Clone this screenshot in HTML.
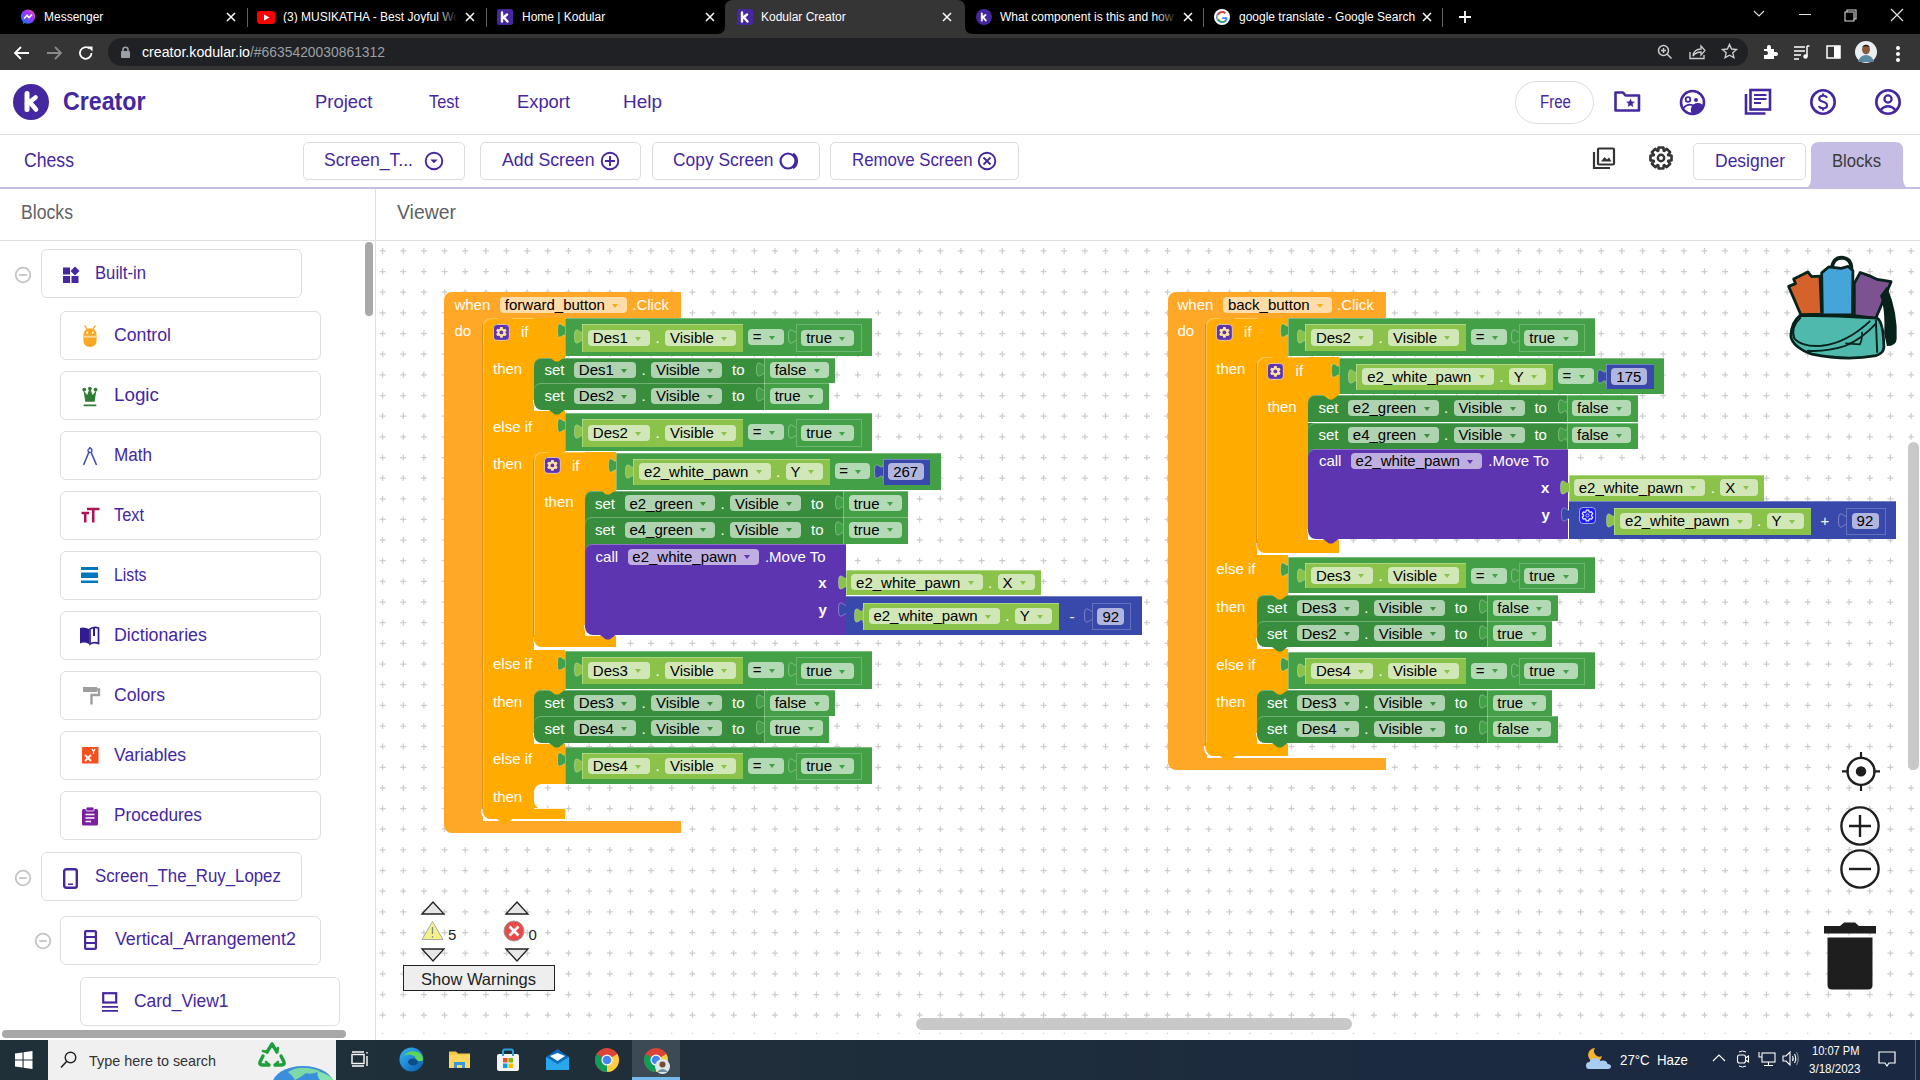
<!DOCTYPE html><html><head><meta charset="utf-8"><style>html,body{margin:0;padding:0;width:1920px;height:1080px;overflow:hidden;background:#fff;font-family:"Liberation Sans",sans-serif}body>div,body>svg{position:absolute}svg{overflow:visible}</style></head><body>
<div style="left:0px;top:0px;width:1920px;height:34px;background:#000;"></div>
<div style="left:0px;top:34px;width:1920px;height:36px;background:#353535;"></div>
<svg style="left:717px;top:0px" width="256" height="34" viewBox="0 0 256 34"><path d="M0 34 Q8 34 8 26 V8 Q8 0 16 0 H240 Q248 0 248 8 V26 Q248 34 256 34 Z" fill="#353535"/></svg>
<svg style="left:20px;top:9px;" width="16" height="16" viewBox="0 0 16 16"><defs><linearGradient id="mg" x1="0" y1="1" x2="1" y2="0"><stop offset="0" stop-color="#0a7cff"/><stop offset=".6" stop-color="#a033ff"/><stop offset="1" stop-color="#ff5c87"/></linearGradient></defs><circle cx="8" cy="7.6" r="7.2" fill="url(#mg)"/><path d="M2.5 15.5 L4 11 L6 13 Z" fill="#0a7cff"/><path d="M4 9.5 L7 6.5 L9 8.5 L12 5.5" stroke="#fff" stroke-width="1.6" fill="none"/></svg>
<div style="left:44px;top:10.84px;font-size:12px;color:#fff;line-height:1;white-space:pre;">Messenger</div>
<svg style="left:226px;top:12px;" width="10" height="10" viewBox="0 0 10 10"><path d="M1 1 L9 9 M9 1 L1 9" stroke="#fff" stroke-width="1.5"/></svg>
<svg style="left:257px;top:11px;" width="18" height="13" viewBox="0 0 18 13"><rect x="0" y="0" width="18" height="13" rx="3" fill="#f00"/><path d="M7 3.5 L12.5 6.5 L7 9.5Z" fill="#fff"/></svg>
<div style="left:283px;top:10.84px;font-size:12px;color:#fff;line-height:1;white-space:pre;width:174px;overflow:hidden">(3) MUSIKATHA - Best Joyful Wor</div>
<svg style="left:465px;top:12px;" width="10" height="10" viewBox="0 0 10 10"><path d="M1 1 L9 9 M9 1 L1 9" stroke="#fff" stroke-width="1.5"/></svg>
<svg style="left:497px;top:9px;" width="16" height="16" viewBox="0 0 16 16"><rect width="16" height="16" rx="2.5" fill="#4527a0"/><path d="M5 3.5 v9 M5 9.5 L10 5.5 M6.8 8.2 L10.5 12.5" stroke="#fff" stroke-width="2.4" stroke-linecap="round" fill="none"/></svg>
<div style="left:522px;top:10.84px;font-size:12px;color:#fff;line-height:1;white-space:pre;">Home | Kodular</div>
<svg style="left:705px;top:12px;" width="10" height="10" viewBox="0 0 10 10"><path d="M1 1 L9 9 M9 1 L1 9" stroke="#fff" stroke-width="1.5"/></svg>
<svg style="left:737px;top:9px;" width="16" height="16" viewBox="0 0 16 16"><rect width="16" height="16" rx="2.5" fill="#4527a0"/><path d="M5 3.5 v9 M5 9.5 L10 5.5 M6.8 8.2 L10.5 12.5" stroke="#fff" stroke-width="2.4" stroke-linecap="round" fill="none"/></svg>
<div style="left:761px;top:10.84px;font-size:12px;color:#fff;line-height:1;white-space:pre;">Kodular Creator</div>
<svg style="left:942px;top:12px;" width="10" height="10" viewBox="0 0 10 10"><path d="M1 1 L9 9 M9 1 L1 9" stroke="#fff" stroke-width="1.5"/></svg>
<svg style="left:976px;top:9px;" width="16" height="16" viewBox="0 0 16 16"><circle cx="8" cy="8" r="8" fill="#4527a0"/><path d="M5.8 4.5 v7 M5.8 9 L9.5 6 M7 8 L9.8 11.5" stroke="#fff" stroke-width="1.9" stroke-linecap="round" fill="none"/></svg>
<div style="left:1000px;top:10.84px;font-size:12px;color:#fff;line-height:1;white-space:pre;width:176px;overflow:hidden">What component is this and how</div>
<svg style="left:1183px;top:12px;" width="10" height="10" viewBox="0 0 10 10"><path d="M1 1 L9 9 M9 1 L1 9" stroke="#fff" stroke-width="1.5"/></svg>
<svg style="left:1214px;top:9px;" width="16" height="16" viewBox="0 0 16 16"><circle cx="8" cy="8" r="8" fill="#fff"/><path d="M13.5 8.2 H8.2 V9.9 H11.6 Q11 12.3 8 12.3 A4.3 4.3 0 1 1 10.9 4.8 L12.1 3.6 A6 6 0 1 0 8 14 Q13.6 14 13.5 8.2Z" fill="#4285f4"/><path d="M3.2 5.4 A5.6 5.6 0 0 1 12.1 3.6 L10.9 4.8 A4.3 4.3 0 0 0 4.5 6.3Z" fill="#ea4335"/><path d="M3.2 5.4 L4.5 6.3 A4.3 4.3 0 0 0 4.5 9.7 L3.2 10.7 A6 6 0 0 1 3.2 5.4Z" fill="#fbbc05"/><path d="M3.2 10.7 L4.5 9.7 A4.3 4.3 0 0 0 10.4 11.6 L11.6 12.6 A6 6 0 0 1 3.2 10.7Z" fill="#34a853"/></svg>
<div style="left:1239px;top:10.84px;font-size:12px;color:#fff;line-height:1;white-space:pre;">google translate - Google Search</div>
<svg style="left:1422px;top:12px;" width="10" height="10" viewBox="0 0 10 10"><path d="M1 1 L9 9 M9 1 L1 9" stroke="#fff" stroke-width="1.5"/></svg>
<div style="left:437px;top:4px;width:21px;height:26px;background:linear-gradient(90deg,rgba(0,0,0,0),#000);"></div>
<div style="left:1156px;top:4px;width:21px;height:26px;background:linear-gradient(90deg,rgba(0,0,0,0),#000);"></div>
<div style="left:247px;top:8px;width:1px;height:19px;background:#5f5f5f;"></div>
<div style="left:486px;top:8px;width:1px;height:19px;background:#5f5f5f;"></div>
<div style="left:1203px;top:8px;width:1px;height:19px;background:#5f5f5f;"></div>
<div style="left:1442px;top:8px;width:1px;height:19px;background:#5f5f5f;"></div>
<svg style="left:1458px;top:10px;" width="14" height="14" viewBox="0 0 14 14"><path d="M7 1 V13 M1 7 H13" stroke="#fff" stroke-width="1.8"/></svg>
<svg style="left:1753px;top:10px;" width="12" height="8" viewBox="0 0 12 8"><path d="M1 1 L6 6 L11 1" stroke="#ddd" stroke-width="1.2" fill="none"/></svg>
<div style="left:1799px;top:14px;width:12px;height:1px;background:#ddd;"></div>
<svg style="left:1844px;top:9px;" width="13" height="13" viewBox="0 0 13 13"><path d="M3 3 V1 H12 V10 H10 M1 3 H10 V12 H1 Z" stroke="#ddd" stroke-width="1.1" fill="none"/></svg>
<svg style="left:1890px;top:8px;" width="14" height="14" viewBox="0 0 14 14"><path d="M1 1 L13 13 M13 1 L1 13" stroke="#ddd" stroke-width="1.3"/></svg>
<svg style="left:13px;top:45px;" width="18" height="16" viewBox="0 0 18 16"><path d="M16 8 H2 M8 2 L2 8 L8 14" stroke="#fff" stroke-width="1.8" fill="none"/></svg>
<svg style="left:45px;top:45px;" width="18" height="16" viewBox="0 0 18 16"><path d="M2 8 H16 M10 2 L16 8 L10 14" stroke="#8a8a8a" stroke-width="1.8" fill="none"/></svg>
<svg style="left:77px;top:44px;" width="18" height="18" viewBox="0 0 18 18"><path d="M14.5 9 A5.8 5.8 0 1 1 12.5 4.6" stroke="#fff" stroke-width="1.8" fill="none"/><path d="M10.5 2.5 H15.5 V7.5 Z" fill="#fff"/></svg>
<div style="left:108px;top:38px;width:1640px;height:28px;background:#202124;border-radius:14px;"></div>
<svg style="left:120px;top:46px;" width="12" height="12" viewBox="0 0 12 12"><rect x="1" y="5" width="9" height="7" rx="1" fill="#9aa0a6"/><path d="M3 5.5 V3.8 A2.5 2.5 0 0 1 8 3.8 V5.5" stroke="#9aa0a6" stroke-width="1.6" fill="none"/></svg>
<div style="left:142px;top:45.15px;font-size:14px;color:#fff;line-height:1;white-space:pre;transform:scaleX(1.0129);transform-origin:0 0;">creator.kodular.io</div>
<div style="left:250px;top:45.15px;font-size:14px;color:#9aa0a6;line-height:1;white-space:pre;transform:scaleX(0.9908);transform-origin:0 0;">/#6635420030861312</div>
<svg style="left:1657px;top:44px;" width="16" height="16" viewBox="0 0 16 16"><circle cx="6.5" cy="6.5" r="5" stroke="#ccc" stroke-width="1.5" fill="none"/><path d="M10 10 L14.5 14.5 M4 6.5 H9 M6.5 4 V9" stroke="#ccc" stroke-width="1.5"/></svg>
<svg style="left:1689px;top:44px;" width="17" height="16" viewBox="0 0 17 16"><path d="M1 8 V14.5 H15 V11" stroke="#ccc" stroke-width="1.4" fill="none"/><path d="M4 12 Q5 5 12 5 V2 L16 6.5 L12 11 V8 Q7 8 4 12Z" stroke="#ccc" stroke-width="1.3" fill="none"/></svg>
<svg style="left:1721px;top:43px;" width="17" height="17" viewBox="0 0 17 17"><path d="M8.5 1.5 L10.6 6 L15.5 6.5 L11.8 9.8 L12.9 14.7 L8.5 12.2 L4.1 14.7 L5.2 9.8 L1.5 6.5 L6.4 6 Z" stroke="#ccc" stroke-width="1.4" fill="none"/></svg>
<svg style="left:1761px;top:43px;" width="18" height="18" viewBox="0 0 18 18"><path d="M3 6 H6 V4 A2 2 0 0 1 10 4 V6 H13 V9 H15 A2 2 0 0 1 15 13 H13 V16 H3 V12 H5 A2 2 0 0 0 5 8 H3 Z" fill="#fff"/></svg>
<svg style="left:1793px;top:44px;" width="17" height="16" viewBox="0 0 17 16"><path d="M1 3 H12 M1 7 H12 M1 11 H8 M1 15 H6" stroke="#fff" stroke-width="1.5"/><path d="M14 2 V12" stroke="#fff" stroke-width="1.5"/><circle cx="12.5" cy="12.5" r="2.2" fill="#fff"/><path d="M14 2 H16.5" stroke="#fff" stroke-width="1.5"/></svg>
<svg style="left:1826px;top:45px;" width="15" height="14" viewBox="0 0 15 14"><rect x="1" y="1" width="13" height="12" stroke="#fff" stroke-width="1.5" fill="none"/><rect x="8" y="1" width="6" height="12" fill="#fff"/></svg>
<svg style="left:1854px;top:40px;" width="24" height="24" viewBox="0 0 24 24"><circle cx="12" cy="12" r="11" fill="#e8eef2"/><path d="M4 22 Q6 15 12 15 Q18 15 20 22Z" fill="#5a8aa0"/><ellipse cx="12" cy="9.5" rx="4" ry="4.8" fill="#8a5a3c"/><path d="M8 7 Q12 2.5 16 7 Q12 5.5 8 7Z" fill="#1a1a1a"/></svg>
<div style="left:1896px;top:46px;width:3.5px;height:3.5px;background:#fff;border-radius:2px;"></div>
<div style="left:1896px;top:52px;width:3.5px;height:3.5px;background:#fff;border-radius:2px;"></div>
<div style="left:1896px;top:58px;width:3.5px;height:3.5px;background:#fff;border-radius:2px;"></div>
<div style="left:0px;top:70px;width:1920px;height:64px;background:#fff;"></div>
<div style="left:0px;top:134px;width:1920px;height:1px;background:#e0e0e0;"></div>
<svg style="left:13px;top:84px;" width="36" height="36" viewBox="0 0 36 36"><circle cx="18" cy="18" r="18" fill="#4527a0"/><path d="M14 9.5 V25.5" stroke="#fff" stroke-width="5" stroke-linecap="round"/><path d="M14 20 L22.5 13.5 M17 18.5 L23 25.5" stroke="#fff" stroke-width="4.6" stroke-linecap="round"/></svg>
<div style="left:63px;top:88.84px;font-size:25px;color:#4527a0;line-height:1;white-space:pre;font-weight:bold;transform:scaleX(0.9280);transform-origin:0 0;">Creator</div>
<div style="left:314.6px;top:91.92px;font-size:19px;color:#4527a0;line-height:1;white-space:pre;transform:scaleX(0.9707);transform-origin:0 0;">Project</div>
<div style="left:429px;top:91.92px;font-size:19px;color:#4527a0;line-height:1;white-space:pre;transform:scaleX(0.8609);transform-origin:0 0;">Test</div>
<div style="left:517px;top:91.92px;font-size:19px;color:#4527a0;line-height:1;white-space:pre;transform:scaleX(0.9652);transform-origin:0 0;">Export</div>
<div style="left:623px;top:91.92px;font-size:19px;color:#4527a0;line-height:1;white-space:pre;transform:scaleX(0.9980);transform-origin:0 0;">Help</div>
<div style="left:1515px;top:80.5px;width:79px;height:43.5px;border:1px solid #dcdcdc;border-radius:22px;box-sizing:border-box"></div>
<div style="left:1540px;top:93.69px;font-size:17.5px;color:#4527a0;line-height:1;white-space:pre;transform:scaleX(0.8615);transform-origin:0 0;">Free</div>
<svg style="left:1613px;top:90px;" width="29" height="24" viewBox="0 0 29 24"><path d="M2.5 2.5 H10 L12.5 5.5 H26 V20.5 H2.5 Z" stroke="#4527a0" stroke-width="2.6" fill="none" stroke-linejoin="round"/><path d="M17.5 8.5 L18.8 11.6 L22 11.8 L19.5 13.8 L20.3 17 L17.5 15.2 L14.7 17 L15.5 13.8 L13 11.8 L16.2 11.6Z" fill="#4527a0"/></svg>
<svg style="left:1679px;top:89px;" width="27" height="27" viewBox="0 0 27 27"><circle cx="13.5" cy="13.5" r="11.5" stroke="#4527a0" stroke-width="2.6" fill="none"/><circle cx="9" cy="10.5" r="2.3" stroke="#4527a0" stroke-width="1.8" fill="none"/><circle cx="17" cy="11" r="2" fill="#4527a0"/><path d="M4.5 19 Q9 14 14 16.5" stroke="#4527a0" stroke-width="1.8" fill="none"/><path d="M13 25 A5.5 5.5 0 0 1 24.5 17 A11.5 11.5 0 0 1 13 25Z" fill="#4527a0"/></svg>
<svg style="left:1743px;top:88px;" width="30" height="28" viewBox="0 0 30 28"><path d="M3 6 V25.5 H22.5" stroke="#4527a0" stroke-width="2.6" fill="none"/><rect x="7.5" y="2" width="19.5" height="19.5" stroke="#4527a0" stroke-width="2.6" fill="none"/><path d="M11 7 H23.5 M11 11 H23.5 M11 15 H18" stroke="#4527a0" stroke-width="2.2"/></svg>
<svg style="left:1809px;top:88px;" width="28" height="28" viewBox="0 0 28 28"><circle cx="14" cy="14" r="11.7" stroke="#4527a0" stroke-width="2.6" fill="none"/><path d="M17.8 9.8 Q17.5 7.8 14 7.8 Q10.2 7.8 10.2 10.6 Q10.2 13 14 13.8 Q18 14.6 18 17.4 Q18 20.2 14 20.2 Q10.4 20.2 10 18" stroke="#4527a0" stroke-width="2.1" fill="none"/><path d="M14 5.5 V8 M14 20 V22.5" stroke="#4527a0" stroke-width="2.1"/></svg>
<svg style="left:1874px;top:88px;" width="28" height="28" viewBox="0 0 28 28"><circle cx="14" cy="14" r="11.7" stroke="#4527a0" stroke-width="2.6" fill="none"/><circle cx="14" cy="11" r="3.6" stroke="#4527a0" stroke-width="2.3" fill="none"/><path d="M6.5 22 Q14 14.5 21.5 22" stroke="#4527a0" stroke-width="2.4" fill="none"/></svg>
<div style="left:0px;top:135px;width:1920px;height:53px;background:#fff;"></div>
<div style="left:0px;top:187px;width:1920px;height:2px;background:#c5bde3;"></div>
<div style="left:24px;top:150.66px;font-size:19.3px;color:#4527a0;line-height:1;white-space:pre;transform:scaleX(0.9140);transform-origin:0 0;">Chess</div>
<div style="left:303px;top:142px;width:162px;height:38px;border:1px solid #dcdcdc;border-radius:5px;box-sizing:border-box"></div>
<div style="left:324px;top:150.42px;font-size:19px;color:#4527a0;line-height:1;white-space:pre;transform:scaleX(0.9261);transform-origin:0 0;">Screen_T...</div>
<svg style="left:423.5px;top:151px;" width="20" height="20" viewBox="0 0 20 20"><circle cx="10" cy="10" r="8.3" stroke="#4527a0" stroke-width="1.9" fill="none"/><path d="M6.3 8.6 L10 12.3 L13.7 8.6Z" fill="#4527a0"/></svg>
<div style="left:480px;top:142px;width:161px;height:38px;border:1px solid #dcdcdc;border-radius:5px;box-sizing:border-box"></div>
<div style="left:501.5px;top:150.42px;font-size:19px;color:#4527a0;line-height:1;white-space:pre;transform:scaleX(0.9316);transform-origin:0 0;">Add Screen</div>
<svg style="left:599.5px;top:151px;" width="20" height="20" viewBox="0 0 20 20"><circle cx="10" cy="10" r="8.3" stroke="#4527a0" stroke-width="1.9" fill="none"/><path d="M10 5 V15 M5 10 H15" stroke="#4527a0" stroke-width="1.9"/></svg>
<div style="left:651.5px;top:142px;width:168px;height:38px;border:1px solid #dcdcdc;border-radius:5px;box-sizing:border-box"></div>
<div style="left:672.5px;top:150.42px;font-size:19px;color:#4527a0;line-height:1;white-space:pre;transform:scaleX(0.9150);transform-origin:0 0;">Copy Screen</div>
<svg style="left:778.5px;top:151px;" width="22" height="20" viewBox="0 0 22 20"><circle cx="9" cy="10" r="7.5" stroke="#4527a0" stroke-width="2.2" fill="none"/><path d="M14 2.8 A8.5 8.5 0 0 1 14 17.2" stroke="#4527a0" stroke-width="2.2" fill="none"/></svg>
<div style="left:830px;top:142px;width:188.5px;height:38px;border:1px solid #dcdcdc;border-radius:5px;box-sizing:border-box"></div>
<div style="left:852px;top:150.42px;font-size:19px;color:#4527a0;line-height:1;white-space:pre;transform:scaleX(0.8845);transform-origin:0 0;">Remove Screen</div>
<svg style="left:977px;top:151px;" width="20" height="20" viewBox="0 0 20 20"><circle cx="10" cy="10" r="8.3" stroke="#4527a0" stroke-width="1.9" fill="none"/><path d="M6.5 6.5 L13.5 13.5 M13.5 6.5 L6.5 13.5" stroke="#4527a0" stroke-width="1.9"/></svg>
<svg style="left:1592px;top:147px;" width="24" height="24" viewBox="0 0 24 24"><path d="M2 5 V21 H18" stroke="#333" stroke-width="2.2" fill="none"/><rect x="6" y="1.5" width="16" height="16" rx="1" stroke="#333" stroke-width="2.2" fill="none"/><path d="M9 14.5 L12.5 10 L15 12.5 L17 10.5 L19.5 14.5Z" fill="#333"/></svg>
<svg style="left:1650px;top:147px;" width="22" height="22" viewBox="0 0 22 22"><path d="M21.54 8.64 L21.54 13.36 L18.30 13.75 L18.10 14.22 L20.12 16.79 L16.79 20.12 L14.22 18.10 L13.75 18.30 L13.36 21.54 L8.64 21.54 L8.25 18.30 L7.78 18.10 L5.21 20.12 L1.88 16.79 L3.90 14.22 L3.70 13.75 L0.46 13.36 L0.46 8.64 L3.70 8.25 L3.90 7.78 L1.88 5.21 L5.21 1.88 L7.78 3.90 L8.25 3.70 L8.64 0.46 L13.36 0.46 L13.75 3.70 L14.22 3.90 L16.79 1.88 L20.12 5.21 L18.10 7.78 L18.30 8.25Z" stroke="#333" stroke-width="2.6" fill="none" stroke-linejoin="round"/><circle cx="11" cy="11" r="3.2" stroke="#333" stroke-width="2.4" fill="none"/></svg>
<div style="left:1692.5px;top:142.5px;width:113px;height:37px;border:1px solid #dcdcdc;border-radius:5px;box-sizing:border-box"></div>
<div style="left:1714.5px;top:151.32px;font-size:19px;color:#4527a0;line-height:1;white-space:pre;transform:scaleX(0.9206);transform-origin:0 0;">Designer</div>
<svg style="left:1801px;top:142px" width="112" height="47" viewBox="0 0 112 47"><path d="M0 47 Q10 47 10 37 V8 Q10 0 18 0 H94 Q102 0 102 8 V37 Q102 47 112 47Z" fill="#c5bde3"/></svg>
<div style="left:1832.3px;top:151.32px;font-size:19px;color:#3b3b3b;line-height:1;white-space:pre;transform:scaleX(0.8756);transform-origin:0 0;">Blocks</div>
<div style="left:0px;top:189px;width:1920px;height:51px;background:#fff;"></div>
<div style="left:0px;top:240px;width:1920px;height:1px;background:#e0e0e0;"></div>
<div style="left:21px;top:202.86px;font-size:19.3px;color:#616161;line-height:1;white-space:pre;transform:scaleX(0.9148);transform-origin:0 0;">Blocks</div>
<div style="left:397px;top:202.86px;font-size:19.3px;color:#616161;line-height:1;white-space:pre;transform:scaleX(1.0060);transform-origin:0 0;">Viewer</div>
<div style="left:0px;top:241px;width:375px;height:799px;background:#fff;"></div>
<div style="left:375px;top:189px;width:1px;height:851px;background:#e0e0e0;"></div>
<div style="left:365px;top:242px;width:8px;height:74px;background:#a8a8a8;border-radius:4px;"></div>
<div style="left:2px;top:1030px;width:344px;height:8px;background:#a8a8a8;border-radius:4px;"></div>
<svg style="left:13.8px;top:266px;" width="18" height="18" viewBox="0 0 18 18"><circle cx="9" cy="9" r="7.3" stroke="#c4c4c4" stroke-width="1.8" fill="none"/><path d="M5.2 9 H12.8" stroke="#c4c4c4" stroke-width="1.8"/></svg>
<div style="left:40.6px;top:249.3px;width:261.2px;height:49px;border:1px solid #dedede;border-radius:6px;box-sizing:border-box;background:#fff"></div>
<div style="left:95.4px;top:263.69px;font-size:18.8px;color:#4527a0;line-height:1;white-space:pre;transform:scaleX(0.8875);transform-origin:0 0;">Built-in</div>
<svg style="left:62px;top:266px;" width="19" height="18" viewBox="0 0 19 18"><rect x="1" y="1.5" width="7" height="7" fill="#4527a0"/><rect x="1" y="10" width="7" height="7" fill="#4527a0"/><rect x="9.5" y="10" width="7" height="7" fill="#4527a0"/><path d="M13 0.5 L17.5 5 L13 9.5 L8.5 5Z" fill="#4527a0"/></svg>
<div style="left:59.5px;top:311.2px;width:261px;height:49px;border:1px solid #dedede;border-radius:6px;box-sizing:border-box;background:#fff"></div>
<div style="left:114.4px;top:325.59px;font-size:18.8px;color:#4527a0;line-height:1;white-space:pre;transform:scaleX(0.9405);transform-origin:0 0;">Control</div>
<svg style="left:82px;top:325px;" width="16" height="23" viewBox="0 0 16 23"><path d="M1.4 11 Q1.4 3.2 8 3.2 Q14.6 3.2 14.6 11 V15.5 Q14.6 22 8 22 Q1.4 22 1.4 15.5 Z" fill="#f9a825"/><path d="M3 0.8 L5.2 4.5 M13 0.8 L10.8 4.5" stroke="#f9a825" stroke-width="1.3" stroke-linecap="round"/><rect x="1.4" y="10.7" width="13.2" height="2" fill="#fbd591"/><circle cx="5.2" cy="7.8" r="1" fill="#fff"/><circle cx="10.8" cy="7.8" r="1" fill="#fff"/></svg>
<div style="left:59.5px;top:371.2px;width:261px;height:49px;border:1px solid #dedede;border-radius:6px;box-sizing:border-box;background:#fff"></div>
<div style="left:114.4px;top:385.59px;font-size:18.8px;color:#4527a0;line-height:1;white-space:pre;transform:scaleX(1.0012);transform-origin:0 0;">Logic</div>
<svg style="left:82px;top:386px;" width="16" height="21" viewBox="0 0 16 21"><circle cx="2.3" cy="3.6" r="1.9" fill="#2e7d32"/><circle cx="7.9" cy="2.6" r="1.9" fill="#2e7d32"/><circle cx="13.5" cy="3.6" r="1.9" fill="#2e7d32"/><path d="M1.5 4.5 L5.2 9 L7 4 H8.8 L10.6 9 L14.3 4.5 L12.6 15.8 H3.3 Z" fill="#2e7d32"/><rect x="1.5" y="18.4" width="13" height="1.8" rx="0.9" fill="#2e7d32"/></svg>
<div style="left:59.5px;top:431.2px;width:261px;height:49px;border:1px solid #dedede;border-radius:6px;box-sizing:border-box;background:#fff"></div>
<div style="left:114.4px;top:445.59px;font-size:18.8px;color:#4527a0;line-height:1;white-space:pre;transform:scaleX(0.9092);transform-origin:0 0;">Math</div>
<svg style="left:82px;top:446px;" width="16" height="20" viewBox="0 0 16 20"><circle cx="8" cy="4.5" r="2" stroke="#3f51b5" stroke-width="1.3" fill="none"/><path d="M8 1 V3 M7 6 L1.5 19 M9 6 L14.5 19" stroke="#3f51b5" stroke-width="1.6" fill="none"/></svg>
<div style="left:59.5px;top:491.2px;width:261px;height:49px;border:1px solid #dedede;border-radius:6px;box-sizing:border-box;background:#fff"></div>
<div style="left:114.4px;top:505.59px;font-size:18.8px;color:#4527a0;line-height:1;white-space:pre;transform:scaleX(0.8701);transform-origin:0 0;">Text</div>
<svg style="left:81px;top:506px;" width="19" height="17" viewBox="0 0 19 17"><path d="M0.5 7 H8 M4.2 7 V16.5 M6 3 H18.5 M12.2 3 V16.5" stroke="#ad1457" stroke-width="2.6" fill="none"/></svg>
<div style="left:59.5px;top:551.2px;width:261px;height:49px;border:1px solid #dedede;border-radius:6px;box-sizing:border-box;background:#fff"></div>
<div style="left:114.4px;top:565.59px;font-size:18.8px;color:#4527a0;line-height:1;white-space:pre;transform:scaleX(0.8407);transform-origin:0 0;">Lists</div>
<svg style="left:80px;top:566px;" width="19" height="18" viewBox="0 0 19 18"><rect x="1" y="1" width="17" height="3" fill="#0277bd"/><rect x="1" y="6.5" width="17" height="5.5" fill="#0277bd"/><rect x="1" y="14.5" width="17" height="2.5" fill="#0277bd"/></svg>
<div style="left:59.5px;top:611.2px;width:261px;height:49px;border:1px solid #dedede;border-radius:6px;box-sizing:border-box;background:#fff"></div>
<div style="left:114.4px;top:625.59px;font-size:18.8px;color:#4527a0;line-height:1;white-space:pre;transform:scaleX(0.9469);transform-origin:0 0;">Dictionaries</div>
<svg style="left:79px;top:626px;" width="21" height="19" viewBox="0 0 21 19"><path d="M1 2 Q5 0.5 10 3 V18 Q5 15.5 1 17.5Z" fill="#311b92"/><path d="M11 3 Q15 0.5 19.5 2 V17.5 Q15 15.5 11 18Z" stroke="#311b92" stroke-width="1.7" fill="none"/><path d="M15 2 V10" stroke="#311b92" stroke-width="2"/></svg>
<div style="left:59.5px;top:671.2px;width:261px;height:49px;border:1px solid #dedede;border-radius:6px;box-sizing:border-box;background:#fff"></div>
<div style="left:114.4px;top:685.59px;font-size:18.8px;color:#4527a0;line-height:1;white-space:pre;transform:scaleX(0.9388);transform-origin:0 0;">Colors</div>
<svg style="left:82px;top:686px;" width="18" height="19" viewBox="0 0 18 19"><rect x="1" y="1" width="14" height="5" fill="#9e9e9e"/><path d="M15 3.5 H17 V9 H9.5 V18.5" stroke="#9e9e9e" stroke-width="2.4" fill="none"/></svg>
<div style="left:59.5px;top:731.2px;width:261px;height:49px;border:1px solid #dedede;border-radius:6px;box-sizing:border-box;background:#fff"></div>
<div style="left:114.4px;top:745.59px;font-size:18.8px;color:#4527a0;line-height:1;white-space:pre;transform:scaleX(0.9353);transform-origin:0 0;">Variables</div>
<svg style="left:81px;top:746px;" width="18" height="18" viewBox="0 0 18 18"><rect x="1" y="1" width="16.5" height="16.5" fill="#f4511e"/><path d="M4 9 L10 15 M10 9 L4 15" stroke="#fff" stroke-width="1.8"/><path d="M11 3 L12.5 5.5 L14 3 M12.5 5.5 V8" stroke="#fff" stroke-width="1.2" fill="none"/></svg>
<div style="left:59.5px;top:791.2px;width:261px;height:49px;border:1px solid #dedede;border-radius:6px;box-sizing:border-box;background:#fff"></div>
<div style="left:114.4px;top:805.59px;font-size:18.8px;color:#4527a0;line-height:1;white-space:pre;transform:scaleX(0.9153);transform-origin:0 0;">Procedures</div>
<svg style="left:81px;top:806px;" width="18" height="20" viewBox="0 0 18 20"><rect x="1" y="3" width="16" height="16.5" rx="1.5" fill="#7b1fa2"/><rect x="5" y="1" width="8" height="4" rx="1" fill="#7b1fa2" stroke="#fff" stroke-width="0.8"/><path d="M4.5 8.5 H13.5 M4.5 12 H13.5 M4.5 15.5 H10" stroke="#fff" stroke-width="1.5"/></svg>
<svg style="left:13.9px;top:868.5px;" width="18" height="18" viewBox="0 0 18 18"><circle cx="9" cy="9" r="7.3" stroke="#c4c4c4" stroke-width="1.8" fill="none"/><path d="M5.2 9 H12.8" stroke="#c4c4c4" stroke-width="1.8"/></svg>
<div style="left:40.5px;top:852.2px;width:261px;height:49px;border:1px solid #dedede;border-radius:6px;box-sizing:border-box;background:#fff"></div>
<div style="left:95.1px;top:866.59px;font-size:18.8px;color:#4527a0;line-height:1;white-space:pre;transform:scaleX(0.8943);transform-origin:0 0;">Screen_The_Ruy_Lopez</div>
<svg style="left:63px;top:868px;" width="15" height="21" viewBox="0 0 15 21"><rect x="1.2" y="1.2" width="12.6" height="18.6" rx="2" stroke="#4527a0" stroke-width="2.4" fill="none"/><rect x="5" y="15.5" width="5" height="1.5" fill="#4527a0"/></svg>
<svg style="left:33.9px;top:931.8px;" width="18" height="18" viewBox="0 0 18 18"><circle cx="9" cy="9" r="7.3" stroke="#c4c4c4" stroke-width="1.8" fill="none"/><path d="M5.2 9 H12.8" stroke="#c4c4c4" stroke-width="1.8"/></svg>
<div style="left:60.2px;top:915.6px;width:261.3px;height:49px;border:1px solid #dedede;border-radius:6px;box-sizing:border-box;background:#fff"></div>
<div style="left:115.1px;top:929.99px;font-size:18.8px;color:#4527a0;line-height:1;white-space:pre;transform:scaleX(0.9464);transform-origin:0 0;">Vertical_Arrangement2</div>
<svg style="left:84px;top:930px;" width="13" height="20" viewBox="0 0 13 20"><rect x="1.1" y="1.1" width="10.8" height="17.8" rx="1" stroke="#4527a0" stroke-width="2.2" fill="none"/><path d="M1 7 H12 M1 13 H12" stroke="#4527a0" stroke-width="2"/></svg>
<div style="left:79.5px;top:977.4px;width:260.7px;height:49px;border:1px solid #dedede;border-radius:6px;box-sizing:border-box;background:#fff"></div>
<div style="left:134.1px;top:991.79px;font-size:18.8px;color:#4527a0;line-height:1;white-space:pre;transform:scaleX(0.9268);transform-origin:0 0;">Card_View1</div>
<svg style="left:102px;top:992px;" width="16" height="20" viewBox="0 0 16 20"><rect x="1.2" y="1.2" width="13" height="9.3" stroke="#4527a0" stroke-width="2.2" fill="none"/><path d="M0 14.8 H16 M0 18.8 H16" stroke="#4527a0" stroke-width="1.8"/></svg>
<div style="left:376px;top:241px;width:1544px;height:799px;background:#fff;"></div>
<svg style="left:376px;top:241px;overflow:hidden" width="1544" height="793" viewBox="376 241 1544 793"><path d="M379.6 250.9h6M382.6 247.9v6M400.3 250.9h6M403.3 247.9v6M420.9 250.9h6M423.9 247.9v6M441.6 250.9h6M444.6 247.9v6M462.2 250.9h6M465.2 247.9v6M482.9 250.9h6M485.9 247.9v6M503.5 250.9h6M506.5 247.9v6M524.2 250.9h6M527.2 247.9v6M544.8 250.9h6M547.8 247.9v6M565.5 250.9h6M568.5 247.9v6M586.2 250.9h6M589.2 247.9v6M606.8 250.9h6M609.8 247.9v6M627.5 250.9h6M630.5 247.9v6M648.1 250.9h6M651.1 247.9v6M668.8 250.9h6M671.8 247.9v6M689.4 250.9h6M692.4 247.9v6M710.1 250.9h6M713.1 247.9v6M730.7 250.9h6M733.7 247.9v6M751.4 250.9h6M754.4 247.9v6M772.0 250.9h6M775.0 247.9v6M792.7 250.9h6M795.7 247.9v6M813.4 250.9h6M816.4 247.9v6M834.0 250.9h6M837.0 247.9v6M854.7 250.9h6M857.7 247.9v6M875.3 250.9h6M878.3 247.9v6M896.0 250.9h6M899.0 247.9v6M916.6 250.9h6M919.6 247.9v6M937.3 250.9h6M940.3 247.9v6M957.9 250.9h6M960.9 247.9v6M978.6 250.9h6M981.6 247.9v6M999.3 250.9h6M1002.3 247.9v6M1019.9 250.9h6M1022.9 247.9v6M1040.6 250.9h6M1043.6 247.9v6M1061.2 250.9h6M1064.2 247.9v6M1081.9 250.9h6M1084.9 247.9v6M1102.5 250.9h6M1105.5 247.9v6M1123.2 250.9h6M1126.2 247.9v6M1143.8 250.9h6M1146.8 247.9v6M1164.5 250.9h6M1167.5 247.9v6M1185.1 250.9h6M1188.1 247.9v6M1205.8 250.9h6M1208.8 247.9v6M1226.5 250.9h6M1229.5 247.9v6M1247.1 250.9h6M1250.1 247.9v6M1267.8 250.9h6M1270.8 247.9v6M1288.4 250.9h6M1291.4 247.9v6M1309.1 250.9h6M1312.1 247.9v6M1329.7 250.9h6M1332.7 247.9v6M1350.4 250.9h6M1353.4 247.9v6M1371.0 250.9h6M1374.0 247.9v6M1391.7 250.9h6M1394.7 247.9v6M1412.3 250.9h6M1415.3 247.9v6M1433.0 250.9h6M1436.0 247.9v6M1453.7 250.9h6M1456.7 247.9v6M1474.3 250.9h6M1477.3 247.9v6M1495.0 250.9h6M1498.0 247.9v6M1515.6 250.9h6M1518.6 247.9v6M1536.3 250.9h6M1539.3 247.9v6M1556.9 250.9h6M1559.9 247.9v6M1577.6 250.9h6M1580.6 247.9v6M1598.2 250.9h6M1601.2 247.9v6M1618.9 250.9h6M1621.9 247.9v6M1639.6 250.9h6M1642.6 247.9v6M1660.2 250.9h6M1663.2 247.9v6M1680.9 250.9h6M1683.9 247.9v6M1701.5 250.9h6M1704.5 247.9v6M1722.2 250.9h6M1725.2 247.9v6M1742.8 250.9h6M1745.8 247.9v6M1763.5 250.9h6M1766.5 247.9v6M1784.1 250.9h6M1787.1 247.9v6M1804.8 250.9h6M1807.8 247.9v6M1825.5 250.9h6M1828.5 247.9v6M1846.1 250.9h6M1849.1 247.9v6M1866.8 250.9h6M1869.8 247.9v6M1887.4 250.9h6M1890.4 247.9v6M1908.1 250.9h6M1911.1 247.9v6M379.6 271.6h6M382.6 268.6v6M400.3 271.6h6M403.3 268.6v6M420.9 271.6h6M423.9 268.6v6M441.6 271.6h6M444.6 268.6v6M462.2 271.6h6M465.2 268.6v6M482.9 271.6h6M485.9 268.6v6M503.5 271.6h6M506.5 268.6v6M524.2 271.6h6M527.2 268.6v6M544.8 271.6h6M547.8 268.6v6M565.5 271.6h6M568.5 268.6v6M586.2 271.6h6M589.2 268.6v6M606.8 271.6h6M609.8 268.6v6M627.5 271.6h6M630.5 268.6v6M648.1 271.6h6M651.1 268.6v6M668.8 271.6h6M671.8 268.6v6M689.4 271.6h6M692.4 268.6v6M710.1 271.6h6M713.1 268.6v6M730.7 271.6h6M733.7 268.6v6M751.4 271.6h6M754.4 268.6v6M772.0 271.6h6M775.0 268.6v6M792.7 271.6h6M795.7 268.6v6M813.4 271.6h6M816.4 268.6v6M834.0 271.6h6M837.0 268.6v6M854.7 271.6h6M857.7 268.6v6M875.3 271.6h6M878.3 268.6v6M896.0 271.6h6M899.0 268.6v6M916.6 271.6h6M919.6 268.6v6M937.3 271.6h6M940.3 268.6v6M957.9 271.6h6M960.9 268.6v6M978.6 271.6h6M981.6 268.6v6M999.3 271.6h6M1002.3 268.6v6M1019.9 271.6h6M1022.9 268.6v6M1040.6 271.6h6M1043.6 268.6v6M1061.2 271.6h6M1064.2 268.6v6M1081.9 271.6h6M1084.9 268.6v6M1102.5 271.6h6M1105.5 268.6v6M1123.2 271.6h6M1126.2 268.6v6M1143.8 271.6h6M1146.8 268.6v6M1164.5 271.6h6M1167.5 268.6v6M1185.1 271.6h6M1188.1 268.6v6M1205.8 271.6h6M1208.8 268.6v6M1226.5 271.6h6M1229.5 268.6v6M1247.1 271.6h6M1250.1 268.6v6M1267.8 271.6h6M1270.8 268.6v6M1288.4 271.6h6M1291.4 268.6v6M1309.1 271.6h6M1312.1 268.6v6M1329.7 271.6h6M1332.7 268.6v6M1350.4 271.6h6M1353.4 268.6v6M1371.0 271.6h6M1374.0 268.6v6M1391.7 271.6h6M1394.7 268.6v6M1412.3 271.6h6M1415.3 268.6v6M1433.0 271.6h6M1436.0 268.6v6M1453.7 271.6h6M1456.7 268.6v6M1474.3 271.6h6M1477.3 268.6v6M1495.0 271.6h6M1498.0 268.6v6M1515.6 271.6h6M1518.6 268.6v6M1536.3 271.6h6M1539.3 268.6v6M1556.9 271.6h6M1559.9 268.6v6M1577.6 271.6h6M1580.6 268.6v6M1598.2 271.6h6M1601.2 268.6v6M1618.9 271.6h6M1621.9 268.6v6M1639.6 271.6h6M1642.6 268.6v6M1660.2 271.6h6M1663.2 268.6v6M1680.9 271.6h6M1683.9 268.6v6M1701.5 271.6h6M1704.5 268.6v6M1722.2 271.6h6M1725.2 268.6v6M1742.8 271.6h6M1745.8 268.6v6M1763.5 271.6h6M1766.5 268.6v6M1784.1 271.6h6M1787.1 268.6v6M1804.8 271.6h6M1807.8 268.6v6M1825.5 271.6h6M1828.5 268.6v6M1846.1 271.6h6M1849.1 268.6v6M1866.8 271.6h6M1869.8 268.6v6M1887.4 271.6h6M1890.4 268.6v6M1908.1 271.6h6M1911.1 268.6v6M379.6 292.2h6M382.6 289.2v6M400.3 292.2h6M403.3 289.2v6M420.9 292.2h6M423.9 289.2v6M441.6 292.2h6M444.6 289.2v6M462.2 292.2h6M465.2 289.2v6M482.9 292.2h6M485.9 289.2v6M503.5 292.2h6M506.5 289.2v6M524.2 292.2h6M527.2 289.2v6M544.8 292.2h6M547.8 289.2v6M565.5 292.2h6M568.5 289.2v6M586.2 292.2h6M589.2 289.2v6M606.8 292.2h6M609.8 289.2v6M627.5 292.2h6M630.5 289.2v6M648.1 292.2h6M651.1 289.2v6M668.8 292.2h6M671.8 289.2v6M689.4 292.2h6M692.4 289.2v6M710.1 292.2h6M713.1 289.2v6M730.7 292.2h6M733.7 289.2v6M751.4 292.2h6M754.4 289.2v6M772.0 292.2h6M775.0 289.2v6M792.7 292.2h6M795.7 289.2v6M813.4 292.2h6M816.4 289.2v6M834.0 292.2h6M837.0 289.2v6M854.7 292.2h6M857.7 289.2v6M875.3 292.2h6M878.3 289.2v6M896.0 292.2h6M899.0 289.2v6M916.6 292.2h6M919.6 289.2v6M937.3 292.2h6M940.3 289.2v6M957.9 292.2h6M960.9 289.2v6M978.6 292.2h6M981.6 289.2v6M999.3 292.2h6M1002.3 289.2v6M1019.9 292.2h6M1022.9 289.2v6M1040.6 292.2h6M1043.6 289.2v6M1061.2 292.2h6M1064.2 289.2v6M1081.9 292.2h6M1084.9 289.2v6M1102.5 292.2h6M1105.5 289.2v6M1123.2 292.2h6M1126.2 289.2v6M1143.8 292.2h6M1146.8 289.2v6M1164.5 292.2h6M1167.5 289.2v6M1185.1 292.2h6M1188.1 289.2v6M1205.8 292.2h6M1208.8 289.2v6M1226.5 292.2h6M1229.5 289.2v6M1247.1 292.2h6M1250.1 289.2v6M1267.8 292.2h6M1270.8 289.2v6M1288.4 292.2h6M1291.4 289.2v6M1309.1 292.2h6M1312.1 289.2v6M1329.7 292.2h6M1332.7 289.2v6M1350.4 292.2h6M1353.4 289.2v6M1371.0 292.2h6M1374.0 289.2v6M1391.7 292.2h6M1394.7 289.2v6M1412.3 292.2h6M1415.3 289.2v6M1433.0 292.2h6M1436.0 289.2v6M1453.7 292.2h6M1456.7 289.2v6M1474.3 292.2h6M1477.3 289.2v6M1495.0 292.2h6M1498.0 289.2v6M1515.6 292.2h6M1518.6 289.2v6M1536.3 292.2h6M1539.3 289.2v6M1556.9 292.2h6M1559.9 289.2v6M1577.6 292.2h6M1580.6 289.2v6M1598.2 292.2h6M1601.2 289.2v6M1618.9 292.2h6M1621.9 289.2v6M1639.6 292.2h6M1642.6 289.2v6M1660.2 292.2h6M1663.2 289.2v6M1680.9 292.2h6M1683.9 289.2v6M1701.5 292.2h6M1704.5 289.2v6M1722.2 292.2h6M1725.2 289.2v6M1742.8 292.2h6M1745.8 289.2v6M1763.5 292.2h6M1766.5 289.2v6M1784.1 292.2h6M1787.1 289.2v6M1804.8 292.2h6M1807.8 289.2v6M1825.5 292.2h6M1828.5 289.2v6M1846.1 292.2h6M1849.1 289.2v6M1866.8 292.2h6M1869.8 289.2v6M1887.4 292.2h6M1890.4 289.2v6M1908.1 292.2h6M1911.1 289.2v6M379.6 312.9h6M382.6 309.9v6M400.3 312.9h6M403.3 309.9v6M420.9 312.9h6M423.9 309.9v6M441.6 312.9h6M444.6 309.9v6M462.2 312.9h6M465.2 309.9v6M482.9 312.9h6M485.9 309.9v6M503.5 312.9h6M506.5 309.9v6M524.2 312.9h6M527.2 309.9v6M544.8 312.9h6M547.8 309.9v6M565.5 312.9h6M568.5 309.9v6M586.2 312.9h6M589.2 309.9v6M606.8 312.9h6M609.8 309.9v6M627.5 312.9h6M630.5 309.9v6M648.1 312.9h6M651.1 309.9v6M668.8 312.9h6M671.8 309.9v6M689.4 312.9h6M692.4 309.9v6M710.1 312.9h6M713.1 309.9v6M730.7 312.9h6M733.7 309.9v6M751.4 312.9h6M754.4 309.9v6M772.0 312.9h6M775.0 309.9v6M792.7 312.9h6M795.7 309.9v6M813.4 312.9h6M816.4 309.9v6M834.0 312.9h6M837.0 309.9v6M854.7 312.9h6M857.7 309.9v6M875.3 312.9h6M878.3 309.9v6M896.0 312.9h6M899.0 309.9v6M916.6 312.9h6M919.6 309.9v6M937.3 312.9h6M940.3 309.9v6M957.9 312.9h6M960.9 309.9v6M978.6 312.9h6M981.6 309.9v6M999.3 312.9h6M1002.3 309.9v6M1019.9 312.9h6M1022.9 309.9v6M1040.6 312.9h6M1043.6 309.9v6M1061.2 312.9h6M1064.2 309.9v6M1081.9 312.9h6M1084.9 309.9v6M1102.5 312.9h6M1105.5 309.9v6M1123.2 312.9h6M1126.2 309.9v6M1143.8 312.9h6M1146.8 309.9v6M1164.5 312.9h6M1167.5 309.9v6M1185.1 312.9h6M1188.1 309.9v6M1205.8 312.9h6M1208.8 309.9v6M1226.5 312.9h6M1229.5 309.9v6M1247.1 312.9h6M1250.1 309.9v6M1267.8 312.9h6M1270.8 309.9v6M1288.4 312.9h6M1291.4 309.9v6M1309.1 312.9h6M1312.1 309.9v6M1329.7 312.9h6M1332.7 309.9v6M1350.4 312.9h6M1353.4 309.9v6M1371.0 312.9h6M1374.0 309.9v6M1391.7 312.9h6M1394.7 309.9v6M1412.3 312.9h6M1415.3 309.9v6M1433.0 312.9h6M1436.0 309.9v6M1453.7 312.9h6M1456.7 309.9v6M1474.3 312.9h6M1477.3 309.9v6M1495.0 312.9h6M1498.0 309.9v6M1515.6 312.9h6M1518.6 309.9v6M1536.3 312.9h6M1539.3 309.9v6M1556.9 312.9h6M1559.9 309.9v6M1577.6 312.9h6M1580.6 309.9v6M1598.2 312.9h6M1601.2 309.9v6M1618.9 312.9h6M1621.9 309.9v6M1639.6 312.9h6M1642.6 309.9v6M1660.2 312.9h6M1663.2 309.9v6M1680.9 312.9h6M1683.9 309.9v6M1701.5 312.9h6M1704.5 309.9v6M1722.2 312.9h6M1725.2 309.9v6M1742.8 312.9h6M1745.8 309.9v6M1763.5 312.9h6M1766.5 309.9v6M1784.1 312.9h6M1787.1 309.9v6M1804.8 312.9h6M1807.8 309.9v6M1825.5 312.9h6M1828.5 309.9v6M1846.1 312.9h6M1849.1 309.9v6M1866.8 312.9h6M1869.8 309.9v6M1887.4 312.9h6M1890.4 309.9v6M1908.1 312.9h6M1911.1 309.9v6M379.6 333.5h6M382.6 330.5v6M400.3 333.5h6M403.3 330.5v6M420.9 333.5h6M423.9 330.5v6M441.6 333.5h6M444.6 330.5v6M462.2 333.5h6M465.2 330.5v6M482.9 333.5h6M485.9 330.5v6M503.5 333.5h6M506.5 330.5v6M524.2 333.5h6M527.2 330.5v6M544.8 333.5h6M547.8 330.5v6M565.5 333.5h6M568.5 330.5v6M586.2 333.5h6M589.2 330.5v6M606.8 333.5h6M609.8 330.5v6M627.5 333.5h6M630.5 330.5v6M648.1 333.5h6M651.1 330.5v6M668.8 333.5h6M671.8 330.5v6M689.4 333.5h6M692.4 330.5v6M710.1 333.5h6M713.1 330.5v6M730.7 333.5h6M733.7 330.5v6M751.4 333.5h6M754.4 330.5v6M772.0 333.5h6M775.0 330.5v6M792.7 333.5h6M795.7 330.5v6M813.4 333.5h6M816.4 330.5v6M834.0 333.5h6M837.0 330.5v6M854.7 333.5h6M857.7 330.5v6M875.3 333.5h6M878.3 330.5v6M896.0 333.5h6M899.0 330.5v6M916.6 333.5h6M919.6 330.5v6M937.3 333.5h6M940.3 330.5v6M957.9 333.5h6M960.9 330.5v6M978.6 333.5h6M981.6 330.5v6M999.3 333.5h6M1002.3 330.5v6M1019.9 333.5h6M1022.9 330.5v6M1040.6 333.5h6M1043.6 330.5v6M1061.2 333.5h6M1064.2 330.5v6M1081.9 333.5h6M1084.9 330.5v6M1102.5 333.5h6M1105.5 330.5v6M1123.2 333.5h6M1126.2 330.5v6M1143.8 333.5h6M1146.8 330.5v6M1164.5 333.5h6M1167.5 330.5v6M1185.1 333.5h6M1188.1 330.5v6M1205.8 333.5h6M1208.8 330.5v6M1226.5 333.5h6M1229.5 330.5v6M1247.1 333.5h6M1250.1 330.5v6M1267.8 333.5h6M1270.8 330.5v6M1288.4 333.5h6M1291.4 330.5v6M1309.1 333.5h6M1312.1 330.5v6M1329.7 333.5h6M1332.7 330.5v6M1350.4 333.5h6M1353.4 330.5v6M1371.0 333.5h6M1374.0 330.5v6M1391.7 333.5h6M1394.7 330.5v6M1412.3 333.5h6M1415.3 330.5v6M1433.0 333.5h6M1436.0 330.5v6M1453.7 333.5h6M1456.7 330.5v6M1474.3 333.5h6M1477.3 330.5v6M1495.0 333.5h6M1498.0 330.5v6M1515.6 333.5h6M1518.6 330.5v6M1536.3 333.5h6M1539.3 330.5v6M1556.9 333.5h6M1559.9 330.5v6M1577.6 333.5h6M1580.6 330.5v6M1598.2 333.5h6M1601.2 330.5v6M1618.9 333.5h6M1621.9 330.5v6M1639.6 333.5h6M1642.6 330.5v6M1660.2 333.5h6M1663.2 330.5v6M1680.9 333.5h6M1683.9 330.5v6M1701.5 333.5h6M1704.5 330.5v6M1722.2 333.5h6M1725.2 330.5v6M1742.8 333.5h6M1745.8 330.5v6M1763.5 333.5h6M1766.5 330.5v6M1784.1 333.5h6M1787.1 330.5v6M1804.8 333.5h6M1807.8 330.5v6M1825.5 333.5h6M1828.5 330.5v6M1846.1 333.5h6M1849.1 330.5v6M1866.8 333.5h6M1869.8 330.5v6M1887.4 333.5h6M1890.4 330.5v6M1908.1 333.5h6M1911.1 330.5v6M379.6 354.2h6M382.6 351.2v6M400.3 354.2h6M403.3 351.2v6M420.9 354.2h6M423.9 351.2v6M441.6 354.2h6M444.6 351.2v6M462.2 354.2h6M465.2 351.2v6M482.9 354.2h6M485.9 351.2v6M503.5 354.2h6M506.5 351.2v6M524.2 354.2h6M527.2 351.2v6M544.8 354.2h6M547.8 351.2v6M565.5 354.2h6M568.5 351.2v6M586.2 354.2h6M589.2 351.2v6M606.8 354.2h6M609.8 351.2v6M627.5 354.2h6M630.5 351.2v6M648.1 354.2h6M651.1 351.2v6M668.8 354.2h6M671.8 351.2v6M689.4 354.2h6M692.4 351.2v6M710.1 354.2h6M713.1 351.2v6M730.7 354.2h6M733.7 351.2v6M751.4 354.2h6M754.4 351.2v6M772.0 354.2h6M775.0 351.2v6M792.7 354.2h6M795.7 351.2v6M813.4 354.2h6M816.4 351.2v6M834.0 354.2h6M837.0 351.2v6M854.7 354.2h6M857.7 351.2v6M875.3 354.2h6M878.3 351.2v6M896.0 354.2h6M899.0 351.2v6M916.6 354.2h6M919.6 351.2v6M937.3 354.2h6M940.3 351.2v6M957.9 354.2h6M960.9 351.2v6M978.6 354.2h6M981.6 351.2v6M999.3 354.2h6M1002.3 351.2v6M1019.9 354.2h6M1022.9 351.2v6M1040.6 354.2h6M1043.6 351.2v6M1061.2 354.2h6M1064.2 351.2v6M1081.9 354.2h6M1084.9 351.2v6M1102.5 354.2h6M1105.5 351.2v6M1123.2 354.2h6M1126.2 351.2v6M1143.8 354.2h6M1146.8 351.2v6M1164.5 354.2h6M1167.5 351.2v6M1185.1 354.2h6M1188.1 351.2v6M1205.8 354.2h6M1208.8 351.2v6M1226.5 354.2h6M1229.5 351.2v6M1247.1 354.2h6M1250.1 351.2v6M1267.8 354.2h6M1270.8 351.2v6M1288.4 354.2h6M1291.4 351.2v6M1309.1 354.2h6M1312.1 351.2v6M1329.7 354.2h6M1332.7 351.2v6M1350.4 354.2h6M1353.4 351.2v6M1371.0 354.2h6M1374.0 351.2v6M1391.7 354.2h6M1394.7 351.2v6M1412.3 354.2h6M1415.3 351.2v6M1433.0 354.2h6M1436.0 351.2v6M1453.7 354.2h6M1456.7 351.2v6M1474.3 354.2h6M1477.3 351.2v6M1495.0 354.2h6M1498.0 351.2v6M1515.6 354.2h6M1518.6 351.2v6M1536.3 354.2h6M1539.3 351.2v6M1556.9 354.2h6M1559.9 351.2v6M1577.6 354.2h6M1580.6 351.2v6M1598.2 354.2h6M1601.2 351.2v6M1618.9 354.2h6M1621.9 351.2v6M1639.6 354.2h6M1642.6 351.2v6M1660.2 354.2h6M1663.2 351.2v6M1680.9 354.2h6M1683.9 351.2v6M1701.5 354.2h6M1704.5 351.2v6M1722.2 354.2h6M1725.2 351.2v6M1742.8 354.2h6M1745.8 351.2v6M1763.5 354.2h6M1766.5 351.2v6M1784.1 354.2h6M1787.1 351.2v6M1804.8 354.2h6M1807.8 351.2v6M1825.5 354.2h6M1828.5 351.2v6M1846.1 354.2h6M1849.1 351.2v6M1866.8 354.2h6M1869.8 351.2v6M1887.4 354.2h6M1890.4 351.2v6M1908.1 354.2h6M1911.1 351.2v6M379.6 374.8h6M382.6 371.8v6M400.3 374.8h6M403.3 371.8v6M420.9 374.8h6M423.9 371.8v6M441.6 374.8h6M444.6 371.8v6M462.2 374.8h6M465.2 371.8v6M482.9 374.8h6M485.9 371.8v6M503.5 374.8h6M506.5 371.8v6M524.2 374.8h6M527.2 371.8v6M544.8 374.8h6M547.8 371.8v6M565.5 374.8h6M568.5 371.8v6M586.2 374.8h6M589.2 371.8v6M606.8 374.8h6M609.8 371.8v6M627.5 374.8h6M630.5 371.8v6M648.1 374.8h6M651.1 371.8v6M668.8 374.8h6M671.8 371.8v6M689.4 374.8h6M692.4 371.8v6M710.1 374.8h6M713.1 371.8v6M730.7 374.8h6M733.7 371.8v6M751.4 374.8h6M754.4 371.8v6M772.0 374.8h6M775.0 371.8v6M792.7 374.8h6M795.7 371.8v6M813.4 374.8h6M816.4 371.8v6M834.0 374.8h6M837.0 371.8v6M854.7 374.8h6M857.7 371.8v6M875.3 374.8h6M878.3 371.8v6M896.0 374.8h6M899.0 371.8v6M916.6 374.8h6M919.6 371.8v6M937.3 374.8h6M940.3 371.8v6M957.9 374.8h6M960.9 371.8v6M978.6 374.8h6M981.6 371.8v6M999.3 374.8h6M1002.3 371.8v6M1019.9 374.8h6M1022.9 371.8v6M1040.6 374.8h6M1043.6 371.8v6M1061.2 374.8h6M1064.2 371.8v6M1081.9 374.8h6M1084.9 371.8v6M1102.5 374.8h6M1105.5 371.8v6M1123.2 374.8h6M1126.2 371.8v6M1143.8 374.8h6M1146.8 371.8v6M1164.5 374.8h6M1167.5 371.8v6M1185.1 374.8h6M1188.1 371.8v6M1205.8 374.8h6M1208.8 371.8v6M1226.5 374.8h6M1229.5 371.8v6M1247.1 374.8h6M1250.1 371.8v6M1267.8 374.8h6M1270.8 371.8v6M1288.4 374.8h6M1291.4 371.8v6M1309.1 374.8h6M1312.1 371.8v6M1329.7 374.8h6M1332.7 371.8v6M1350.4 374.8h6M1353.4 371.8v6M1371.0 374.8h6M1374.0 371.8v6M1391.7 374.8h6M1394.7 371.8v6M1412.3 374.8h6M1415.3 371.8v6M1433.0 374.8h6M1436.0 371.8v6M1453.7 374.8h6M1456.7 371.8v6M1474.3 374.8h6M1477.3 371.8v6M1495.0 374.8h6M1498.0 371.8v6M1515.6 374.8h6M1518.6 371.8v6M1536.3 374.8h6M1539.3 371.8v6M1556.9 374.8h6M1559.9 371.8v6M1577.6 374.8h6M1580.6 371.8v6M1598.2 374.8h6M1601.2 371.8v6M1618.9 374.8h6M1621.9 371.8v6M1639.6 374.8h6M1642.6 371.8v6M1660.2 374.8h6M1663.2 371.8v6M1680.9 374.8h6M1683.9 371.8v6M1701.5 374.8h6M1704.5 371.8v6M1722.2 374.8h6M1725.2 371.8v6M1742.8 374.8h6M1745.8 371.8v6M1763.5 374.8h6M1766.5 371.8v6M1784.1 374.8h6M1787.1 371.8v6M1804.8 374.8h6M1807.8 371.8v6M1825.5 374.8h6M1828.5 371.8v6M1846.1 374.8h6M1849.1 371.8v6M1866.8 374.8h6M1869.8 371.8v6M1887.4 374.8h6M1890.4 371.8v6M1908.1 374.8h6M1911.1 371.8v6M379.6 395.5h6M382.6 392.5v6M400.3 395.5h6M403.3 392.5v6M420.9 395.5h6M423.9 392.5v6M441.6 395.5h6M444.6 392.5v6M462.2 395.5h6M465.2 392.5v6M482.9 395.5h6M485.9 392.5v6M503.5 395.5h6M506.5 392.5v6M524.2 395.5h6M527.2 392.5v6M544.8 395.5h6M547.8 392.5v6M565.5 395.5h6M568.5 392.5v6M586.2 395.5h6M589.2 392.5v6M606.8 395.5h6M609.8 392.5v6M627.5 395.5h6M630.5 392.5v6M648.1 395.5h6M651.1 392.5v6M668.8 395.5h6M671.8 392.5v6M689.4 395.5h6M692.4 392.5v6M710.1 395.5h6M713.1 392.5v6M730.7 395.5h6M733.7 392.5v6M751.4 395.5h6M754.4 392.5v6M772.0 395.5h6M775.0 392.5v6M792.7 395.5h6M795.7 392.5v6M813.4 395.5h6M816.4 392.5v6M834.0 395.5h6M837.0 392.5v6M854.7 395.5h6M857.7 392.5v6M875.3 395.5h6M878.3 392.5v6M896.0 395.5h6M899.0 392.5v6M916.6 395.5h6M919.6 392.5v6M937.3 395.5h6M940.3 392.5v6M957.9 395.5h6M960.9 392.5v6M978.6 395.5h6M981.6 392.5v6M999.3 395.5h6M1002.3 392.5v6M1019.9 395.5h6M1022.9 392.5v6M1040.6 395.5h6M1043.6 392.5v6M1061.2 395.5h6M1064.2 392.5v6M1081.9 395.5h6M1084.9 392.5v6M1102.5 395.5h6M1105.5 392.5v6M1123.2 395.5h6M1126.2 392.5v6M1143.8 395.5h6M1146.8 392.5v6M1164.5 395.5h6M1167.5 392.5v6M1185.1 395.5h6M1188.1 392.5v6M1205.8 395.5h6M1208.8 392.5v6M1226.5 395.5h6M1229.5 392.5v6M1247.1 395.5h6M1250.1 392.5v6M1267.8 395.5h6M1270.8 392.5v6M1288.4 395.5h6M1291.4 392.5v6M1309.1 395.5h6M1312.1 392.5v6M1329.7 395.5h6M1332.7 392.5v6M1350.4 395.5h6M1353.4 392.5v6M1371.0 395.5h6M1374.0 392.5v6M1391.7 395.5h6M1394.7 392.5v6M1412.3 395.5h6M1415.3 392.5v6M1433.0 395.5h6M1436.0 392.5v6M1453.7 395.5h6M1456.7 392.5v6M1474.3 395.5h6M1477.3 392.5v6M1495.0 395.5h6M1498.0 392.5v6M1515.6 395.5h6M1518.6 392.5v6M1536.3 395.5h6M1539.3 392.5v6M1556.9 395.5h6M1559.9 392.5v6M1577.6 395.5h6M1580.6 392.5v6M1598.2 395.5h6M1601.2 392.5v6M1618.9 395.5h6M1621.9 392.5v6M1639.6 395.5h6M1642.6 392.5v6M1660.2 395.5h6M1663.2 392.5v6M1680.9 395.5h6M1683.9 392.5v6M1701.5 395.5h6M1704.5 392.5v6M1722.2 395.5h6M1725.2 392.5v6M1742.8 395.5h6M1745.8 392.5v6M1763.5 395.5h6M1766.5 392.5v6M1784.1 395.5h6M1787.1 392.5v6M1804.8 395.5h6M1807.8 392.5v6M1825.5 395.5h6M1828.5 392.5v6M1846.1 395.5h6M1849.1 392.5v6M1866.8 395.5h6M1869.8 392.5v6M1887.4 395.5h6M1890.4 392.5v6M1908.1 395.5h6M1911.1 392.5v6M379.6 416.1h6M382.6 413.1v6M400.3 416.1h6M403.3 413.1v6M420.9 416.1h6M423.9 413.1v6M441.6 416.1h6M444.6 413.1v6M462.2 416.1h6M465.2 413.1v6M482.9 416.1h6M485.9 413.1v6M503.5 416.1h6M506.5 413.1v6M524.2 416.1h6M527.2 413.1v6M544.8 416.1h6M547.8 413.1v6M565.5 416.1h6M568.5 413.1v6M586.2 416.1h6M589.2 413.1v6M606.8 416.1h6M609.8 413.1v6M627.5 416.1h6M630.5 413.1v6M648.1 416.1h6M651.1 413.1v6M668.8 416.1h6M671.8 413.1v6M689.4 416.1h6M692.4 413.1v6M710.1 416.1h6M713.1 413.1v6M730.7 416.1h6M733.7 413.1v6M751.4 416.1h6M754.4 413.1v6M772.0 416.1h6M775.0 413.1v6M792.7 416.1h6M795.7 413.1v6M813.4 416.1h6M816.4 413.1v6M834.0 416.1h6M837.0 413.1v6M854.7 416.1h6M857.7 413.1v6M875.3 416.1h6M878.3 413.1v6M896.0 416.1h6M899.0 413.1v6M916.6 416.1h6M919.6 413.1v6M937.3 416.1h6M940.3 413.1v6M957.9 416.1h6M960.9 413.1v6M978.6 416.1h6M981.6 413.1v6M999.3 416.1h6M1002.3 413.1v6M1019.9 416.1h6M1022.9 413.1v6M1040.6 416.1h6M1043.6 413.1v6M1061.2 416.1h6M1064.2 413.1v6M1081.9 416.1h6M1084.9 413.1v6M1102.5 416.1h6M1105.5 413.1v6M1123.2 416.1h6M1126.2 413.1v6M1143.8 416.1h6M1146.8 413.1v6M1164.5 416.1h6M1167.5 413.1v6M1185.1 416.1h6M1188.1 413.1v6M1205.8 416.1h6M1208.8 413.1v6M1226.5 416.1h6M1229.5 413.1v6M1247.1 416.1h6M1250.1 413.1v6M1267.8 416.1h6M1270.8 413.1v6M1288.4 416.1h6M1291.4 413.1v6M1309.1 416.1h6M1312.1 413.1v6M1329.7 416.1h6M1332.7 413.1v6M1350.4 416.1h6M1353.4 413.1v6M1371.0 416.1h6M1374.0 413.1v6M1391.7 416.1h6M1394.7 413.1v6M1412.3 416.1h6M1415.3 413.1v6M1433.0 416.1h6M1436.0 413.1v6M1453.7 416.1h6M1456.7 413.1v6M1474.3 416.1h6M1477.3 413.1v6M1495.0 416.1h6M1498.0 413.1v6M1515.6 416.1h6M1518.6 413.1v6M1536.3 416.1h6M1539.3 413.1v6M1556.9 416.1h6M1559.9 413.1v6M1577.6 416.1h6M1580.6 413.1v6M1598.2 416.1h6M1601.2 413.1v6M1618.9 416.1h6M1621.9 413.1v6M1639.6 416.1h6M1642.6 413.1v6M1660.2 416.1h6M1663.2 413.1v6M1680.9 416.1h6M1683.9 413.1v6M1701.5 416.1h6M1704.5 413.1v6M1722.2 416.1h6M1725.2 413.1v6M1742.8 416.1h6M1745.8 413.1v6M1763.5 416.1h6M1766.5 413.1v6M1784.1 416.1h6M1787.1 413.1v6M1804.8 416.1h6M1807.8 413.1v6M1825.5 416.1h6M1828.5 413.1v6M1846.1 416.1h6M1849.1 413.1v6M1866.8 416.1h6M1869.8 413.1v6M1887.4 416.1h6M1890.4 413.1v6M1908.1 416.1h6M1911.1 413.1v6M379.6 436.8h6M382.6 433.8v6M400.3 436.8h6M403.3 433.8v6M420.9 436.8h6M423.9 433.8v6M441.6 436.8h6M444.6 433.8v6M462.2 436.8h6M465.2 433.8v6M482.9 436.8h6M485.9 433.8v6M503.5 436.8h6M506.5 433.8v6M524.2 436.8h6M527.2 433.8v6M544.8 436.8h6M547.8 433.8v6M565.5 436.8h6M568.5 433.8v6M586.2 436.8h6M589.2 433.8v6M606.8 436.8h6M609.8 433.8v6M627.5 436.8h6M630.5 433.8v6M648.1 436.8h6M651.1 433.8v6M668.8 436.8h6M671.8 433.8v6M689.4 436.8h6M692.4 433.8v6M710.1 436.8h6M713.1 433.8v6M730.7 436.8h6M733.7 433.8v6M751.4 436.8h6M754.4 433.8v6M772.0 436.8h6M775.0 433.8v6M792.7 436.8h6M795.7 433.8v6M813.4 436.8h6M816.4 433.8v6M834.0 436.8h6M837.0 433.8v6M854.7 436.8h6M857.7 433.8v6M875.3 436.8h6M878.3 433.8v6M896.0 436.8h6M899.0 433.8v6M916.6 436.8h6M919.6 433.8v6M937.3 436.8h6M940.3 433.8v6M957.9 436.8h6M960.9 433.8v6M978.6 436.8h6M981.6 433.8v6M999.3 436.8h6M1002.3 433.8v6M1019.9 436.8h6M1022.9 433.8v6M1040.6 436.8h6M1043.6 433.8v6M1061.2 436.8h6M1064.2 433.8v6M1081.9 436.8h6M1084.9 433.8v6M1102.5 436.8h6M1105.5 433.8v6M1123.2 436.8h6M1126.2 433.8v6M1143.8 436.8h6M1146.8 433.8v6M1164.5 436.8h6M1167.5 433.8v6M1185.1 436.8h6M1188.1 433.8v6M1205.8 436.8h6M1208.8 433.8v6M1226.5 436.8h6M1229.5 433.8v6M1247.1 436.8h6M1250.1 433.8v6M1267.8 436.8h6M1270.8 433.8v6M1288.4 436.8h6M1291.4 433.8v6M1309.1 436.8h6M1312.1 433.8v6M1329.7 436.8h6M1332.7 433.8v6M1350.4 436.8h6M1353.4 433.8v6M1371.0 436.8h6M1374.0 433.8v6M1391.7 436.8h6M1394.7 433.8v6M1412.3 436.8h6M1415.3 433.8v6M1433.0 436.8h6M1436.0 433.8v6M1453.7 436.8h6M1456.7 433.8v6M1474.3 436.8h6M1477.3 433.8v6M1495.0 436.8h6M1498.0 433.8v6M1515.6 436.8h6M1518.6 433.8v6M1536.3 436.8h6M1539.3 433.8v6M1556.9 436.8h6M1559.9 433.8v6M1577.6 436.8h6M1580.6 433.8v6M1598.2 436.8h6M1601.2 433.8v6M1618.9 436.8h6M1621.9 433.8v6M1639.6 436.8h6M1642.6 433.8v6M1660.2 436.8h6M1663.2 433.8v6M1680.9 436.8h6M1683.9 433.8v6M1701.5 436.8h6M1704.5 433.8v6M1722.2 436.8h6M1725.2 433.8v6M1742.8 436.8h6M1745.8 433.8v6M1763.5 436.8h6M1766.5 433.8v6M1784.1 436.8h6M1787.1 433.8v6M1804.8 436.8h6M1807.8 433.8v6M1825.5 436.8h6M1828.5 433.8v6M1846.1 436.8h6M1849.1 433.8v6M1866.8 436.8h6M1869.8 433.8v6M1887.4 436.8h6M1890.4 433.8v6M1908.1 436.8h6M1911.1 433.8v6M379.6 457.5h6M382.6 454.5v6M400.3 457.5h6M403.3 454.5v6M420.9 457.5h6M423.9 454.5v6M441.6 457.5h6M444.6 454.5v6M462.2 457.5h6M465.2 454.5v6M482.9 457.5h6M485.9 454.5v6M503.5 457.5h6M506.5 454.5v6M524.2 457.5h6M527.2 454.5v6M544.8 457.5h6M547.8 454.5v6M565.5 457.5h6M568.5 454.5v6M586.2 457.5h6M589.2 454.5v6M606.8 457.5h6M609.8 454.5v6M627.5 457.5h6M630.5 454.5v6M648.1 457.5h6M651.1 454.5v6M668.8 457.5h6M671.8 454.5v6M689.4 457.5h6M692.4 454.5v6M710.1 457.5h6M713.1 454.5v6M730.7 457.5h6M733.7 454.5v6M751.4 457.5h6M754.4 454.5v6M772.0 457.5h6M775.0 454.5v6M792.7 457.5h6M795.7 454.5v6M813.4 457.5h6M816.4 454.5v6M834.0 457.5h6M837.0 454.5v6M854.7 457.5h6M857.7 454.5v6M875.3 457.5h6M878.3 454.5v6M896.0 457.5h6M899.0 454.5v6M916.6 457.5h6M919.6 454.5v6M937.3 457.5h6M940.3 454.5v6M957.9 457.5h6M960.9 454.5v6M978.6 457.5h6M981.6 454.5v6M999.3 457.5h6M1002.3 454.5v6M1019.9 457.5h6M1022.9 454.5v6M1040.6 457.5h6M1043.6 454.5v6M1061.2 457.5h6M1064.2 454.5v6M1081.9 457.5h6M1084.9 454.5v6M1102.5 457.5h6M1105.5 454.5v6M1123.2 457.5h6M1126.2 454.5v6M1143.8 457.5h6M1146.8 454.5v6M1164.5 457.5h6M1167.5 454.5v6M1185.1 457.5h6M1188.1 454.5v6M1205.8 457.5h6M1208.8 454.5v6M1226.5 457.5h6M1229.5 454.5v6M1247.1 457.5h6M1250.1 454.5v6M1267.8 457.5h6M1270.8 454.5v6M1288.4 457.5h6M1291.4 454.5v6M1309.1 457.5h6M1312.1 454.5v6M1329.7 457.5h6M1332.7 454.5v6M1350.4 457.5h6M1353.4 454.5v6M1371.0 457.5h6M1374.0 454.5v6M1391.7 457.5h6M1394.7 454.5v6M1412.3 457.5h6M1415.3 454.5v6M1433.0 457.5h6M1436.0 454.5v6M1453.7 457.5h6M1456.7 454.5v6M1474.3 457.5h6M1477.3 454.5v6M1495.0 457.5h6M1498.0 454.5v6M1515.6 457.5h6M1518.6 454.5v6M1536.3 457.5h6M1539.3 454.5v6M1556.9 457.5h6M1559.9 454.5v6M1577.6 457.5h6M1580.6 454.5v6M1598.2 457.5h6M1601.2 454.5v6M1618.9 457.5h6M1621.9 454.5v6M1639.6 457.5h6M1642.6 454.5v6M1660.2 457.5h6M1663.2 454.5v6M1680.9 457.5h6M1683.9 454.5v6M1701.5 457.5h6M1704.5 454.5v6M1722.2 457.5h6M1725.2 454.5v6M1742.8 457.5h6M1745.8 454.5v6M1763.5 457.5h6M1766.5 454.5v6M1784.1 457.5h6M1787.1 454.5v6M1804.8 457.5h6M1807.8 454.5v6M1825.5 457.5h6M1828.5 454.5v6M1846.1 457.5h6M1849.1 454.5v6M1866.8 457.5h6M1869.8 454.5v6M1887.4 457.5h6M1890.4 454.5v6M1908.1 457.5h6M1911.1 454.5v6M379.6 478.1h6M382.6 475.1v6M400.3 478.1h6M403.3 475.1v6M420.9 478.1h6M423.9 475.1v6M441.6 478.1h6M444.6 475.1v6M462.2 478.1h6M465.2 475.1v6M482.9 478.1h6M485.9 475.1v6M503.5 478.1h6M506.5 475.1v6M524.2 478.1h6M527.2 475.1v6M544.8 478.1h6M547.8 475.1v6M565.5 478.1h6M568.5 475.1v6M586.2 478.1h6M589.2 475.1v6M606.8 478.1h6M609.8 475.1v6M627.5 478.1h6M630.5 475.1v6M648.1 478.1h6M651.1 475.1v6M668.8 478.1h6M671.8 475.1v6M689.4 478.1h6M692.4 475.1v6M710.1 478.1h6M713.1 475.1v6M730.7 478.1h6M733.7 475.1v6M751.4 478.1h6M754.4 475.1v6M772.0 478.1h6M775.0 475.1v6M792.7 478.1h6M795.7 475.1v6M813.4 478.1h6M816.4 475.1v6M834.0 478.1h6M837.0 475.1v6M854.7 478.1h6M857.7 475.1v6M875.3 478.1h6M878.3 475.1v6M896.0 478.1h6M899.0 475.1v6M916.6 478.1h6M919.6 475.1v6M937.3 478.1h6M940.3 475.1v6M957.9 478.1h6M960.9 475.1v6M978.6 478.1h6M981.6 475.1v6M999.3 478.1h6M1002.3 475.1v6M1019.9 478.1h6M1022.9 475.1v6M1040.6 478.1h6M1043.6 475.1v6M1061.2 478.1h6M1064.2 475.1v6M1081.9 478.1h6M1084.9 475.1v6M1102.5 478.1h6M1105.5 475.1v6M1123.2 478.1h6M1126.2 475.1v6M1143.8 478.1h6M1146.8 475.1v6M1164.5 478.1h6M1167.5 475.1v6M1185.1 478.1h6M1188.1 475.1v6M1205.8 478.1h6M1208.8 475.1v6M1226.5 478.1h6M1229.5 475.1v6M1247.1 478.1h6M1250.1 475.1v6M1267.8 478.1h6M1270.8 475.1v6M1288.4 478.1h6M1291.4 475.1v6M1309.1 478.1h6M1312.1 475.1v6M1329.7 478.1h6M1332.7 475.1v6M1350.4 478.1h6M1353.4 475.1v6M1371.0 478.1h6M1374.0 475.1v6M1391.7 478.1h6M1394.7 475.1v6M1412.3 478.1h6M1415.3 475.1v6M1433.0 478.1h6M1436.0 475.1v6M1453.7 478.1h6M1456.7 475.1v6M1474.3 478.1h6M1477.3 475.1v6M1495.0 478.1h6M1498.0 475.1v6M1515.6 478.1h6M1518.6 475.1v6M1536.3 478.1h6M1539.3 475.1v6M1556.9 478.1h6M1559.9 475.1v6M1577.6 478.1h6M1580.6 475.1v6M1598.2 478.1h6M1601.2 475.1v6M1618.9 478.1h6M1621.9 475.1v6M1639.6 478.1h6M1642.6 475.1v6M1660.2 478.1h6M1663.2 475.1v6M1680.9 478.1h6M1683.9 475.1v6M1701.5 478.1h6M1704.5 475.1v6M1722.2 478.1h6M1725.2 475.1v6M1742.8 478.1h6M1745.8 475.1v6M1763.5 478.1h6M1766.5 475.1v6M1784.1 478.1h6M1787.1 475.1v6M1804.8 478.1h6M1807.8 475.1v6M1825.5 478.1h6M1828.5 475.1v6M1846.1 478.1h6M1849.1 475.1v6M1866.8 478.1h6M1869.8 475.1v6M1887.4 478.1h6M1890.4 475.1v6M1908.1 478.1h6M1911.1 475.1v6M379.6 498.8h6M382.6 495.8v6M400.3 498.8h6M403.3 495.8v6M420.9 498.8h6M423.9 495.8v6M441.6 498.8h6M444.6 495.8v6M462.2 498.8h6M465.2 495.8v6M482.9 498.8h6M485.9 495.8v6M503.5 498.8h6M506.5 495.8v6M524.2 498.8h6M527.2 495.8v6M544.8 498.8h6M547.8 495.8v6M565.5 498.8h6M568.5 495.8v6M586.2 498.8h6M589.2 495.8v6M606.8 498.8h6M609.8 495.8v6M627.5 498.8h6M630.5 495.8v6M648.1 498.8h6M651.1 495.8v6M668.8 498.8h6M671.8 495.8v6M689.4 498.8h6M692.4 495.8v6M710.1 498.8h6M713.1 495.8v6M730.7 498.8h6M733.7 495.8v6M751.4 498.8h6M754.4 495.8v6M772.0 498.8h6M775.0 495.8v6M792.7 498.8h6M795.7 495.8v6M813.4 498.8h6M816.4 495.8v6M834.0 498.8h6M837.0 495.8v6M854.7 498.8h6M857.7 495.8v6M875.3 498.8h6M878.3 495.8v6M896.0 498.8h6M899.0 495.8v6M916.6 498.8h6M919.6 495.8v6M937.3 498.8h6M940.3 495.8v6M957.9 498.8h6M960.9 495.8v6M978.6 498.8h6M981.6 495.8v6M999.3 498.8h6M1002.3 495.8v6M1019.9 498.8h6M1022.9 495.8v6M1040.6 498.8h6M1043.6 495.8v6M1061.2 498.8h6M1064.2 495.8v6M1081.9 498.8h6M1084.9 495.8v6M1102.5 498.8h6M1105.5 495.8v6M1123.2 498.8h6M1126.2 495.8v6M1143.8 498.8h6M1146.8 495.8v6M1164.5 498.8h6M1167.5 495.8v6M1185.1 498.8h6M1188.1 495.8v6M1205.8 498.8h6M1208.8 495.8v6M1226.5 498.8h6M1229.5 495.8v6M1247.1 498.8h6M1250.1 495.8v6M1267.8 498.8h6M1270.8 495.8v6M1288.4 498.8h6M1291.4 495.8v6M1309.1 498.8h6M1312.1 495.8v6M1329.7 498.8h6M1332.7 495.8v6M1350.4 498.8h6M1353.4 495.8v6M1371.0 498.8h6M1374.0 495.8v6M1391.7 498.8h6M1394.7 495.8v6M1412.3 498.8h6M1415.3 495.8v6M1433.0 498.8h6M1436.0 495.8v6M1453.7 498.8h6M1456.7 495.8v6M1474.3 498.8h6M1477.3 495.8v6M1495.0 498.8h6M1498.0 495.8v6M1515.6 498.8h6M1518.6 495.8v6M1536.3 498.8h6M1539.3 495.8v6M1556.9 498.8h6M1559.9 495.8v6M1577.6 498.8h6M1580.6 495.8v6M1598.2 498.8h6M1601.2 495.8v6M1618.9 498.8h6M1621.9 495.8v6M1639.6 498.8h6M1642.6 495.8v6M1660.2 498.8h6M1663.2 495.8v6M1680.9 498.8h6M1683.9 495.8v6M1701.5 498.8h6M1704.5 495.8v6M1722.2 498.8h6M1725.2 495.8v6M1742.8 498.8h6M1745.8 495.8v6M1763.5 498.8h6M1766.5 495.8v6M1784.1 498.8h6M1787.1 495.8v6M1804.8 498.8h6M1807.8 495.8v6M1825.5 498.8h6M1828.5 495.8v6M1846.1 498.8h6M1849.1 495.8v6M1866.8 498.8h6M1869.8 495.8v6M1887.4 498.8h6M1890.4 495.8v6M1908.1 498.8h6M1911.1 495.8v6M379.6 519.4h6M382.6 516.4v6M400.3 519.4h6M403.3 516.4v6M420.9 519.4h6M423.9 516.4v6M441.6 519.4h6M444.6 516.4v6M462.2 519.4h6M465.2 516.4v6M482.9 519.4h6M485.9 516.4v6M503.5 519.4h6M506.5 516.4v6M524.2 519.4h6M527.2 516.4v6M544.8 519.4h6M547.8 516.4v6M565.5 519.4h6M568.5 516.4v6M586.2 519.4h6M589.2 516.4v6M606.8 519.4h6M609.8 516.4v6M627.5 519.4h6M630.5 516.4v6M648.1 519.4h6M651.1 516.4v6M668.8 519.4h6M671.8 516.4v6M689.4 519.4h6M692.4 516.4v6M710.1 519.4h6M713.1 516.4v6M730.7 519.4h6M733.7 516.4v6M751.4 519.4h6M754.4 516.4v6M772.0 519.4h6M775.0 516.4v6M792.7 519.4h6M795.7 516.4v6M813.4 519.4h6M816.4 516.4v6M834.0 519.4h6M837.0 516.4v6M854.7 519.4h6M857.7 516.4v6M875.3 519.4h6M878.3 516.4v6M896.0 519.4h6M899.0 516.4v6M916.6 519.4h6M919.6 516.4v6M937.3 519.4h6M940.3 516.4v6M957.9 519.4h6M960.9 516.4v6M978.6 519.4h6M981.6 516.4v6M999.3 519.4h6M1002.3 516.4v6M1019.9 519.4h6M1022.9 516.4v6M1040.6 519.4h6M1043.6 516.4v6M1061.2 519.4h6M1064.2 516.4v6M1081.9 519.4h6M1084.9 516.4v6M1102.5 519.4h6M1105.5 516.4v6M1123.2 519.4h6M1126.2 516.4v6M1143.8 519.4h6M1146.8 516.4v6M1164.5 519.4h6M1167.5 516.4v6M1185.1 519.4h6M1188.1 516.4v6M1205.8 519.4h6M1208.8 516.4v6M1226.5 519.4h6M1229.5 516.4v6M1247.1 519.4h6M1250.1 516.4v6M1267.8 519.4h6M1270.8 516.4v6M1288.4 519.4h6M1291.4 516.4v6M1309.1 519.4h6M1312.1 516.4v6M1329.7 519.4h6M1332.7 516.4v6M1350.4 519.4h6M1353.4 516.4v6M1371.0 519.4h6M1374.0 516.4v6M1391.7 519.4h6M1394.7 516.4v6M1412.3 519.4h6M1415.3 516.4v6M1433.0 519.4h6M1436.0 516.4v6M1453.7 519.4h6M1456.7 516.4v6M1474.3 519.4h6M1477.3 516.4v6M1495.0 519.4h6M1498.0 516.4v6M1515.6 519.4h6M1518.6 516.4v6M1536.3 519.4h6M1539.3 516.4v6M1556.9 519.4h6M1559.9 516.4v6M1577.6 519.4h6M1580.6 516.4v6M1598.2 519.4h6M1601.2 516.4v6M1618.9 519.4h6M1621.9 516.4v6M1639.6 519.4h6M1642.6 516.4v6M1660.2 519.4h6M1663.2 516.4v6M1680.9 519.4h6M1683.9 516.4v6M1701.5 519.4h6M1704.5 516.4v6M1722.2 519.4h6M1725.2 516.4v6M1742.8 519.4h6M1745.8 516.4v6M1763.5 519.4h6M1766.5 516.4v6M1784.1 519.4h6M1787.1 516.4v6M1804.8 519.4h6M1807.8 516.4v6M1825.5 519.4h6M1828.5 516.4v6M1846.1 519.4h6M1849.1 516.4v6M1866.8 519.4h6M1869.8 516.4v6M1887.4 519.4h6M1890.4 516.4v6M1908.1 519.4h6M1911.1 516.4v6M379.6 540.1h6M382.6 537.1v6M400.3 540.1h6M403.3 537.1v6M420.9 540.1h6M423.9 537.1v6M441.6 540.1h6M444.6 537.1v6M462.2 540.1h6M465.2 537.1v6M482.9 540.1h6M485.9 537.1v6M503.5 540.1h6M506.5 537.1v6M524.2 540.1h6M527.2 537.1v6M544.8 540.1h6M547.8 537.1v6M565.5 540.1h6M568.5 537.1v6M586.2 540.1h6M589.2 537.1v6M606.8 540.1h6M609.8 537.1v6M627.5 540.1h6M630.5 537.1v6M648.1 540.1h6M651.1 537.1v6M668.8 540.1h6M671.8 537.1v6M689.4 540.1h6M692.4 537.1v6M710.1 540.1h6M713.1 537.1v6M730.7 540.1h6M733.7 537.1v6M751.4 540.1h6M754.4 537.1v6M772.0 540.1h6M775.0 537.1v6M792.7 540.1h6M795.7 537.1v6M813.4 540.1h6M816.4 537.1v6M834.0 540.1h6M837.0 537.1v6M854.7 540.1h6M857.7 537.1v6M875.3 540.1h6M878.3 537.1v6M896.0 540.1h6M899.0 537.1v6M916.6 540.1h6M919.6 537.1v6M937.3 540.1h6M940.3 537.1v6M957.9 540.1h6M960.9 537.1v6M978.6 540.1h6M981.6 537.1v6M999.3 540.1h6M1002.3 537.1v6M1019.9 540.1h6M1022.9 537.1v6M1040.6 540.1h6M1043.6 537.1v6M1061.2 540.1h6M1064.2 537.1v6M1081.9 540.1h6M1084.9 537.1v6M1102.5 540.1h6M1105.5 537.1v6M1123.2 540.1h6M1126.2 537.1v6M1143.8 540.1h6M1146.8 537.1v6M1164.5 540.1h6M1167.5 537.1v6M1185.1 540.1h6M1188.1 537.1v6M1205.8 540.1h6M1208.8 537.1v6M1226.5 540.1h6M1229.5 537.1v6M1247.1 540.1h6M1250.1 537.1v6M1267.8 540.1h6M1270.8 537.1v6M1288.4 540.1h6M1291.4 537.1v6M1309.1 540.1h6M1312.1 537.1v6M1329.7 540.1h6M1332.7 537.1v6M1350.4 540.1h6M1353.4 537.1v6M1371.0 540.1h6M1374.0 537.1v6M1391.7 540.1h6M1394.7 537.1v6M1412.3 540.1h6M1415.3 537.1v6M1433.0 540.1h6M1436.0 537.1v6M1453.7 540.1h6M1456.7 537.1v6M1474.3 540.1h6M1477.3 537.1v6M1495.0 540.1h6M1498.0 537.1v6M1515.6 540.1h6M1518.6 537.1v6M1536.3 540.1h6M1539.3 537.1v6M1556.9 540.1h6M1559.9 537.1v6M1577.6 540.1h6M1580.6 537.1v6M1598.2 540.1h6M1601.2 537.1v6M1618.9 540.1h6M1621.9 537.1v6M1639.6 540.1h6M1642.6 537.1v6M1660.2 540.1h6M1663.2 537.1v6M1680.9 540.1h6M1683.9 537.1v6M1701.5 540.1h6M1704.5 537.1v6M1722.2 540.1h6M1725.2 537.1v6M1742.8 540.1h6M1745.8 537.1v6M1763.5 540.1h6M1766.5 537.1v6M1784.1 540.1h6M1787.1 537.1v6M1804.8 540.1h6M1807.8 537.1v6M1825.5 540.1h6M1828.5 537.1v6M1846.1 540.1h6M1849.1 537.1v6M1866.8 540.1h6M1869.8 537.1v6M1887.4 540.1h6M1890.4 537.1v6M1908.1 540.1h6M1911.1 537.1v6M379.6 560.7h6M382.6 557.7v6M400.3 560.7h6M403.3 557.7v6M420.9 560.7h6M423.9 557.7v6M441.6 560.7h6M444.6 557.7v6M462.2 560.7h6M465.2 557.7v6M482.9 560.7h6M485.9 557.7v6M503.5 560.7h6M506.5 557.7v6M524.2 560.7h6M527.2 557.7v6M544.8 560.7h6M547.8 557.7v6M565.5 560.7h6M568.5 557.7v6M586.2 560.7h6M589.2 557.7v6M606.8 560.7h6M609.8 557.7v6M627.5 560.7h6M630.5 557.7v6M648.1 560.7h6M651.1 557.7v6M668.8 560.7h6M671.8 557.7v6M689.4 560.7h6M692.4 557.7v6M710.1 560.7h6M713.1 557.7v6M730.7 560.7h6M733.7 557.7v6M751.4 560.7h6M754.4 557.7v6M772.0 560.7h6M775.0 557.7v6M792.7 560.7h6M795.7 557.7v6M813.4 560.7h6M816.4 557.7v6M834.0 560.7h6M837.0 557.7v6M854.7 560.7h6M857.7 557.7v6M875.3 560.7h6M878.3 557.7v6M896.0 560.7h6M899.0 557.7v6M916.6 560.7h6M919.6 557.7v6M937.3 560.7h6M940.3 557.7v6M957.9 560.7h6M960.9 557.7v6M978.6 560.7h6M981.6 557.7v6M999.3 560.7h6M1002.3 557.7v6M1019.9 560.7h6M1022.9 557.7v6M1040.6 560.7h6M1043.6 557.7v6M1061.2 560.7h6M1064.2 557.7v6M1081.9 560.7h6M1084.9 557.7v6M1102.5 560.7h6M1105.5 557.7v6M1123.2 560.7h6M1126.2 557.7v6M1143.8 560.7h6M1146.8 557.7v6M1164.5 560.7h6M1167.5 557.7v6M1185.1 560.7h6M1188.1 557.7v6M1205.8 560.7h6M1208.8 557.7v6M1226.5 560.7h6M1229.5 557.7v6M1247.1 560.7h6M1250.1 557.7v6M1267.8 560.7h6M1270.8 557.7v6M1288.4 560.7h6M1291.4 557.7v6M1309.1 560.7h6M1312.1 557.7v6M1329.7 560.7h6M1332.7 557.7v6M1350.4 560.7h6M1353.4 557.7v6M1371.0 560.7h6M1374.0 557.7v6M1391.7 560.7h6M1394.7 557.7v6M1412.3 560.7h6M1415.3 557.7v6M1433.0 560.7h6M1436.0 557.7v6M1453.7 560.7h6M1456.7 557.7v6M1474.3 560.7h6M1477.3 557.7v6M1495.0 560.7h6M1498.0 557.7v6M1515.6 560.7h6M1518.6 557.7v6M1536.3 560.7h6M1539.3 557.7v6M1556.9 560.7h6M1559.9 557.7v6M1577.6 560.7h6M1580.6 557.7v6M1598.2 560.7h6M1601.2 557.7v6M1618.9 560.7h6M1621.9 557.7v6M1639.6 560.7h6M1642.6 557.7v6M1660.2 560.7h6M1663.2 557.7v6M1680.9 560.7h6M1683.9 557.7v6M1701.5 560.7h6M1704.5 557.7v6M1722.2 560.7h6M1725.2 557.7v6M1742.8 560.7h6M1745.8 557.7v6M1763.5 560.7h6M1766.5 557.7v6M1784.1 560.7h6M1787.1 557.7v6M1804.8 560.7h6M1807.8 557.7v6M1825.5 560.7h6M1828.5 557.7v6M1846.1 560.7h6M1849.1 557.7v6M1866.8 560.7h6M1869.8 557.7v6M1887.4 560.7h6M1890.4 557.7v6M1908.1 560.7h6M1911.1 557.7v6M379.6 581.4h6M382.6 578.4v6M400.3 581.4h6M403.3 578.4v6M420.9 581.4h6M423.9 578.4v6M441.6 581.4h6M444.6 578.4v6M462.2 581.4h6M465.2 578.4v6M482.9 581.4h6M485.9 578.4v6M503.5 581.4h6M506.5 578.4v6M524.2 581.4h6M527.2 578.4v6M544.8 581.4h6M547.8 578.4v6M565.5 581.4h6M568.5 578.4v6M586.2 581.4h6M589.2 578.4v6M606.8 581.4h6M609.8 578.4v6M627.5 581.4h6M630.5 578.4v6M648.1 581.4h6M651.1 578.4v6M668.8 581.4h6M671.8 578.4v6M689.4 581.4h6M692.4 578.4v6M710.1 581.4h6M713.1 578.4v6M730.7 581.4h6M733.7 578.4v6M751.4 581.4h6M754.4 578.4v6M772.0 581.4h6M775.0 578.4v6M792.7 581.4h6M795.7 578.4v6M813.4 581.4h6M816.4 578.4v6M834.0 581.4h6M837.0 578.4v6M854.7 581.4h6M857.7 578.4v6M875.3 581.4h6M878.3 578.4v6M896.0 581.4h6M899.0 578.4v6M916.6 581.4h6M919.6 578.4v6M937.3 581.4h6M940.3 578.4v6M957.9 581.4h6M960.9 578.4v6M978.6 581.4h6M981.6 578.4v6M999.3 581.4h6M1002.3 578.4v6M1019.9 581.4h6M1022.9 578.4v6M1040.6 581.4h6M1043.6 578.4v6M1061.2 581.4h6M1064.2 578.4v6M1081.9 581.4h6M1084.9 578.4v6M1102.5 581.4h6M1105.5 578.4v6M1123.2 581.4h6M1126.2 578.4v6M1143.8 581.4h6M1146.8 578.4v6M1164.5 581.4h6M1167.5 578.4v6M1185.1 581.4h6M1188.1 578.4v6M1205.8 581.4h6M1208.8 578.4v6M1226.5 581.4h6M1229.5 578.4v6M1247.1 581.4h6M1250.1 578.4v6M1267.8 581.4h6M1270.8 578.4v6M1288.4 581.4h6M1291.4 578.4v6M1309.1 581.4h6M1312.1 578.4v6M1329.7 581.4h6M1332.7 578.4v6M1350.4 581.4h6M1353.4 578.4v6M1371.0 581.4h6M1374.0 578.4v6M1391.7 581.4h6M1394.7 578.4v6M1412.3 581.4h6M1415.3 578.4v6M1433.0 581.4h6M1436.0 578.4v6M1453.7 581.4h6M1456.7 578.4v6M1474.3 581.4h6M1477.3 578.4v6M1495.0 581.4h6M1498.0 578.4v6M1515.6 581.4h6M1518.6 578.4v6M1536.3 581.4h6M1539.3 578.4v6M1556.9 581.4h6M1559.9 578.4v6M1577.6 581.4h6M1580.6 578.4v6M1598.2 581.4h6M1601.2 578.4v6M1618.9 581.4h6M1621.9 578.4v6M1639.6 581.4h6M1642.6 578.4v6M1660.2 581.4h6M1663.2 578.4v6M1680.9 581.4h6M1683.9 578.4v6M1701.5 581.4h6M1704.5 578.4v6M1722.2 581.4h6M1725.2 578.4v6M1742.8 581.4h6M1745.8 578.4v6M1763.5 581.4h6M1766.5 578.4v6M1784.1 581.4h6M1787.1 578.4v6M1804.8 581.4h6M1807.8 578.4v6M1825.5 581.4h6M1828.5 578.4v6M1846.1 581.4h6M1849.1 578.4v6M1866.8 581.4h6M1869.8 578.4v6M1887.4 581.4h6M1890.4 578.4v6M1908.1 581.4h6M1911.1 578.4v6M379.6 602.0h6M382.6 599.0v6M400.3 602.0h6M403.3 599.0v6M420.9 602.0h6M423.9 599.0v6M441.6 602.0h6M444.6 599.0v6M462.2 602.0h6M465.2 599.0v6M482.9 602.0h6M485.9 599.0v6M503.5 602.0h6M506.5 599.0v6M524.2 602.0h6M527.2 599.0v6M544.8 602.0h6M547.8 599.0v6M565.5 602.0h6M568.5 599.0v6M586.2 602.0h6M589.2 599.0v6M606.8 602.0h6M609.8 599.0v6M627.5 602.0h6M630.5 599.0v6M648.1 602.0h6M651.1 599.0v6M668.8 602.0h6M671.8 599.0v6M689.4 602.0h6M692.4 599.0v6M710.1 602.0h6M713.1 599.0v6M730.7 602.0h6M733.7 599.0v6M751.4 602.0h6M754.4 599.0v6M772.0 602.0h6M775.0 599.0v6M792.7 602.0h6M795.7 599.0v6M813.4 602.0h6M816.4 599.0v6M834.0 602.0h6M837.0 599.0v6M854.7 602.0h6M857.7 599.0v6M875.3 602.0h6M878.3 599.0v6M896.0 602.0h6M899.0 599.0v6M916.6 602.0h6M919.6 599.0v6M937.3 602.0h6M940.3 599.0v6M957.9 602.0h6M960.9 599.0v6M978.6 602.0h6M981.6 599.0v6M999.3 602.0h6M1002.3 599.0v6M1019.9 602.0h6M1022.9 599.0v6M1040.6 602.0h6M1043.6 599.0v6M1061.2 602.0h6M1064.2 599.0v6M1081.9 602.0h6M1084.9 599.0v6M1102.5 602.0h6M1105.5 599.0v6M1123.2 602.0h6M1126.2 599.0v6M1143.8 602.0h6M1146.8 599.0v6M1164.5 602.0h6M1167.5 599.0v6M1185.1 602.0h6M1188.1 599.0v6M1205.8 602.0h6M1208.8 599.0v6M1226.5 602.0h6M1229.5 599.0v6M1247.1 602.0h6M1250.1 599.0v6M1267.8 602.0h6M1270.8 599.0v6M1288.4 602.0h6M1291.4 599.0v6M1309.1 602.0h6M1312.1 599.0v6M1329.7 602.0h6M1332.7 599.0v6M1350.4 602.0h6M1353.4 599.0v6M1371.0 602.0h6M1374.0 599.0v6M1391.7 602.0h6M1394.7 599.0v6M1412.3 602.0h6M1415.3 599.0v6M1433.0 602.0h6M1436.0 599.0v6M1453.7 602.0h6M1456.7 599.0v6M1474.3 602.0h6M1477.3 599.0v6M1495.0 602.0h6M1498.0 599.0v6M1515.6 602.0h6M1518.6 599.0v6M1536.3 602.0h6M1539.3 599.0v6M1556.9 602.0h6M1559.9 599.0v6M1577.6 602.0h6M1580.6 599.0v6M1598.2 602.0h6M1601.2 599.0v6M1618.9 602.0h6M1621.9 599.0v6M1639.6 602.0h6M1642.6 599.0v6M1660.2 602.0h6M1663.2 599.0v6M1680.9 602.0h6M1683.9 599.0v6M1701.5 602.0h6M1704.5 599.0v6M1722.2 602.0h6M1725.2 599.0v6M1742.8 602.0h6M1745.8 599.0v6M1763.5 602.0h6M1766.5 599.0v6M1784.1 602.0h6M1787.1 599.0v6M1804.8 602.0h6M1807.8 599.0v6M1825.5 602.0h6M1828.5 599.0v6M1846.1 602.0h6M1849.1 599.0v6M1866.8 602.0h6M1869.8 599.0v6M1887.4 602.0h6M1890.4 599.0v6M1908.1 602.0h6M1911.1 599.0v6M379.6 622.7h6M382.6 619.7v6M400.3 622.7h6M403.3 619.7v6M420.9 622.7h6M423.9 619.7v6M441.6 622.7h6M444.6 619.7v6M462.2 622.7h6M465.2 619.7v6M482.9 622.7h6M485.9 619.7v6M503.5 622.7h6M506.5 619.7v6M524.2 622.7h6M527.2 619.7v6M544.8 622.7h6M547.8 619.7v6M565.5 622.7h6M568.5 619.7v6M586.2 622.7h6M589.2 619.7v6M606.8 622.7h6M609.8 619.7v6M627.5 622.7h6M630.5 619.7v6M648.1 622.7h6M651.1 619.7v6M668.8 622.7h6M671.8 619.7v6M689.4 622.7h6M692.4 619.7v6M710.1 622.7h6M713.1 619.7v6M730.7 622.7h6M733.7 619.7v6M751.4 622.7h6M754.4 619.7v6M772.0 622.7h6M775.0 619.7v6M792.7 622.7h6M795.7 619.7v6M813.4 622.7h6M816.4 619.7v6M834.0 622.7h6M837.0 619.7v6M854.7 622.7h6M857.7 619.7v6M875.3 622.7h6M878.3 619.7v6M896.0 622.7h6M899.0 619.7v6M916.6 622.7h6M919.6 619.7v6M937.3 622.7h6M940.3 619.7v6M957.9 622.7h6M960.9 619.7v6M978.6 622.7h6M981.6 619.7v6M999.3 622.7h6M1002.3 619.7v6M1019.9 622.7h6M1022.9 619.7v6M1040.6 622.7h6M1043.6 619.7v6M1061.2 622.7h6M1064.2 619.7v6M1081.9 622.7h6M1084.9 619.7v6M1102.5 622.7h6M1105.5 619.7v6M1123.2 622.7h6M1126.2 619.7v6M1143.8 622.7h6M1146.8 619.7v6M1164.5 622.7h6M1167.5 619.7v6M1185.1 622.7h6M1188.1 619.7v6M1205.8 622.7h6M1208.8 619.7v6M1226.5 622.7h6M1229.5 619.7v6M1247.1 622.7h6M1250.1 619.7v6M1267.8 622.7h6M1270.8 619.7v6M1288.4 622.7h6M1291.4 619.7v6M1309.1 622.7h6M1312.1 619.7v6M1329.7 622.7h6M1332.7 619.7v6M1350.4 622.7h6M1353.4 619.7v6M1371.0 622.7h6M1374.0 619.7v6M1391.7 622.7h6M1394.7 619.7v6M1412.3 622.7h6M1415.3 619.7v6M1433.0 622.7h6M1436.0 619.7v6M1453.7 622.7h6M1456.7 619.7v6M1474.3 622.7h6M1477.3 619.7v6M1495.0 622.7h6M1498.0 619.7v6M1515.6 622.7h6M1518.6 619.7v6M1536.3 622.7h6M1539.3 619.7v6M1556.9 622.7h6M1559.9 619.7v6M1577.6 622.7h6M1580.6 619.7v6M1598.2 622.7h6M1601.2 619.7v6M1618.9 622.7h6M1621.9 619.7v6M1639.6 622.7h6M1642.6 619.7v6M1660.2 622.7h6M1663.2 619.7v6M1680.9 622.7h6M1683.9 619.7v6M1701.5 622.7h6M1704.5 619.7v6M1722.2 622.7h6M1725.2 619.7v6M1742.8 622.7h6M1745.8 619.7v6M1763.5 622.7h6M1766.5 619.7v6M1784.1 622.7h6M1787.1 619.7v6M1804.8 622.7h6M1807.8 619.7v6M1825.5 622.7h6M1828.5 619.7v6M1846.1 622.7h6M1849.1 619.7v6M1866.8 622.7h6M1869.8 619.7v6M1887.4 622.7h6M1890.4 619.7v6M1908.1 622.7h6M1911.1 619.7v6M379.6 643.3h6M382.6 640.3v6M400.3 643.3h6M403.3 640.3v6M420.9 643.3h6M423.9 640.3v6M441.6 643.3h6M444.6 640.3v6M462.2 643.3h6M465.2 640.3v6M482.9 643.3h6M485.9 640.3v6M503.5 643.3h6M506.5 640.3v6M524.2 643.3h6M527.2 640.3v6M544.8 643.3h6M547.8 640.3v6M565.5 643.3h6M568.5 640.3v6M586.2 643.3h6M589.2 640.3v6M606.8 643.3h6M609.8 640.3v6M627.5 643.3h6M630.5 640.3v6M648.1 643.3h6M651.1 640.3v6M668.8 643.3h6M671.8 640.3v6M689.4 643.3h6M692.4 640.3v6M710.1 643.3h6M713.1 640.3v6M730.7 643.3h6M733.7 640.3v6M751.4 643.3h6M754.4 640.3v6M772.0 643.3h6M775.0 640.3v6M792.7 643.3h6M795.7 640.3v6M813.4 643.3h6M816.4 640.3v6M834.0 643.3h6M837.0 640.3v6M854.7 643.3h6M857.7 640.3v6M875.3 643.3h6M878.3 640.3v6M896.0 643.3h6M899.0 640.3v6M916.6 643.3h6M919.6 640.3v6M937.3 643.3h6M940.3 640.3v6M957.9 643.3h6M960.9 640.3v6M978.6 643.3h6M981.6 640.3v6M999.3 643.3h6M1002.3 640.3v6M1019.9 643.3h6M1022.9 640.3v6M1040.6 643.3h6M1043.6 640.3v6M1061.2 643.3h6M1064.2 640.3v6M1081.9 643.3h6M1084.9 640.3v6M1102.5 643.3h6M1105.5 640.3v6M1123.2 643.3h6M1126.2 640.3v6M1143.8 643.3h6M1146.8 640.3v6M1164.5 643.3h6M1167.5 640.3v6M1185.1 643.3h6M1188.1 640.3v6M1205.8 643.3h6M1208.8 640.3v6M1226.5 643.3h6M1229.5 640.3v6M1247.1 643.3h6M1250.1 640.3v6M1267.8 643.3h6M1270.8 640.3v6M1288.4 643.3h6M1291.4 640.3v6M1309.1 643.3h6M1312.1 640.3v6M1329.7 643.3h6M1332.7 640.3v6M1350.4 643.3h6M1353.4 640.3v6M1371.0 643.3h6M1374.0 640.3v6M1391.7 643.3h6M1394.7 640.3v6M1412.3 643.3h6M1415.3 640.3v6M1433.0 643.3h6M1436.0 640.3v6M1453.7 643.3h6M1456.7 640.3v6M1474.3 643.3h6M1477.3 640.3v6M1495.0 643.3h6M1498.0 640.3v6M1515.6 643.3h6M1518.6 640.3v6M1536.3 643.3h6M1539.3 640.3v6M1556.9 643.3h6M1559.9 640.3v6M1577.6 643.3h6M1580.6 640.3v6M1598.2 643.3h6M1601.2 640.3v6M1618.9 643.3h6M1621.9 640.3v6M1639.6 643.3h6M1642.6 640.3v6M1660.2 643.3h6M1663.2 640.3v6M1680.9 643.3h6M1683.9 640.3v6M1701.5 643.3h6M1704.5 640.3v6M1722.2 643.3h6M1725.2 640.3v6M1742.8 643.3h6M1745.8 640.3v6M1763.5 643.3h6M1766.5 640.3v6M1784.1 643.3h6M1787.1 640.3v6M1804.8 643.3h6M1807.8 640.3v6M1825.5 643.3h6M1828.5 640.3v6M1846.1 643.3h6M1849.1 640.3v6M1866.8 643.3h6M1869.8 640.3v6M1887.4 643.3h6M1890.4 640.3v6M1908.1 643.3h6M1911.1 640.3v6M379.6 664.0h6M382.6 661.0v6M400.3 664.0h6M403.3 661.0v6M420.9 664.0h6M423.9 661.0v6M441.6 664.0h6M444.6 661.0v6M462.2 664.0h6M465.2 661.0v6M482.9 664.0h6M485.9 661.0v6M503.5 664.0h6M506.5 661.0v6M524.2 664.0h6M527.2 661.0v6M544.8 664.0h6M547.8 661.0v6M565.5 664.0h6M568.5 661.0v6M586.2 664.0h6M589.2 661.0v6M606.8 664.0h6M609.8 661.0v6M627.5 664.0h6M630.5 661.0v6M648.1 664.0h6M651.1 661.0v6M668.8 664.0h6M671.8 661.0v6M689.4 664.0h6M692.4 661.0v6M710.1 664.0h6M713.1 661.0v6M730.7 664.0h6M733.7 661.0v6M751.4 664.0h6M754.4 661.0v6M772.0 664.0h6M775.0 661.0v6M792.7 664.0h6M795.7 661.0v6M813.4 664.0h6M816.4 661.0v6M834.0 664.0h6M837.0 661.0v6M854.7 664.0h6M857.7 661.0v6M875.3 664.0h6M878.3 661.0v6M896.0 664.0h6M899.0 661.0v6M916.6 664.0h6M919.6 661.0v6M937.3 664.0h6M940.3 661.0v6M957.9 664.0h6M960.9 661.0v6M978.6 664.0h6M981.6 661.0v6M999.3 664.0h6M1002.3 661.0v6M1019.9 664.0h6M1022.9 661.0v6M1040.6 664.0h6M1043.6 661.0v6M1061.2 664.0h6M1064.2 661.0v6M1081.9 664.0h6M1084.9 661.0v6M1102.5 664.0h6M1105.5 661.0v6M1123.2 664.0h6M1126.2 661.0v6M1143.8 664.0h6M1146.8 661.0v6M1164.5 664.0h6M1167.5 661.0v6M1185.1 664.0h6M1188.1 661.0v6M1205.8 664.0h6M1208.8 661.0v6M1226.5 664.0h6M1229.5 661.0v6M1247.1 664.0h6M1250.1 661.0v6M1267.8 664.0h6M1270.8 661.0v6M1288.4 664.0h6M1291.4 661.0v6M1309.1 664.0h6M1312.1 661.0v6M1329.7 664.0h6M1332.7 661.0v6M1350.4 664.0h6M1353.4 661.0v6M1371.0 664.0h6M1374.0 661.0v6M1391.7 664.0h6M1394.7 661.0v6M1412.3 664.0h6M1415.3 661.0v6M1433.0 664.0h6M1436.0 661.0v6M1453.7 664.0h6M1456.7 661.0v6M1474.3 664.0h6M1477.3 661.0v6M1495.0 664.0h6M1498.0 661.0v6M1515.6 664.0h6M1518.6 661.0v6M1536.3 664.0h6M1539.3 661.0v6M1556.9 664.0h6M1559.9 661.0v6M1577.6 664.0h6M1580.6 661.0v6M1598.2 664.0h6M1601.2 661.0v6M1618.9 664.0h6M1621.9 661.0v6M1639.6 664.0h6M1642.6 661.0v6M1660.2 664.0h6M1663.2 661.0v6M1680.9 664.0h6M1683.9 661.0v6M1701.5 664.0h6M1704.5 661.0v6M1722.2 664.0h6M1725.2 661.0v6M1742.8 664.0h6M1745.8 661.0v6M1763.5 664.0h6M1766.5 661.0v6M1784.1 664.0h6M1787.1 661.0v6M1804.8 664.0h6M1807.8 661.0v6M1825.5 664.0h6M1828.5 661.0v6M1846.1 664.0h6M1849.1 661.0v6M1866.8 664.0h6M1869.8 661.0v6M1887.4 664.0h6M1890.4 661.0v6M1908.1 664.0h6M1911.1 661.0v6M379.6 684.7h6M382.6 681.7v6M400.3 684.7h6M403.3 681.7v6M420.9 684.7h6M423.9 681.7v6M441.6 684.7h6M444.6 681.7v6M462.2 684.7h6M465.2 681.7v6M482.9 684.7h6M485.9 681.7v6M503.5 684.7h6M506.5 681.7v6M524.2 684.7h6M527.2 681.7v6M544.8 684.7h6M547.8 681.7v6M565.5 684.7h6M568.5 681.7v6M586.2 684.7h6M589.2 681.7v6M606.8 684.7h6M609.8 681.7v6M627.5 684.7h6M630.5 681.7v6M648.1 684.7h6M651.1 681.7v6M668.8 684.7h6M671.8 681.7v6M689.4 684.7h6M692.4 681.7v6M710.1 684.7h6M713.1 681.7v6M730.7 684.7h6M733.7 681.7v6M751.4 684.7h6M754.4 681.7v6M772.0 684.7h6M775.0 681.7v6M792.7 684.7h6M795.7 681.7v6M813.4 684.7h6M816.4 681.7v6M834.0 684.7h6M837.0 681.7v6M854.7 684.7h6M857.7 681.7v6M875.3 684.7h6M878.3 681.7v6M896.0 684.7h6M899.0 681.7v6M916.6 684.7h6M919.6 681.7v6M937.3 684.7h6M940.3 681.7v6M957.9 684.7h6M960.9 681.7v6M978.6 684.7h6M981.6 681.7v6M999.3 684.7h6M1002.3 681.7v6M1019.9 684.7h6M1022.9 681.7v6M1040.6 684.7h6M1043.6 681.7v6M1061.2 684.7h6M1064.2 681.7v6M1081.9 684.7h6M1084.9 681.7v6M1102.5 684.7h6M1105.5 681.7v6M1123.2 684.7h6M1126.2 681.7v6M1143.8 684.7h6M1146.8 681.7v6M1164.5 684.7h6M1167.5 681.7v6M1185.1 684.7h6M1188.1 681.7v6M1205.8 684.7h6M1208.8 681.7v6M1226.5 684.7h6M1229.5 681.7v6M1247.1 684.7h6M1250.1 681.7v6M1267.8 684.7h6M1270.8 681.7v6M1288.4 684.7h6M1291.4 681.7v6M1309.1 684.7h6M1312.1 681.7v6M1329.7 684.7h6M1332.7 681.7v6M1350.4 684.7h6M1353.4 681.7v6M1371.0 684.7h6M1374.0 681.7v6M1391.7 684.7h6M1394.7 681.7v6M1412.3 684.7h6M1415.3 681.7v6M1433.0 684.7h6M1436.0 681.7v6M1453.7 684.7h6M1456.7 681.7v6M1474.3 684.7h6M1477.3 681.7v6M1495.0 684.7h6M1498.0 681.7v6M1515.6 684.7h6M1518.6 681.7v6M1536.3 684.7h6M1539.3 681.7v6M1556.9 684.7h6M1559.9 681.7v6M1577.6 684.7h6M1580.6 681.7v6M1598.2 684.7h6M1601.2 681.7v6M1618.9 684.7h6M1621.9 681.7v6M1639.6 684.7h6M1642.6 681.7v6M1660.2 684.7h6M1663.2 681.7v6M1680.9 684.7h6M1683.9 681.7v6M1701.5 684.7h6M1704.5 681.7v6M1722.2 684.7h6M1725.2 681.7v6M1742.8 684.7h6M1745.8 681.7v6M1763.5 684.7h6M1766.5 681.7v6M1784.1 684.7h6M1787.1 681.7v6M1804.8 684.7h6M1807.8 681.7v6M1825.5 684.7h6M1828.5 681.7v6M1846.1 684.7h6M1849.1 681.7v6M1866.8 684.7h6M1869.8 681.7v6M1887.4 684.7h6M1890.4 681.7v6M1908.1 684.7h6M1911.1 681.7v6M379.6 705.3h6M382.6 702.3v6M400.3 705.3h6M403.3 702.3v6M420.9 705.3h6M423.9 702.3v6M441.6 705.3h6M444.6 702.3v6M462.2 705.3h6M465.2 702.3v6M482.9 705.3h6M485.9 702.3v6M503.5 705.3h6M506.5 702.3v6M524.2 705.3h6M527.2 702.3v6M544.8 705.3h6M547.8 702.3v6M565.5 705.3h6M568.5 702.3v6M586.2 705.3h6M589.2 702.3v6M606.8 705.3h6M609.8 702.3v6M627.5 705.3h6M630.5 702.3v6M648.1 705.3h6M651.1 702.3v6M668.8 705.3h6M671.8 702.3v6M689.4 705.3h6M692.4 702.3v6M710.1 705.3h6M713.1 702.3v6M730.7 705.3h6M733.7 702.3v6M751.4 705.3h6M754.4 702.3v6M772.0 705.3h6M775.0 702.3v6M792.7 705.3h6M795.7 702.3v6M813.4 705.3h6M816.4 702.3v6M834.0 705.3h6M837.0 702.3v6M854.7 705.3h6M857.7 702.3v6M875.3 705.3h6M878.3 702.3v6M896.0 705.3h6M899.0 702.3v6M916.6 705.3h6M919.6 702.3v6M937.3 705.3h6M940.3 702.3v6M957.9 705.3h6M960.9 702.3v6M978.6 705.3h6M981.6 702.3v6M999.3 705.3h6M1002.3 702.3v6M1019.9 705.3h6M1022.9 702.3v6M1040.6 705.3h6M1043.6 702.3v6M1061.2 705.3h6M1064.2 702.3v6M1081.9 705.3h6M1084.9 702.3v6M1102.5 705.3h6M1105.5 702.3v6M1123.2 705.3h6M1126.2 702.3v6M1143.8 705.3h6M1146.8 702.3v6M1164.5 705.3h6M1167.5 702.3v6M1185.1 705.3h6M1188.1 702.3v6M1205.8 705.3h6M1208.8 702.3v6M1226.5 705.3h6M1229.5 702.3v6M1247.1 705.3h6M1250.1 702.3v6M1267.8 705.3h6M1270.8 702.3v6M1288.4 705.3h6M1291.4 702.3v6M1309.1 705.3h6M1312.1 702.3v6M1329.7 705.3h6M1332.7 702.3v6M1350.4 705.3h6M1353.4 702.3v6M1371.0 705.3h6M1374.0 702.3v6M1391.7 705.3h6M1394.7 702.3v6M1412.3 705.3h6M1415.3 702.3v6M1433.0 705.3h6M1436.0 702.3v6M1453.7 705.3h6M1456.7 702.3v6M1474.3 705.3h6M1477.3 702.3v6M1495.0 705.3h6M1498.0 702.3v6M1515.6 705.3h6M1518.6 702.3v6M1536.3 705.3h6M1539.3 702.3v6M1556.9 705.3h6M1559.9 702.3v6M1577.6 705.3h6M1580.6 702.3v6M1598.2 705.3h6M1601.2 702.3v6M1618.9 705.3h6M1621.9 702.3v6M1639.6 705.3h6M1642.6 702.3v6M1660.2 705.3h6M1663.2 702.3v6M1680.9 705.3h6M1683.9 702.3v6M1701.5 705.3h6M1704.5 702.3v6M1722.2 705.3h6M1725.2 702.3v6M1742.8 705.3h6M1745.8 702.3v6M1763.5 705.3h6M1766.5 702.3v6M1784.1 705.3h6M1787.1 702.3v6M1804.8 705.3h6M1807.8 702.3v6M1825.5 705.3h6M1828.5 702.3v6M1846.1 705.3h6M1849.1 702.3v6M1866.8 705.3h6M1869.8 702.3v6M1887.4 705.3h6M1890.4 702.3v6M1908.1 705.3h6M1911.1 702.3v6M379.6 726.0h6M382.6 723.0v6M400.3 726.0h6M403.3 723.0v6M420.9 726.0h6M423.9 723.0v6M441.6 726.0h6M444.6 723.0v6M462.2 726.0h6M465.2 723.0v6M482.9 726.0h6M485.9 723.0v6M503.5 726.0h6M506.5 723.0v6M524.2 726.0h6M527.2 723.0v6M544.8 726.0h6M547.8 723.0v6M565.5 726.0h6M568.5 723.0v6M586.2 726.0h6M589.2 723.0v6M606.8 726.0h6M609.8 723.0v6M627.5 726.0h6M630.5 723.0v6M648.1 726.0h6M651.1 723.0v6M668.8 726.0h6M671.8 723.0v6M689.4 726.0h6M692.4 723.0v6M710.1 726.0h6M713.1 723.0v6M730.7 726.0h6M733.7 723.0v6M751.4 726.0h6M754.4 723.0v6M772.0 726.0h6M775.0 723.0v6M792.7 726.0h6M795.7 723.0v6M813.4 726.0h6M816.4 723.0v6M834.0 726.0h6M837.0 723.0v6M854.7 726.0h6M857.7 723.0v6M875.3 726.0h6M878.3 723.0v6M896.0 726.0h6M899.0 723.0v6M916.6 726.0h6M919.6 723.0v6M937.3 726.0h6M940.3 723.0v6M957.9 726.0h6M960.9 723.0v6M978.6 726.0h6M981.6 723.0v6M999.3 726.0h6M1002.3 723.0v6M1019.9 726.0h6M1022.9 723.0v6M1040.6 726.0h6M1043.6 723.0v6M1061.2 726.0h6M1064.2 723.0v6M1081.9 726.0h6M1084.9 723.0v6M1102.5 726.0h6M1105.5 723.0v6M1123.2 726.0h6M1126.2 723.0v6M1143.8 726.0h6M1146.8 723.0v6M1164.5 726.0h6M1167.5 723.0v6M1185.1 726.0h6M1188.1 723.0v6M1205.8 726.0h6M1208.8 723.0v6M1226.5 726.0h6M1229.5 723.0v6M1247.1 726.0h6M1250.1 723.0v6M1267.8 726.0h6M1270.8 723.0v6M1288.4 726.0h6M1291.4 723.0v6M1309.1 726.0h6M1312.1 723.0v6M1329.7 726.0h6M1332.7 723.0v6M1350.4 726.0h6M1353.4 723.0v6M1371.0 726.0h6M1374.0 723.0v6M1391.7 726.0h6M1394.7 723.0v6M1412.3 726.0h6M1415.3 723.0v6M1433.0 726.0h6M1436.0 723.0v6M1453.7 726.0h6M1456.7 723.0v6M1474.3 726.0h6M1477.3 723.0v6M1495.0 726.0h6M1498.0 723.0v6M1515.6 726.0h6M1518.6 723.0v6M1536.3 726.0h6M1539.3 723.0v6M1556.9 726.0h6M1559.9 723.0v6M1577.6 726.0h6M1580.6 723.0v6M1598.2 726.0h6M1601.2 723.0v6M1618.9 726.0h6M1621.9 723.0v6M1639.6 726.0h6M1642.6 723.0v6M1660.2 726.0h6M1663.2 723.0v6M1680.9 726.0h6M1683.9 723.0v6M1701.5 726.0h6M1704.5 723.0v6M1722.2 726.0h6M1725.2 723.0v6M1742.8 726.0h6M1745.8 723.0v6M1763.5 726.0h6M1766.5 723.0v6M1784.1 726.0h6M1787.1 723.0v6M1804.8 726.0h6M1807.8 723.0v6M1825.5 726.0h6M1828.5 723.0v6M1846.1 726.0h6M1849.1 723.0v6M1866.8 726.0h6M1869.8 723.0v6M1887.4 726.0h6M1890.4 723.0v6M1908.1 726.0h6M1911.1 723.0v6M379.6 746.6h6M382.6 743.6v6M400.3 746.6h6M403.3 743.6v6M420.9 746.6h6M423.9 743.6v6M441.6 746.6h6M444.6 743.6v6M462.2 746.6h6M465.2 743.6v6M482.9 746.6h6M485.9 743.6v6M503.5 746.6h6M506.5 743.6v6M524.2 746.6h6M527.2 743.6v6M544.8 746.6h6M547.8 743.6v6M565.5 746.6h6M568.5 743.6v6M586.2 746.6h6M589.2 743.6v6M606.8 746.6h6M609.8 743.6v6M627.5 746.6h6M630.5 743.6v6M648.1 746.6h6M651.1 743.6v6M668.8 746.6h6M671.8 743.6v6M689.4 746.6h6M692.4 743.6v6M710.1 746.6h6M713.1 743.6v6M730.7 746.6h6M733.7 743.6v6M751.4 746.6h6M754.4 743.6v6M772.0 746.6h6M775.0 743.6v6M792.7 746.6h6M795.7 743.6v6M813.4 746.6h6M816.4 743.6v6M834.0 746.6h6M837.0 743.6v6M854.7 746.6h6M857.7 743.6v6M875.3 746.6h6M878.3 743.6v6M896.0 746.6h6M899.0 743.6v6M916.6 746.6h6M919.6 743.6v6M937.3 746.6h6M940.3 743.6v6M957.9 746.6h6M960.9 743.6v6M978.6 746.6h6M981.6 743.6v6M999.3 746.6h6M1002.3 743.6v6M1019.9 746.6h6M1022.9 743.6v6M1040.6 746.6h6M1043.6 743.6v6M1061.2 746.6h6M1064.2 743.6v6M1081.9 746.6h6M1084.9 743.6v6M1102.5 746.6h6M1105.5 743.6v6M1123.2 746.6h6M1126.2 743.6v6M1143.8 746.6h6M1146.8 743.6v6M1164.5 746.6h6M1167.5 743.6v6M1185.1 746.6h6M1188.1 743.6v6M1205.8 746.6h6M1208.8 743.6v6M1226.5 746.6h6M1229.5 743.6v6M1247.1 746.6h6M1250.1 743.6v6M1267.8 746.6h6M1270.8 743.6v6M1288.4 746.6h6M1291.4 743.6v6M1309.1 746.6h6M1312.1 743.6v6M1329.7 746.6h6M1332.7 743.6v6M1350.4 746.6h6M1353.4 743.6v6M1371.0 746.6h6M1374.0 743.6v6M1391.7 746.6h6M1394.7 743.6v6M1412.3 746.6h6M1415.3 743.6v6M1433.0 746.6h6M1436.0 743.6v6M1453.7 746.6h6M1456.7 743.6v6M1474.3 746.6h6M1477.3 743.6v6M1495.0 746.6h6M1498.0 743.6v6M1515.6 746.6h6M1518.6 743.6v6M1536.3 746.6h6M1539.3 743.6v6M1556.9 746.6h6M1559.9 743.6v6M1577.6 746.6h6M1580.6 743.6v6M1598.2 746.6h6M1601.2 743.6v6M1618.9 746.6h6M1621.9 743.6v6M1639.6 746.6h6M1642.6 743.6v6M1660.2 746.6h6M1663.2 743.6v6M1680.9 746.6h6M1683.9 743.6v6M1701.5 746.6h6M1704.5 743.6v6M1722.2 746.6h6M1725.2 743.6v6M1742.8 746.6h6M1745.8 743.6v6M1763.5 746.6h6M1766.5 743.6v6M1784.1 746.6h6M1787.1 743.6v6M1804.8 746.6h6M1807.8 743.6v6M1825.5 746.6h6M1828.5 743.6v6M1846.1 746.6h6M1849.1 743.6v6M1866.8 746.6h6M1869.8 743.6v6M1887.4 746.6h6M1890.4 743.6v6M1908.1 746.6h6M1911.1 743.6v6M379.6 767.3h6M382.6 764.3v6M400.3 767.3h6M403.3 764.3v6M420.9 767.3h6M423.9 764.3v6M441.6 767.3h6M444.6 764.3v6M462.2 767.3h6M465.2 764.3v6M482.9 767.3h6M485.9 764.3v6M503.5 767.3h6M506.5 764.3v6M524.2 767.3h6M527.2 764.3v6M544.8 767.3h6M547.8 764.3v6M565.5 767.3h6M568.5 764.3v6M586.2 767.3h6M589.2 764.3v6M606.8 767.3h6M609.8 764.3v6M627.5 767.3h6M630.5 764.3v6M648.1 767.3h6M651.1 764.3v6M668.8 767.3h6M671.8 764.3v6M689.4 767.3h6M692.4 764.3v6M710.1 767.3h6M713.1 764.3v6M730.7 767.3h6M733.7 764.3v6M751.4 767.3h6M754.4 764.3v6M772.0 767.3h6M775.0 764.3v6M792.7 767.3h6M795.7 764.3v6M813.4 767.3h6M816.4 764.3v6M834.0 767.3h6M837.0 764.3v6M854.7 767.3h6M857.7 764.3v6M875.3 767.3h6M878.3 764.3v6M896.0 767.3h6M899.0 764.3v6M916.6 767.3h6M919.6 764.3v6M937.3 767.3h6M940.3 764.3v6M957.9 767.3h6M960.9 764.3v6M978.6 767.3h6M981.6 764.3v6M999.3 767.3h6M1002.3 764.3v6M1019.9 767.3h6M1022.9 764.3v6M1040.6 767.3h6M1043.6 764.3v6M1061.2 767.3h6M1064.2 764.3v6M1081.9 767.3h6M1084.9 764.3v6M1102.5 767.3h6M1105.5 764.3v6M1123.2 767.3h6M1126.2 764.3v6M1143.8 767.3h6M1146.8 764.3v6M1164.5 767.3h6M1167.5 764.3v6M1185.1 767.3h6M1188.1 764.3v6M1205.8 767.3h6M1208.8 764.3v6M1226.5 767.3h6M1229.5 764.3v6M1247.1 767.3h6M1250.1 764.3v6M1267.8 767.3h6M1270.8 764.3v6M1288.4 767.3h6M1291.4 764.3v6M1309.1 767.3h6M1312.1 764.3v6M1329.7 767.3h6M1332.7 764.3v6M1350.4 767.3h6M1353.4 764.3v6M1371.0 767.3h6M1374.0 764.3v6M1391.7 767.3h6M1394.7 764.3v6M1412.3 767.3h6M1415.3 764.3v6M1433.0 767.3h6M1436.0 764.3v6M1453.7 767.3h6M1456.7 764.3v6M1474.3 767.3h6M1477.3 764.3v6M1495.0 767.3h6M1498.0 764.3v6M1515.6 767.3h6M1518.6 764.3v6M1536.3 767.3h6M1539.3 764.3v6M1556.9 767.3h6M1559.9 764.3v6M1577.6 767.3h6M1580.6 764.3v6M1598.2 767.3h6M1601.2 764.3v6M1618.9 767.3h6M1621.9 764.3v6M1639.6 767.3h6M1642.6 764.3v6M1660.2 767.3h6M1663.2 764.3v6M1680.9 767.3h6M1683.9 764.3v6M1701.5 767.3h6M1704.5 764.3v6M1722.2 767.3h6M1725.2 764.3v6M1742.8 767.3h6M1745.8 764.3v6M1763.5 767.3h6M1766.5 764.3v6M1784.1 767.3h6M1787.1 764.3v6M1804.8 767.3h6M1807.8 764.3v6M1825.5 767.3h6M1828.5 764.3v6M1846.1 767.3h6M1849.1 764.3v6M1866.8 767.3h6M1869.8 764.3v6M1887.4 767.3h6M1890.4 764.3v6M1908.1 767.3h6M1911.1 764.3v6M379.6 787.9h6M382.6 784.9v6M400.3 787.9h6M403.3 784.9v6M420.9 787.9h6M423.9 784.9v6M441.6 787.9h6M444.6 784.9v6M462.2 787.9h6M465.2 784.9v6M482.9 787.9h6M485.9 784.9v6M503.5 787.9h6M506.5 784.9v6M524.2 787.9h6M527.2 784.9v6M544.8 787.9h6M547.8 784.9v6M565.5 787.9h6M568.5 784.9v6M586.2 787.9h6M589.2 784.9v6M606.8 787.9h6M609.8 784.9v6M627.5 787.9h6M630.5 784.9v6M648.1 787.9h6M651.1 784.9v6M668.8 787.9h6M671.8 784.9v6M689.4 787.9h6M692.4 784.9v6M710.1 787.9h6M713.1 784.9v6M730.7 787.9h6M733.7 784.9v6M751.4 787.9h6M754.4 784.9v6M772.0 787.9h6M775.0 784.9v6M792.7 787.9h6M795.7 784.9v6M813.4 787.9h6M816.4 784.9v6M834.0 787.9h6M837.0 784.9v6M854.7 787.9h6M857.7 784.9v6M875.3 787.9h6M878.3 784.9v6M896.0 787.9h6M899.0 784.9v6M916.6 787.9h6M919.6 784.9v6M937.3 787.9h6M940.3 784.9v6M957.9 787.9h6M960.9 784.9v6M978.6 787.9h6M981.6 784.9v6M999.3 787.9h6M1002.3 784.9v6M1019.9 787.9h6M1022.9 784.9v6M1040.6 787.9h6M1043.6 784.9v6M1061.2 787.9h6M1064.2 784.9v6M1081.9 787.9h6M1084.9 784.9v6M1102.5 787.9h6M1105.5 784.9v6M1123.2 787.9h6M1126.2 784.9v6M1143.8 787.9h6M1146.8 784.9v6M1164.5 787.9h6M1167.5 784.9v6M1185.1 787.9h6M1188.1 784.9v6M1205.8 787.9h6M1208.8 784.9v6M1226.5 787.9h6M1229.5 784.9v6M1247.1 787.9h6M1250.1 784.9v6M1267.8 787.9h6M1270.8 784.9v6M1288.4 787.9h6M1291.4 784.9v6M1309.1 787.9h6M1312.1 784.9v6M1329.7 787.9h6M1332.7 784.9v6M1350.4 787.9h6M1353.4 784.9v6M1371.0 787.9h6M1374.0 784.9v6M1391.7 787.9h6M1394.7 784.9v6M1412.3 787.9h6M1415.3 784.9v6M1433.0 787.9h6M1436.0 784.9v6M1453.7 787.9h6M1456.7 784.9v6M1474.3 787.9h6M1477.3 784.9v6M1495.0 787.9h6M1498.0 784.9v6M1515.6 787.9h6M1518.6 784.9v6M1536.3 787.9h6M1539.3 784.9v6M1556.9 787.9h6M1559.9 784.9v6M1577.6 787.9h6M1580.6 784.9v6M1598.2 787.9h6M1601.2 784.9v6M1618.9 787.9h6M1621.9 784.9v6M1639.6 787.9h6M1642.6 784.9v6M1660.2 787.9h6M1663.2 784.9v6M1680.9 787.9h6M1683.9 784.9v6M1701.5 787.9h6M1704.5 784.9v6M1722.2 787.9h6M1725.2 784.9v6M1742.8 787.9h6M1745.8 784.9v6M1763.5 787.9h6M1766.5 784.9v6M1784.1 787.9h6M1787.1 784.9v6M1804.8 787.9h6M1807.8 784.9v6M1825.5 787.9h6M1828.5 784.9v6M1846.1 787.9h6M1849.1 784.9v6M1866.8 787.9h6M1869.8 784.9v6M1887.4 787.9h6M1890.4 784.9v6M1908.1 787.9h6M1911.1 784.9v6M379.6 808.6h6M382.6 805.6v6M400.3 808.6h6M403.3 805.6v6M420.9 808.6h6M423.9 805.6v6M441.6 808.6h6M444.6 805.6v6M462.2 808.6h6M465.2 805.6v6M482.9 808.6h6M485.9 805.6v6M503.5 808.6h6M506.5 805.6v6M524.2 808.6h6M527.2 805.6v6M544.8 808.6h6M547.8 805.6v6M565.5 808.6h6M568.5 805.6v6M586.2 808.6h6M589.2 805.6v6M606.8 808.6h6M609.8 805.6v6M627.5 808.6h6M630.5 805.6v6M648.1 808.6h6M651.1 805.6v6M668.8 808.6h6M671.8 805.6v6M689.4 808.6h6M692.4 805.6v6M710.1 808.6h6M713.1 805.6v6M730.7 808.6h6M733.7 805.6v6M751.4 808.6h6M754.4 805.6v6M772.0 808.6h6M775.0 805.6v6M792.7 808.6h6M795.7 805.6v6M813.4 808.6h6M816.4 805.6v6M834.0 808.6h6M837.0 805.6v6M854.7 808.6h6M857.7 805.6v6M875.3 808.6h6M878.3 805.6v6M896.0 808.6h6M899.0 805.6v6M916.6 808.6h6M919.6 805.6v6M937.3 808.6h6M940.3 805.6v6M957.9 808.6h6M960.9 805.6v6M978.6 808.6h6M981.6 805.6v6M999.3 808.6h6M1002.3 805.6v6M1019.9 808.6h6M1022.9 805.6v6M1040.6 808.6h6M1043.6 805.6v6M1061.2 808.6h6M1064.2 805.6v6M1081.9 808.6h6M1084.9 805.6v6M1102.5 808.6h6M1105.5 805.6v6M1123.2 808.6h6M1126.2 805.6v6M1143.8 808.6h6M1146.8 805.6v6M1164.5 808.6h6M1167.5 805.6v6M1185.1 808.6h6M1188.1 805.6v6M1205.8 808.6h6M1208.8 805.6v6M1226.5 808.6h6M1229.5 805.6v6M1247.1 808.6h6M1250.1 805.6v6M1267.8 808.6h6M1270.8 805.6v6M1288.4 808.6h6M1291.4 805.6v6M1309.1 808.6h6M1312.1 805.6v6M1329.7 808.6h6M1332.7 805.6v6M1350.4 808.6h6M1353.4 805.6v6M1371.0 808.6h6M1374.0 805.6v6M1391.7 808.6h6M1394.7 805.6v6M1412.3 808.6h6M1415.3 805.6v6M1433.0 808.6h6M1436.0 805.6v6M1453.7 808.6h6M1456.7 805.6v6M1474.3 808.6h6M1477.3 805.6v6M1495.0 808.6h6M1498.0 805.6v6M1515.6 808.6h6M1518.6 805.6v6M1536.3 808.6h6M1539.3 805.6v6M1556.9 808.6h6M1559.9 805.6v6M1577.6 808.6h6M1580.6 805.6v6M1598.2 808.6h6M1601.2 805.6v6M1618.9 808.6h6M1621.9 805.6v6M1639.6 808.6h6M1642.6 805.6v6M1660.2 808.6h6M1663.2 805.6v6M1680.9 808.6h6M1683.9 805.6v6M1701.5 808.6h6M1704.5 805.6v6M1722.2 808.6h6M1725.2 805.6v6M1742.8 808.6h6M1745.8 805.6v6M1763.5 808.6h6M1766.5 805.6v6M1784.1 808.6h6M1787.1 805.6v6M1804.8 808.6h6M1807.8 805.6v6M1825.5 808.6h6M1828.5 805.6v6M1846.1 808.6h6M1849.1 805.6v6M1866.8 808.6h6M1869.8 805.6v6M1887.4 808.6h6M1890.4 805.6v6M1908.1 808.6h6M1911.1 805.6v6M379.6 829.2h6M382.6 826.2v6M400.3 829.2h6M403.3 826.2v6M420.9 829.2h6M423.9 826.2v6M441.6 829.2h6M444.6 826.2v6M462.2 829.2h6M465.2 826.2v6M482.9 829.2h6M485.9 826.2v6M503.5 829.2h6M506.5 826.2v6M524.2 829.2h6M527.2 826.2v6M544.8 829.2h6M547.8 826.2v6M565.5 829.2h6M568.5 826.2v6M586.2 829.2h6M589.2 826.2v6M606.8 829.2h6M609.8 826.2v6M627.5 829.2h6M630.5 826.2v6M648.1 829.2h6M651.1 826.2v6M668.8 829.2h6M671.8 826.2v6M689.4 829.2h6M692.4 826.2v6M710.1 829.2h6M713.1 826.2v6M730.7 829.2h6M733.7 826.2v6M751.4 829.2h6M754.4 826.2v6M772.0 829.2h6M775.0 826.2v6M792.7 829.2h6M795.7 826.2v6M813.4 829.2h6M816.4 826.2v6M834.0 829.2h6M837.0 826.2v6M854.7 829.2h6M857.7 826.2v6M875.3 829.2h6M878.3 826.2v6M896.0 829.2h6M899.0 826.2v6M916.6 829.2h6M919.6 826.2v6M937.3 829.2h6M940.3 826.2v6M957.9 829.2h6M960.9 826.2v6M978.6 829.2h6M981.6 826.2v6M999.3 829.2h6M1002.3 826.2v6M1019.9 829.2h6M1022.9 826.2v6M1040.6 829.2h6M1043.6 826.2v6M1061.2 829.2h6M1064.2 826.2v6M1081.9 829.2h6M1084.9 826.2v6M1102.5 829.2h6M1105.5 826.2v6M1123.2 829.2h6M1126.2 826.2v6M1143.8 829.2h6M1146.8 826.2v6M1164.5 829.2h6M1167.5 826.2v6M1185.1 829.2h6M1188.1 826.2v6M1205.8 829.2h6M1208.8 826.2v6M1226.5 829.2h6M1229.5 826.2v6M1247.1 829.2h6M1250.1 826.2v6M1267.8 829.2h6M1270.8 826.2v6M1288.4 829.2h6M1291.4 826.2v6M1309.1 829.2h6M1312.1 826.2v6M1329.7 829.2h6M1332.7 826.2v6M1350.4 829.2h6M1353.4 826.2v6M1371.0 829.2h6M1374.0 826.2v6M1391.7 829.2h6M1394.7 826.2v6M1412.3 829.2h6M1415.3 826.2v6M1433.0 829.2h6M1436.0 826.2v6M1453.7 829.2h6M1456.7 826.2v6M1474.3 829.2h6M1477.3 826.2v6M1495.0 829.2h6M1498.0 826.2v6M1515.6 829.2h6M1518.6 826.2v6M1536.3 829.2h6M1539.3 826.2v6M1556.9 829.2h6M1559.9 826.2v6M1577.6 829.2h6M1580.6 826.2v6M1598.2 829.2h6M1601.2 826.2v6M1618.9 829.2h6M1621.9 826.2v6M1639.6 829.2h6M1642.6 826.2v6M1660.2 829.2h6M1663.2 826.2v6M1680.9 829.2h6M1683.9 826.2v6M1701.5 829.2h6M1704.5 826.2v6M1722.2 829.2h6M1725.2 826.2v6M1742.8 829.2h6M1745.8 826.2v6M1763.5 829.2h6M1766.5 826.2v6M1784.1 829.2h6M1787.1 826.2v6M1804.8 829.2h6M1807.8 826.2v6M1825.5 829.2h6M1828.5 826.2v6M1846.1 829.2h6M1849.1 826.2v6M1866.8 829.2h6M1869.8 826.2v6M1887.4 829.2h6M1890.4 826.2v6M1908.1 829.2h6M1911.1 826.2v6M379.6 849.9h6M382.6 846.9v6M400.3 849.9h6M403.3 846.9v6M420.9 849.9h6M423.9 846.9v6M441.6 849.9h6M444.6 846.9v6M462.2 849.9h6M465.2 846.9v6M482.9 849.9h6M485.9 846.9v6M503.5 849.9h6M506.5 846.9v6M524.2 849.9h6M527.2 846.9v6M544.8 849.9h6M547.8 846.9v6M565.5 849.9h6M568.5 846.9v6M586.2 849.9h6M589.2 846.9v6M606.8 849.9h6M609.8 846.9v6M627.5 849.9h6M630.5 846.9v6M648.1 849.9h6M651.1 846.9v6M668.8 849.9h6M671.8 846.9v6M689.4 849.9h6M692.4 846.9v6M710.1 849.9h6M713.1 846.9v6M730.7 849.9h6M733.7 846.9v6M751.4 849.9h6M754.4 846.9v6M772.0 849.9h6M775.0 846.9v6M792.7 849.9h6M795.7 846.9v6M813.4 849.9h6M816.4 846.9v6M834.0 849.9h6M837.0 846.9v6M854.7 849.9h6M857.7 846.9v6M875.3 849.9h6M878.3 846.9v6M896.0 849.9h6M899.0 846.9v6M916.6 849.9h6M919.6 846.9v6M937.3 849.9h6M940.3 846.9v6M957.9 849.9h6M960.9 846.9v6M978.6 849.9h6M981.6 846.9v6M999.3 849.9h6M1002.3 846.9v6M1019.9 849.9h6M1022.9 846.9v6M1040.6 849.9h6M1043.6 846.9v6M1061.2 849.9h6M1064.2 846.9v6M1081.9 849.9h6M1084.9 846.9v6M1102.5 849.9h6M1105.5 846.9v6M1123.2 849.9h6M1126.2 846.9v6M1143.8 849.9h6M1146.8 846.9v6M1164.5 849.9h6M1167.5 846.9v6M1185.1 849.9h6M1188.1 846.9v6M1205.8 849.9h6M1208.8 846.9v6M1226.5 849.9h6M1229.5 846.9v6M1247.1 849.9h6M1250.1 846.9v6M1267.8 849.9h6M1270.8 846.9v6M1288.4 849.9h6M1291.4 846.9v6M1309.1 849.9h6M1312.1 846.9v6M1329.7 849.9h6M1332.7 846.9v6M1350.4 849.9h6M1353.4 846.9v6M1371.0 849.9h6M1374.0 846.9v6M1391.7 849.9h6M1394.7 846.9v6M1412.3 849.9h6M1415.3 846.9v6M1433.0 849.9h6M1436.0 846.9v6M1453.7 849.9h6M1456.7 846.9v6M1474.3 849.9h6M1477.3 846.9v6M1495.0 849.9h6M1498.0 846.9v6M1515.6 849.9h6M1518.6 846.9v6M1536.3 849.9h6M1539.3 846.9v6M1556.9 849.9h6M1559.9 846.9v6M1577.6 849.9h6M1580.6 846.9v6M1598.2 849.9h6M1601.2 846.9v6M1618.9 849.9h6M1621.9 846.9v6M1639.6 849.9h6M1642.6 846.9v6M1660.2 849.9h6M1663.2 846.9v6M1680.9 849.9h6M1683.9 846.9v6M1701.5 849.9h6M1704.5 846.9v6M1722.2 849.9h6M1725.2 846.9v6M1742.8 849.9h6M1745.8 846.9v6M1763.5 849.9h6M1766.5 846.9v6M1784.1 849.9h6M1787.1 846.9v6M1804.8 849.9h6M1807.8 846.9v6M1825.5 849.9h6M1828.5 846.9v6M1846.1 849.9h6M1849.1 846.9v6M1866.8 849.9h6M1869.8 846.9v6M1887.4 849.9h6M1890.4 846.9v6M1908.1 849.9h6M1911.1 846.9v6M379.6 870.6h6M382.6 867.6v6M400.3 870.6h6M403.3 867.6v6M420.9 870.6h6M423.9 867.6v6M441.6 870.6h6M444.6 867.6v6M462.2 870.6h6M465.2 867.6v6M482.9 870.6h6M485.9 867.6v6M503.5 870.6h6M506.5 867.6v6M524.2 870.6h6M527.2 867.6v6M544.8 870.6h6M547.8 867.6v6M565.5 870.6h6M568.5 867.6v6M586.2 870.6h6M589.2 867.6v6M606.8 870.6h6M609.8 867.6v6M627.5 870.6h6M630.5 867.6v6M648.1 870.6h6M651.1 867.6v6M668.8 870.6h6M671.8 867.6v6M689.4 870.6h6M692.4 867.6v6M710.1 870.6h6M713.1 867.6v6M730.7 870.6h6M733.7 867.6v6M751.4 870.6h6M754.4 867.6v6M772.0 870.6h6M775.0 867.6v6M792.7 870.6h6M795.7 867.6v6M813.4 870.6h6M816.4 867.6v6M834.0 870.6h6M837.0 867.6v6M854.7 870.6h6M857.7 867.6v6M875.3 870.6h6M878.3 867.6v6M896.0 870.6h6M899.0 867.6v6M916.6 870.6h6M919.6 867.6v6M937.3 870.6h6M940.3 867.6v6M957.9 870.6h6M960.9 867.6v6M978.6 870.6h6M981.6 867.6v6M999.3 870.6h6M1002.3 867.6v6M1019.9 870.6h6M1022.9 867.6v6M1040.6 870.6h6M1043.6 867.6v6M1061.2 870.6h6M1064.2 867.6v6M1081.9 870.6h6M1084.9 867.6v6M1102.5 870.6h6M1105.5 867.6v6M1123.2 870.6h6M1126.2 867.6v6M1143.8 870.6h6M1146.8 867.6v6M1164.5 870.6h6M1167.5 867.6v6M1185.1 870.6h6M1188.1 867.6v6M1205.8 870.6h6M1208.8 867.6v6M1226.5 870.6h6M1229.5 867.6v6M1247.1 870.6h6M1250.1 867.6v6M1267.8 870.6h6M1270.8 867.6v6M1288.4 870.6h6M1291.4 867.6v6M1309.1 870.6h6M1312.1 867.6v6M1329.7 870.6h6M1332.7 867.6v6M1350.4 870.6h6M1353.4 867.6v6M1371.0 870.6h6M1374.0 867.6v6M1391.7 870.6h6M1394.7 867.6v6M1412.3 870.6h6M1415.3 867.6v6M1433.0 870.6h6M1436.0 867.6v6M1453.7 870.6h6M1456.7 867.6v6M1474.3 870.6h6M1477.3 867.6v6M1495.0 870.6h6M1498.0 867.6v6M1515.6 870.6h6M1518.6 867.6v6M1536.3 870.6h6M1539.3 867.6v6M1556.9 870.6h6M1559.9 867.6v6M1577.6 870.6h6M1580.6 867.6v6M1598.2 870.6h6M1601.2 867.6v6M1618.9 870.6h6M1621.9 867.6v6M1639.6 870.6h6M1642.6 867.6v6M1660.2 870.6h6M1663.2 867.6v6M1680.9 870.6h6M1683.9 867.6v6M1701.5 870.6h6M1704.5 867.6v6M1722.2 870.6h6M1725.2 867.6v6M1742.8 870.6h6M1745.8 867.6v6M1763.5 870.6h6M1766.5 867.6v6M1784.1 870.6h6M1787.1 867.6v6M1804.8 870.6h6M1807.8 867.6v6M1825.5 870.6h6M1828.5 867.6v6M1846.1 870.6h6M1849.1 867.6v6M1866.8 870.6h6M1869.8 867.6v6M1887.4 870.6h6M1890.4 867.6v6M1908.1 870.6h6M1911.1 867.6v6M379.6 891.2h6M382.6 888.2v6M400.3 891.2h6M403.3 888.2v6M420.9 891.2h6M423.9 888.2v6M441.6 891.2h6M444.6 888.2v6M462.2 891.2h6M465.2 888.2v6M482.9 891.2h6M485.9 888.2v6M503.5 891.2h6M506.5 888.2v6M524.2 891.2h6M527.2 888.2v6M544.8 891.2h6M547.8 888.2v6M565.5 891.2h6M568.5 888.2v6M586.2 891.2h6M589.2 888.2v6M606.8 891.2h6M609.8 888.2v6M627.5 891.2h6M630.5 888.2v6M648.1 891.2h6M651.1 888.2v6M668.8 891.2h6M671.8 888.2v6M689.4 891.2h6M692.4 888.2v6M710.1 891.2h6M713.1 888.2v6M730.7 891.2h6M733.7 888.2v6M751.4 891.2h6M754.4 888.2v6M772.0 891.2h6M775.0 888.2v6M792.7 891.2h6M795.7 888.2v6M813.4 891.2h6M816.4 888.2v6M834.0 891.2h6M837.0 888.2v6M854.7 891.2h6M857.7 888.2v6M875.3 891.2h6M878.3 888.2v6M896.0 891.2h6M899.0 888.2v6M916.6 891.2h6M919.6 888.2v6M937.3 891.2h6M940.3 888.2v6M957.9 891.2h6M960.9 888.2v6M978.6 891.2h6M981.6 888.2v6M999.3 891.2h6M1002.3 888.2v6M1019.9 891.2h6M1022.9 888.2v6M1040.6 891.2h6M1043.6 888.2v6M1061.2 891.2h6M1064.2 888.2v6M1081.9 891.2h6M1084.9 888.2v6M1102.5 891.2h6M1105.5 888.2v6M1123.2 891.2h6M1126.2 888.2v6M1143.8 891.2h6M1146.8 888.2v6M1164.5 891.2h6M1167.5 888.2v6M1185.1 891.2h6M1188.1 888.2v6M1205.8 891.2h6M1208.8 888.2v6M1226.5 891.2h6M1229.5 888.2v6M1247.1 891.2h6M1250.1 888.2v6M1267.8 891.2h6M1270.8 888.2v6M1288.4 891.2h6M1291.4 888.2v6M1309.1 891.2h6M1312.1 888.2v6M1329.7 891.2h6M1332.7 888.2v6M1350.4 891.2h6M1353.4 888.2v6M1371.0 891.2h6M1374.0 888.2v6M1391.7 891.2h6M1394.7 888.2v6M1412.3 891.2h6M1415.3 888.2v6M1433.0 891.2h6M1436.0 888.2v6M1453.7 891.2h6M1456.7 888.2v6M1474.3 891.2h6M1477.3 888.2v6M1495.0 891.2h6M1498.0 888.2v6M1515.6 891.2h6M1518.6 888.2v6M1536.3 891.2h6M1539.3 888.2v6M1556.9 891.2h6M1559.9 888.2v6M1577.6 891.2h6M1580.6 888.2v6M1598.2 891.2h6M1601.2 888.2v6M1618.9 891.2h6M1621.9 888.2v6M1639.6 891.2h6M1642.6 888.2v6M1660.2 891.2h6M1663.2 888.2v6M1680.9 891.2h6M1683.9 888.2v6M1701.5 891.2h6M1704.5 888.2v6M1722.2 891.2h6M1725.2 888.2v6M1742.8 891.2h6M1745.8 888.2v6M1763.5 891.2h6M1766.5 888.2v6M1784.1 891.2h6M1787.1 888.2v6M1804.8 891.2h6M1807.8 888.2v6M1825.5 891.2h6M1828.5 888.2v6M1846.1 891.2h6M1849.1 888.2v6M1866.8 891.2h6M1869.8 888.2v6M1887.4 891.2h6M1890.4 888.2v6M1908.1 891.2h6M1911.1 888.2v6M379.6 911.9h6M382.6 908.9v6M400.3 911.9h6M403.3 908.9v6M420.9 911.9h6M423.9 908.9v6M441.6 911.9h6M444.6 908.9v6M462.2 911.9h6M465.2 908.9v6M482.9 911.9h6M485.9 908.9v6M503.5 911.9h6M506.5 908.9v6M524.2 911.9h6M527.2 908.9v6M544.8 911.9h6M547.8 908.9v6M565.5 911.9h6M568.5 908.9v6M586.2 911.9h6M589.2 908.9v6M606.8 911.9h6M609.8 908.9v6M627.5 911.9h6M630.5 908.9v6M648.1 911.9h6M651.1 908.9v6M668.8 911.9h6M671.8 908.9v6M689.4 911.9h6M692.4 908.9v6M710.1 911.9h6M713.1 908.9v6M730.7 911.9h6M733.7 908.9v6M751.4 911.9h6M754.4 908.9v6M772.0 911.9h6M775.0 908.9v6M792.7 911.9h6M795.7 908.9v6M813.4 911.9h6M816.4 908.9v6M834.0 911.9h6M837.0 908.9v6M854.7 911.9h6M857.7 908.9v6M875.3 911.9h6M878.3 908.9v6M896.0 911.9h6M899.0 908.9v6M916.6 911.9h6M919.6 908.9v6M937.3 911.9h6M940.3 908.9v6M957.9 911.9h6M960.9 908.9v6M978.6 911.9h6M981.6 908.9v6M999.3 911.9h6M1002.3 908.9v6M1019.9 911.9h6M1022.9 908.9v6M1040.6 911.9h6M1043.6 908.9v6M1061.2 911.9h6M1064.2 908.9v6M1081.9 911.9h6M1084.9 908.9v6M1102.5 911.9h6M1105.5 908.9v6M1123.2 911.9h6M1126.2 908.9v6M1143.8 911.9h6M1146.8 908.9v6M1164.5 911.9h6M1167.5 908.9v6M1185.1 911.9h6M1188.1 908.9v6M1205.8 911.9h6M1208.8 908.9v6M1226.5 911.9h6M1229.5 908.9v6M1247.1 911.9h6M1250.1 908.9v6M1267.8 911.9h6M1270.8 908.9v6M1288.4 911.9h6M1291.4 908.9v6M1309.1 911.9h6M1312.1 908.9v6M1329.7 911.9h6M1332.7 908.9v6M1350.4 911.9h6M1353.4 908.9v6M1371.0 911.9h6M1374.0 908.9v6M1391.7 911.9h6M1394.7 908.9v6M1412.3 911.9h6M1415.3 908.9v6M1433.0 911.9h6M1436.0 908.9v6M1453.7 911.9h6M1456.7 908.9v6M1474.3 911.9h6M1477.3 908.9v6M1495.0 911.9h6M1498.0 908.9v6M1515.6 911.9h6M1518.6 908.9v6M1536.3 911.9h6M1539.3 908.9v6M1556.9 911.9h6M1559.9 908.9v6M1577.6 911.9h6M1580.6 908.9v6M1598.2 911.9h6M1601.2 908.9v6M1618.9 911.9h6M1621.9 908.9v6M1639.6 911.9h6M1642.6 908.9v6M1660.2 911.9h6M1663.2 908.9v6M1680.9 911.9h6M1683.9 908.9v6M1701.5 911.9h6M1704.5 908.9v6M1722.2 911.9h6M1725.2 908.9v6M1742.8 911.9h6M1745.8 908.9v6M1763.5 911.9h6M1766.5 908.9v6M1784.1 911.9h6M1787.1 908.9v6M1804.8 911.9h6M1807.8 908.9v6M1825.5 911.9h6M1828.5 908.9v6M1846.1 911.9h6M1849.1 908.9v6M1866.8 911.9h6M1869.8 908.9v6M1887.4 911.9h6M1890.4 908.9v6M1908.1 911.9h6M1911.1 908.9v6M379.6 932.5h6M382.6 929.5v6M400.3 932.5h6M403.3 929.5v6M420.9 932.5h6M423.9 929.5v6M441.6 932.5h6M444.6 929.5v6M462.2 932.5h6M465.2 929.5v6M482.9 932.5h6M485.9 929.5v6M503.5 932.5h6M506.5 929.5v6M524.2 932.5h6M527.2 929.5v6M544.8 932.5h6M547.8 929.5v6M565.5 932.5h6M568.5 929.5v6M586.2 932.5h6M589.2 929.5v6M606.8 932.5h6M609.8 929.5v6M627.5 932.5h6M630.5 929.5v6M648.1 932.5h6M651.1 929.5v6M668.8 932.5h6M671.8 929.5v6M689.4 932.5h6M692.4 929.5v6M710.1 932.5h6M713.1 929.5v6M730.7 932.5h6M733.7 929.5v6M751.4 932.5h6M754.4 929.5v6M772.0 932.5h6M775.0 929.5v6M792.7 932.5h6M795.7 929.5v6M813.4 932.5h6M816.4 929.5v6M834.0 932.5h6M837.0 929.5v6M854.7 932.5h6M857.7 929.5v6M875.3 932.5h6M878.3 929.5v6M896.0 932.5h6M899.0 929.5v6M916.6 932.5h6M919.6 929.5v6M937.3 932.5h6M940.3 929.5v6M957.9 932.5h6M960.9 929.5v6M978.6 932.5h6M981.6 929.5v6M999.3 932.5h6M1002.3 929.5v6M1019.9 932.5h6M1022.9 929.5v6M1040.6 932.5h6M1043.6 929.5v6M1061.2 932.5h6M1064.2 929.5v6M1081.9 932.5h6M1084.9 929.5v6M1102.5 932.5h6M1105.5 929.5v6M1123.2 932.5h6M1126.2 929.5v6M1143.8 932.5h6M1146.8 929.5v6M1164.5 932.5h6M1167.5 929.5v6M1185.1 932.5h6M1188.1 929.5v6M1205.8 932.5h6M1208.8 929.5v6M1226.5 932.5h6M1229.5 929.5v6M1247.1 932.5h6M1250.1 929.5v6M1267.8 932.5h6M1270.8 929.5v6M1288.4 932.5h6M1291.4 929.5v6M1309.1 932.5h6M1312.1 929.5v6M1329.7 932.5h6M1332.7 929.5v6M1350.4 932.5h6M1353.4 929.5v6M1371.0 932.5h6M1374.0 929.5v6M1391.7 932.5h6M1394.7 929.5v6M1412.3 932.5h6M1415.3 929.5v6M1433.0 932.5h6M1436.0 929.5v6M1453.7 932.5h6M1456.7 929.5v6M1474.3 932.5h6M1477.3 929.5v6M1495.0 932.5h6M1498.0 929.5v6M1515.6 932.5h6M1518.6 929.5v6M1536.3 932.5h6M1539.3 929.5v6M1556.9 932.5h6M1559.9 929.5v6M1577.6 932.5h6M1580.6 929.5v6M1598.2 932.5h6M1601.2 929.5v6M1618.9 932.5h6M1621.9 929.5v6M1639.6 932.5h6M1642.6 929.5v6M1660.2 932.5h6M1663.2 929.5v6M1680.9 932.5h6M1683.9 929.5v6M1701.5 932.5h6M1704.5 929.5v6M1722.2 932.5h6M1725.2 929.5v6M1742.8 932.5h6M1745.8 929.5v6M1763.5 932.5h6M1766.5 929.5v6M1784.1 932.5h6M1787.1 929.5v6M1804.8 932.5h6M1807.8 929.5v6M1825.5 932.5h6M1828.5 929.5v6M1846.1 932.5h6M1849.1 929.5v6M1866.8 932.5h6M1869.8 929.5v6M1887.4 932.5h6M1890.4 929.5v6M1908.1 932.5h6M1911.1 929.5v6M379.6 953.2h6M382.6 950.2v6M400.3 953.2h6M403.3 950.2v6M420.9 953.2h6M423.9 950.2v6M441.6 953.2h6M444.6 950.2v6M462.2 953.2h6M465.2 950.2v6M482.9 953.2h6M485.9 950.2v6M503.5 953.2h6M506.5 950.2v6M524.2 953.2h6M527.2 950.2v6M544.8 953.2h6M547.8 950.2v6M565.5 953.2h6M568.5 950.2v6M586.2 953.2h6M589.2 950.2v6M606.8 953.2h6M609.8 950.2v6M627.5 953.2h6M630.5 950.2v6M648.1 953.2h6M651.1 950.2v6M668.8 953.2h6M671.8 950.2v6M689.4 953.2h6M692.4 950.2v6M710.1 953.2h6M713.1 950.2v6M730.7 953.2h6M733.7 950.2v6M751.4 953.2h6M754.4 950.2v6M772.0 953.2h6M775.0 950.2v6M792.7 953.2h6M795.7 950.2v6M813.4 953.2h6M816.4 950.2v6M834.0 953.2h6M837.0 950.2v6M854.7 953.2h6M857.7 950.2v6M875.3 953.2h6M878.3 950.2v6M896.0 953.2h6M899.0 950.2v6M916.6 953.2h6M919.6 950.2v6M937.3 953.2h6M940.3 950.2v6M957.9 953.2h6M960.9 950.2v6M978.6 953.2h6M981.6 950.2v6M999.3 953.2h6M1002.3 950.2v6M1019.9 953.2h6M1022.9 950.2v6M1040.6 953.2h6M1043.6 950.2v6M1061.2 953.2h6M1064.2 950.2v6M1081.9 953.2h6M1084.9 950.2v6M1102.5 953.2h6M1105.5 950.2v6M1123.2 953.2h6M1126.2 950.2v6M1143.8 953.2h6M1146.8 950.2v6M1164.5 953.2h6M1167.5 950.2v6M1185.1 953.2h6M1188.1 950.2v6M1205.8 953.2h6M1208.8 950.2v6M1226.5 953.2h6M1229.5 950.2v6M1247.1 953.2h6M1250.1 950.2v6M1267.8 953.2h6M1270.8 950.2v6M1288.4 953.2h6M1291.4 950.2v6M1309.1 953.2h6M1312.1 950.2v6M1329.7 953.2h6M1332.7 950.2v6M1350.4 953.2h6M1353.4 950.2v6M1371.0 953.2h6M1374.0 950.2v6M1391.7 953.2h6M1394.7 950.2v6M1412.3 953.2h6M1415.3 950.2v6M1433.0 953.2h6M1436.0 950.2v6M1453.7 953.2h6M1456.7 950.2v6M1474.3 953.2h6M1477.3 950.2v6M1495.0 953.2h6M1498.0 950.2v6M1515.6 953.2h6M1518.6 950.2v6M1536.3 953.2h6M1539.3 950.2v6M1556.9 953.2h6M1559.9 950.2v6M1577.6 953.2h6M1580.6 950.2v6M1598.2 953.2h6M1601.2 950.2v6M1618.9 953.2h6M1621.9 950.2v6M1639.6 953.2h6M1642.6 950.2v6M1660.2 953.2h6M1663.2 950.2v6M1680.9 953.2h6M1683.9 950.2v6M1701.5 953.2h6M1704.5 950.2v6M1722.2 953.2h6M1725.2 950.2v6M1742.8 953.2h6M1745.8 950.2v6M1763.5 953.2h6M1766.5 950.2v6M1784.1 953.2h6M1787.1 950.2v6M1804.8 953.2h6M1807.8 950.2v6M1825.5 953.2h6M1828.5 950.2v6M1846.1 953.2h6M1849.1 950.2v6M1866.8 953.2h6M1869.8 950.2v6M1887.4 953.2h6M1890.4 950.2v6M1908.1 953.2h6M1911.1 950.2v6M379.6 973.8h6M382.6 970.8v6M400.3 973.8h6M403.3 970.8v6M420.9 973.8h6M423.9 970.8v6M441.6 973.8h6M444.6 970.8v6M462.2 973.8h6M465.2 970.8v6M482.9 973.8h6M485.9 970.8v6M503.5 973.8h6M506.5 970.8v6M524.2 973.8h6M527.2 970.8v6M544.8 973.8h6M547.8 970.8v6M565.5 973.8h6M568.5 970.8v6M586.2 973.8h6M589.2 970.8v6M606.8 973.8h6M609.8 970.8v6M627.5 973.8h6M630.5 970.8v6M648.1 973.8h6M651.1 970.8v6M668.8 973.8h6M671.8 970.8v6M689.4 973.8h6M692.4 970.8v6M710.1 973.8h6M713.1 970.8v6M730.7 973.8h6M733.7 970.8v6M751.4 973.8h6M754.4 970.8v6M772.0 973.8h6M775.0 970.8v6M792.7 973.8h6M795.7 970.8v6M813.4 973.8h6M816.4 970.8v6M834.0 973.8h6M837.0 970.8v6M854.7 973.8h6M857.7 970.8v6M875.3 973.8h6M878.3 970.8v6M896.0 973.8h6M899.0 970.8v6M916.6 973.8h6M919.6 970.8v6M937.3 973.8h6M940.3 970.8v6M957.9 973.8h6M960.9 970.8v6M978.6 973.8h6M981.6 970.8v6M999.3 973.8h6M1002.3 970.8v6M1019.9 973.8h6M1022.9 970.8v6M1040.6 973.8h6M1043.6 970.8v6M1061.2 973.8h6M1064.2 970.8v6M1081.9 973.8h6M1084.9 970.8v6M1102.5 973.8h6M1105.5 970.8v6M1123.2 973.8h6M1126.2 970.8v6M1143.8 973.8h6M1146.8 970.8v6M1164.5 973.8h6M1167.5 970.8v6M1185.1 973.8h6M1188.1 970.8v6M1205.8 973.8h6M1208.8 970.8v6M1226.5 973.8h6M1229.5 970.8v6M1247.1 973.8h6M1250.1 970.8v6M1267.8 973.8h6M1270.8 970.8v6M1288.4 973.8h6M1291.4 970.8v6M1309.1 973.8h6M1312.1 970.8v6M1329.7 973.8h6M1332.7 970.8v6M1350.4 973.8h6M1353.4 970.8v6M1371.0 973.8h6M1374.0 970.8v6M1391.7 973.8h6M1394.7 970.8v6M1412.3 973.8h6M1415.3 970.8v6M1433.0 973.8h6M1436.0 970.8v6M1453.7 973.8h6M1456.7 970.8v6M1474.3 973.8h6M1477.3 970.8v6M1495.0 973.8h6M1498.0 970.8v6M1515.6 973.8h6M1518.6 970.8v6M1536.3 973.8h6M1539.3 970.8v6M1556.9 973.8h6M1559.9 970.8v6M1577.6 973.8h6M1580.6 970.8v6M1598.2 973.8h6M1601.2 970.8v6M1618.9 973.8h6M1621.9 970.8v6M1639.6 973.8h6M1642.6 970.8v6M1660.2 973.8h6M1663.2 970.8v6M1680.9 973.8h6M1683.9 970.8v6M1701.5 973.8h6M1704.5 970.8v6M1722.2 973.8h6M1725.2 970.8v6M1742.8 973.8h6M1745.8 970.8v6M1763.5 973.8h6M1766.5 970.8v6M1784.1 973.8h6M1787.1 970.8v6M1804.8 973.8h6M1807.8 970.8v6M1825.5 973.8h6M1828.5 970.8v6M1846.1 973.8h6M1849.1 970.8v6M1866.8 973.8h6M1869.8 970.8v6M1887.4 973.8h6M1890.4 970.8v6M1908.1 973.8h6M1911.1 970.8v6M379.6 994.5h6M382.6 991.5v6M400.3 994.5h6M403.3 991.5v6M420.9 994.5h6M423.9 991.5v6M441.6 994.5h6M444.6 991.5v6M462.2 994.5h6M465.2 991.5v6M482.9 994.5h6M485.9 991.5v6M503.5 994.5h6M506.5 991.5v6M524.2 994.5h6M527.2 991.5v6M544.8 994.5h6M547.8 991.5v6M565.5 994.5h6M568.5 991.5v6M586.2 994.5h6M589.2 991.5v6M606.8 994.5h6M609.8 991.5v6M627.5 994.5h6M630.5 991.5v6M648.1 994.5h6M651.1 991.5v6M668.8 994.5h6M671.8 991.5v6M689.4 994.5h6M692.4 991.5v6M710.1 994.5h6M713.1 991.5v6M730.7 994.5h6M733.7 991.5v6M751.4 994.5h6M754.4 991.5v6M772.0 994.5h6M775.0 991.5v6M792.7 994.5h6M795.7 991.5v6M813.4 994.5h6M816.4 991.5v6M834.0 994.5h6M837.0 991.5v6M854.7 994.5h6M857.7 991.5v6M875.3 994.5h6M878.3 991.5v6M896.0 994.5h6M899.0 991.5v6M916.6 994.5h6M919.6 991.5v6M937.3 994.5h6M940.3 991.5v6M957.9 994.5h6M960.9 991.5v6M978.6 994.5h6M981.6 991.5v6M999.3 994.5h6M1002.3 991.5v6M1019.9 994.5h6M1022.9 991.5v6M1040.6 994.5h6M1043.6 991.5v6M1061.2 994.5h6M1064.2 991.5v6M1081.9 994.5h6M1084.9 991.5v6M1102.5 994.5h6M1105.5 991.5v6M1123.2 994.5h6M1126.2 991.5v6M1143.8 994.5h6M1146.8 991.5v6M1164.5 994.5h6M1167.5 991.5v6M1185.1 994.5h6M1188.1 991.5v6M1205.8 994.5h6M1208.8 991.5v6M1226.5 994.5h6M1229.5 991.5v6M1247.1 994.5h6M1250.1 991.5v6M1267.8 994.5h6M1270.8 991.5v6M1288.4 994.5h6M1291.4 991.5v6M1309.1 994.5h6M1312.1 991.5v6M1329.7 994.5h6M1332.7 991.5v6M1350.4 994.5h6M1353.4 991.5v6M1371.0 994.5h6M1374.0 991.5v6M1391.7 994.5h6M1394.7 991.5v6M1412.3 994.5h6M1415.3 991.5v6M1433.0 994.5h6M1436.0 991.5v6M1453.7 994.5h6M1456.7 991.5v6M1474.3 994.5h6M1477.3 991.5v6M1495.0 994.5h6M1498.0 991.5v6M1515.6 994.5h6M1518.6 991.5v6M1536.3 994.5h6M1539.3 991.5v6M1556.9 994.5h6M1559.9 991.5v6M1577.6 994.5h6M1580.6 991.5v6M1598.2 994.5h6M1601.2 991.5v6M1618.9 994.5h6M1621.9 991.5v6M1639.6 994.5h6M1642.6 991.5v6M1660.2 994.5h6M1663.2 991.5v6M1680.9 994.5h6M1683.9 991.5v6M1701.5 994.5h6M1704.5 991.5v6M1722.2 994.5h6M1725.2 991.5v6M1742.8 994.5h6M1745.8 991.5v6M1763.5 994.5h6M1766.5 991.5v6M1784.1 994.5h6M1787.1 991.5v6M1804.8 994.5h6M1807.8 991.5v6M1825.5 994.5h6M1828.5 991.5v6M1846.1 994.5h6M1849.1 991.5v6M1866.8 994.5h6M1869.8 991.5v6M1887.4 994.5h6M1890.4 991.5v6M1908.1 994.5h6M1911.1 991.5v6M379.6 1015.1h6M382.6 1012.1v6M400.3 1015.1h6M403.3 1012.1v6M420.9 1015.1h6M423.9 1012.1v6M441.6 1015.1h6M444.6 1012.1v6M462.2 1015.1h6M465.2 1012.1v6M482.9 1015.1h6M485.9 1012.1v6M503.5 1015.1h6M506.5 1012.1v6M524.2 1015.1h6M527.2 1012.1v6M544.8 1015.1h6M547.8 1012.1v6M565.5 1015.1h6M568.5 1012.1v6M586.2 1015.1h6M589.2 1012.1v6M606.8 1015.1h6M609.8 1012.1v6M627.5 1015.1h6M630.5 1012.1v6M648.1 1015.1h6M651.1 1012.1v6M668.8 1015.1h6M671.8 1012.1v6M689.4 1015.1h6M692.4 1012.1v6M710.1 1015.1h6M713.1 1012.1v6M730.7 1015.1h6M733.7 1012.1v6M751.4 1015.1h6M754.4 1012.1v6M772.0 1015.1h6M775.0 1012.1v6M792.7 1015.1h6M795.7 1012.1v6M813.4 1015.1h6M816.4 1012.1v6M834.0 1015.1h6M837.0 1012.1v6M854.7 1015.1h6M857.7 1012.1v6M875.3 1015.1h6M878.3 1012.1v6M896.0 1015.1h6M899.0 1012.1v6M916.6 1015.1h6M919.6 1012.1v6M937.3 1015.1h6M940.3 1012.1v6M957.9 1015.1h6M960.9 1012.1v6M978.6 1015.1h6M981.6 1012.1v6M999.3 1015.1h6M1002.3 1012.1v6M1019.9 1015.1h6M1022.9 1012.1v6M1040.6 1015.1h6M1043.6 1012.1v6M1061.2 1015.1h6M1064.2 1012.1v6M1081.9 1015.1h6M1084.9 1012.1v6M1102.5 1015.1h6M1105.5 1012.1v6M1123.2 1015.1h6M1126.2 1012.1v6M1143.8 1015.1h6M1146.8 1012.1v6M1164.5 1015.1h6M1167.5 1012.1v6M1185.1 1015.1h6M1188.1 1012.1v6M1205.8 1015.1h6M1208.8 1012.1v6M1226.5 1015.1h6M1229.5 1012.1v6M1247.1 1015.1h6M1250.1 1012.1v6M1267.8 1015.1h6M1270.8 1012.1v6M1288.4 1015.1h6M1291.4 1012.1v6M1309.1 1015.1h6M1312.1 1012.1v6M1329.7 1015.1h6M1332.7 1012.1v6M1350.4 1015.1h6M1353.4 1012.1v6M1371.0 1015.1h6M1374.0 1012.1v6M1391.7 1015.1h6M1394.7 1012.1v6M1412.3 1015.1h6M1415.3 1012.1v6M1433.0 1015.1h6M1436.0 1012.1v6M1453.7 1015.1h6M1456.7 1012.1v6M1474.3 1015.1h6M1477.3 1012.1v6M1495.0 1015.1h6M1498.0 1012.1v6M1515.6 1015.1h6M1518.6 1012.1v6M1536.3 1015.1h6M1539.3 1012.1v6M1556.9 1015.1h6M1559.9 1012.1v6M1577.6 1015.1h6M1580.6 1012.1v6M1598.2 1015.1h6M1601.2 1012.1v6M1618.9 1015.1h6M1621.9 1012.1v6M1639.6 1015.1h6M1642.6 1012.1v6M1660.2 1015.1h6M1663.2 1012.1v6M1680.9 1015.1h6M1683.9 1012.1v6M1701.5 1015.1h6M1704.5 1012.1v6M1722.2 1015.1h6M1725.2 1012.1v6M1742.8 1015.1h6M1745.8 1012.1v6M1763.5 1015.1h6M1766.5 1012.1v6M1784.1 1015.1h6M1787.1 1012.1v6M1804.8 1015.1h6M1807.8 1012.1v6M1825.5 1015.1h6M1828.5 1012.1v6M1846.1 1015.1h6M1849.1 1012.1v6M1866.8 1015.1h6M1869.8 1012.1v6M1887.4 1015.1h6M1890.4 1012.1v6M1908.1 1015.1h6M1911.1 1012.1v6M379.6 1035.8h6M382.6 1032.8v6M400.3 1035.8h6M403.3 1032.8v6M420.9 1035.8h6M423.9 1032.8v6M441.6 1035.8h6M444.6 1032.8v6M462.2 1035.8h6M465.2 1032.8v6M482.9 1035.8h6M485.9 1032.8v6M503.5 1035.8h6M506.5 1032.8v6M524.2 1035.8h6M527.2 1032.8v6M544.8 1035.8h6M547.8 1032.8v6M565.5 1035.8h6M568.5 1032.8v6M586.2 1035.8h6M589.2 1032.8v6M606.8 1035.8h6M609.8 1032.8v6M627.5 1035.8h6M630.5 1032.8v6M648.1 1035.8h6M651.1 1032.8v6M668.8 1035.8h6M671.8 1032.8v6M689.4 1035.8h6M692.4 1032.8v6M710.1 1035.8h6M713.1 1032.8v6M730.7 1035.8h6M733.7 1032.8v6M751.4 1035.8h6M754.4 1032.8v6M772.0 1035.8h6M775.0 1032.8v6M792.7 1035.8h6M795.7 1032.8v6M813.4 1035.8h6M816.4 1032.8v6M834.0 1035.8h6M837.0 1032.8v6M854.7 1035.8h6M857.7 1032.8v6M875.3 1035.8h6M878.3 1032.8v6M896.0 1035.8h6M899.0 1032.8v6M916.6 1035.8h6M919.6 1032.8v6M937.3 1035.8h6M940.3 1032.8v6M957.9 1035.8h6M960.9 1032.8v6M978.6 1035.8h6M981.6 1032.8v6M999.3 1035.8h6M1002.3 1032.8v6M1019.9 1035.8h6M1022.9 1032.8v6M1040.6 1035.8h6M1043.6 1032.8v6M1061.2 1035.8h6M1064.2 1032.8v6M1081.9 1035.8h6M1084.9 1032.8v6M1102.5 1035.8h6M1105.5 1032.8v6M1123.2 1035.8h6M1126.2 1032.8v6M1143.8 1035.8h6M1146.8 1032.8v6M1164.5 1035.8h6M1167.5 1032.8v6M1185.1 1035.8h6M1188.1 1032.8v6M1205.8 1035.8h6M1208.8 1032.8v6M1226.5 1035.8h6M1229.5 1032.8v6M1247.1 1035.8h6M1250.1 1032.8v6M1267.8 1035.8h6M1270.8 1032.8v6M1288.4 1035.8h6M1291.4 1032.8v6M1309.1 1035.8h6M1312.1 1032.8v6M1329.7 1035.8h6M1332.7 1032.8v6M1350.4 1035.8h6M1353.4 1032.8v6M1371.0 1035.8h6M1374.0 1032.8v6M1391.7 1035.8h6M1394.7 1032.8v6M1412.3 1035.8h6M1415.3 1032.8v6M1433.0 1035.8h6M1436.0 1032.8v6M1453.7 1035.8h6M1456.7 1032.8v6M1474.3 1035.8h6M1477.3 1032.8v6M1495.0 1035.8h6M1498.0 1032.8v6M1515.6 1035.8h6M1518.6 1032.8v6M1536.3 1035.8h6M1539.3 1032.8v6M1556.9 1035.8h6M1559.9 1032.8v6M1577.6 1035.8h6M1580.6 1032.8v6M1598.2 1035.8h6M1601.2 1032.8v6M1618.9 1035.8h6M1621.9 1032.8v6M1639.6 1035.8h6M1642.6 1032.8v6M1660.2 1035.8h6M1663.2 1032.8v6M1680.9 1035.8h6M1683.9 1032.8v6M1701.5 1035.8h6M1704.5 1032.8v6M1722.2 1035.8h6M1725.2 1032.8v6M1742.8 1035.8h6M1745.8 1032.8v6M1763.5 1035.8h6M1766.5 1032.8v6M1784.1 1035.8h6M1787.1 1032.8v6M1804.8 1035.8h6M1807.8 1032.8v6M1825.5 1035.8h6M1828.5 1032.8v6M1846.1 1035.8h6M1849.1 1032.8v6M1866.8 1035.8h6M1869.8 1032.8v6M1887.4 1035.8h6M1890.4 1032.8v6M1908.1 1035.8h6M1911.1 1032.8v6" stroke="#cdcdcd" stroke-width="1.25" fill="none"/></svg>
<div style="left:444.4px;top:292px;width:236.59px;height:26px;background:#ffa726;border-top-left-radius:8px"></div>
<div style="left:444.4px;top:317.5px;width:39.1px;height:504.2px;background:#ffa726;"></div>
<div style="left:444.4px;top:821.2px;width:236.59px;height:11.6px;background:#ffa726;border-bottom-left-radius:8px"></div>
<div style="left:454.4px;top:297.1px;font-size:15px;color:#fff;line-height:1;white-space:pre;">when</div>
<div style="left:500.01px;top:296.9px;width:127.26px;height:16.2px;background:#ffdca8;border-radius:4px;"></div>
<div style="left:504.81px;top:297.1px;font-size:15px;color:#000;line-height:1;white-space:pre;">forward_button</div>
<svg style="left:612.27px;top:303.7px;" width="6" height="4" viewBox="0 0 6 4"><path d="M0 0 H6 L3 4Z" fill="#ffa726"/></svg>
<div style="left:632.27px;top:297.1px;font-size:15px;color:#fff;line-height:1;white-space:pre;">.Click</div>
<div style="left:454.4px;top:322.5px;font-size:15px;color:#fff;line-height:1;white-space:pre;">do</div>
<div style="left:482px;top:318px;width:9px;height:9px;background:#ffa726;"></div>
<div style="left:481.3px;top:809.4px;width:11px;height:11.3px;background:#fff;border-bottom-left-radius:10px"></div>
<div style="left:482.5px;top:318px;width:51.5px;height:501.4px;background:#ffab00;border-top-left-radius:8px;border-bottom-left-radius:8px;box-shadow:inset 1px 1px 0 rgba(255,255,255,.35)"></div>
<div style="left:481.5px;top:324px;width:1px;height:489.4px;background:rgba(120,70,0,.22);"></div>
<div style="left:533.5px;top:318px;width:31.5px;height:40.2px;background:#ffab00;"></div>
<div style="left:533.5px;top:410px;width:31.5px;height:42.7px;background:#ffab00;"></div>
<div style="left:533.5px;top:650px;width:31.5px;height:40.8px;background:#ffab00;"></div>
<div style="left:533.5px;top:743.1px;width:31.5px;height:41.25px;background:#ffab00;"></div>
<div style="left:482.5px;top:808.4px;width:82.25px;height:11px;background:#ffab00;border-bottom-left-radius:8px"></div>
<div style="left:533.5px;top:318px;width:31.5px;height:6px;background:#ffab00;"></div>
<svg style="left:492.6px;top:323.8px;" width="16.8" height="16.8" viewBox="0 0 16.8 16.8"><rect x="0.5" y="0.5" width="15.8" height="15.8" rx="3.5" fill="#5e35b1" stroke="rgba(255,255,255,.55)" stroke-width="1"/><path d="M7.20 3.03 L9.60 3.03 L10.03 4.75 L10.75 5.16 L12.45 4.68 L13.65 6.76 L12.38 7.99 L12.38 8.81 L13.65 10.04 L12.45 12.12 L10.75 11.64 L10.03 12.05 L9.60 13.77 L7.20 13.77 L6.77 12.05 L6.05 11.64 L4.35 12.12 L3.15 10.04 L4.42 8.81 L4.42 7.99 L3.15 6.76 L4.35 4.68 L6.05 5.16 L6.77 4.75Z" fill="#ffe3a0"/><circle cx="8.4" cy="8.4" r="1.9" fill="#5e35b1"/></svg>
<div style="left:521px;top:324.3px;font-size:15px;color:#fff;line-height:1;white-space:pre;">if</div>
<div style="left:493px;top:361.05px;font-size:15px;color:#fff;line-height:1;white-space:pre;">then</div>
<div style="left:493px;top:418.8px;font-size:15px;color:#fff;line-height:1;white-space:pre;">else if</div>
<div style="left:493px;top:456.3px;font-size:15px;color:#fff;line-height:1;white-space:pre;">then</div>
<div style="left:493px;top:655.8px;font-size:15px;color:#fff;line-height:1;white-space:pre;">else if</div>
<div style="left:493px;top:694.2px;font-size:15px;color:#fff;line-height:1;white-space:pre;">then</div>
<div style="left:493px;top:751.4px;font-size:15px;color:#fff;line-height:1;white-space:pre;">else if</div>
<div style="left:493px;top:788.8px;font-size:15px;color:#fff;line-height:1;white-space:pre;">then</div>
<svg style="left:556.5px;top:323.3px;" width="9" height="16" viewBox="0 0 9 16"><path d="M9 0 C9 10 0.5 -8 0.5 7.5 S9 5 9 15 Z" fill="#43a047"/><path d="M9 0 C9 10 0.5 -8 0.5 7.5 S9 5 9 15" fill="none" stroke="rgba(255,255,255,.32)" stroke-width="1"/></svg>
<div style="left:565px;top:318.3px;width:307.04px;height:38px;background:#43a047;box-shadow:inset 0 1px 0 rgba(255,255,255,.3),inset 1px 0 0 rgba(255,255,255,.3)"></div>
<svg style="left:573.5px;top:329.3px;" width="9" height="16" viewBox="0 0 9 16"><path d="M9 0 C9 10 0.5 -8 0.5 7.5 S9 5 9 15 Z" fill="#8bc34a"/><path d="M9 0 C9 10 0.5 -8 0.5 7.5 S9 5 9 15" fill="none" stroke="rgba(255,255,255,.32)" stroke-width="1"/></svg>
<div style="left:582px;top:324.3px;width:161.33px;height:27.4px;background:#8bc34a;box-shadow:inset 0 1px 0 rgba(255,255,255,.3),inset 1px 0 0 rgba(255,255,255,.3)"></div>
<div style="left:588px;top:329.7px;width:62.22px;height:16.2px;background:#d1e7b7;border-radius:4px;"></div>
<div style="left:592.8px;top:329.9px;font-size:15px;color:#000;line-height:1;white-space:pre;">Des1</div>
<svg style="left:635.22px;top:336.5px;" width="6" height="4" viewBox="0 0 6 4"><path d="M0 0 H6 L3 4Z" fill="#8bc34a"/></svg>
<div style="left:655.52px;top:329.9px;font-size:15px;color:#fff;line-height:1;white-space:pre;">.</div>
<div style="left:665.22px;top:329.7px;width:71.12px;height:16.2px;background:#d1e7b7;border-radius:4px;"></div>
<div style="left:670.02px;top:329.9px;font-size:15px;color:#000;line-height:1;white-space:pre;">Visible</div>
<svg style="left:721.33px;top:336.5px;" width="6" height="4" viewBox="0 0 6 4"><path d="M0 0 H6 L3 4Z" fill="#8bc34a"/></svg>
<div style="left:747.93px;top:329px;width:35.96px;height:16.2px;background:#b4d9b5;border-radius:4px;"></div>
<div style="left:752.73px;top:329.2px;font-size:15px;color:#000;line-height:1;white-space:pre;">=</div>
<svg style="left:768.89px;top:335.8px;" width="6" height="4" viewBox="0 0 6 4"><path d="M0 0 H6 L3 4Z" fill="#43a047"/></svg>
<svg style="left:787.69px;top:329.3px;" width="9" height="16" viewBox="0 0 9 16"><path d="M9 0 C9 10 0.5 -8 0.5 7.5 S9 5 9 15 Z" fill="#43a047"/><path d="M9 0 C9 10 0.5 -8 0.5 7.5 S9 5 9 15" fill="none" stroke="rgba(255,255,255,.32)" stroke-width="1"/></svg>
<div style="left:796.19px;top:324.3px;width:65.65px;height:28px;background:#43a047;box-shadow: inset 0 0 0 1px rgba(255,255,255,.22)"></div>
<div style="left:801.39px;top:330.2px;width:53.05px;height:16.2px;background:#b4d9b5;border-radius:4px;"></div>
<div style="left:806.19px;top:330.4px;font-size:15px;color:#000;line-height:1;white-space:pre;">true</div>
<svg style="left:839.44px;top:337px;" width="6" height="4" viewBox="0 0 6 4"><path d="M0 0 H6 L3 4Z" fill="#43a047"/></svg>
<div style="left:533.9px;top:357.5px;width:9px;height:9px;background:#ffab00;"></div>
<div style="left:534.4px;top:357.5px;width:229.95px;height:25.9px;background:#388e3c;border-top-left-radius:7px;box-shadow:inset 0 1px 0 rgba(255,255,255,.3)"></div>
<div style="left:544.4px;top:362.4px;font-size:15px;color:#fff;line-height:1;white-space:pre;">set</div>
<div style="left:574.01px;top:362.2px;width:62.22px;height:16.2px;background:#afd2b1;border-radius:4px;"></div>
<div style="left:578.81px;top:362.4px;font-size:15px;color:#000;line-height:1;white-space:pre;">Des1</div>
<svg style="left:621.23px;top:369px;" width="6" height="4" viewBox="0 0 6 4"><path d="M0 0 H6 L3 4Z" fill="#388e3c"/></svg>
<div style="left:641.53px;top:362.4px;font-size:15px;color:#fff;line-height:1;white-space:pre;">.</div>
<div style="left:651.23px;top:362.2px;width:71.12px;height:16.2px;background:#afd2b1;border-radius:4px;"></div>
<div style="left:656.03px;top:362.4px;font-size:15px;color:#000;line-height:1;white-space:pre;">Visible</div>
<svg style="left:707.34px;top:369px;" width="6" height="4" viewBox="0 0 6 4"><path d="M0 0 H6 L3 4Z" fill="#388e3c"/></svg>
<div style="left:732.04px;top:362.4px;font-size:15px;color:#fff;line-height:1;white-space:pre;">to</div>
<svg style="left:755.85px;top:361.5px;" width="9" height="16" viewBox="0 0 9 16"><path d="M9 0 C9 10 0.5 -8 0.5 7.5 S9 5 9 15 Z" fill="#43a047"/><path d="M9 0 C9 10 0.5 -8 0.5 7.5 S9 5 9 15" fill="none" stroke="rgba(255,255,255,.32)" stroke-width="1"/></svg>
<div style="left:764.35px;top:357.5px;width:70.88px;height:25.9px;background:#43a047;box-shadow:inset 0 1px 0 rgba(255,255,255,.3),inset 1px 0 0 rgba(255,255,255,.3)"></div>
<div style="left:769.85px;top:362.2px;width:58.88px;height:16.2px;background:#b4d9b5;border-radius:4px;"></div>
<div style="left:774.65px;top:362.4px;font-size:15px;color:#000;line-height:1;white-space:pre;">false</div>
<svg style="left:813.74px;top:369px;" width="6" height="4" viewBox="0 0 6 4"><path d="M0 0 H6 L3 4Z" fill="#43a047"/></svg>
<div style="left:533.9px;top:383.3px;width:9px;height:9px;background:#388e3c;"></div>
<div style="left:533.2px;top:400px;width:11px;height:11.3px;background:#fff;border-bottom-left-radius:10px"></div>
<div style="left:534.4px;top:383.3px;width:229.95px;height:26.7px;background:#388e3c;border-bottom-left-radius:8px;border-top-left-radius:7px;box-shadow:inset 0 1px 0 rgba(255,255,255,.3)"></div>
<div style="left:544.4px;top:388.2px;font-size:15px;color:#fff;line-height:1;white-space:pre;">set</div>
<div style="left:574.01px;top:388px;width:62.22px;height:16.2px;background:#afd2b1;border-radius:4px;"></div>
<div style="left:578.81px;top:388.2px;font-size:15px;color:#000;line-height:1;white-space:pre;">Des2</div>
<svg style="left:621.23px;top:394.8px;" width="6" height="4" viewBox="0 0 6 4"><path d="M0 0 H6 L3 4Z" fill="#388e3c"/></svg>
<div style="left:641.53px;top:388.2px;font-size:15px;color:#fff;line-height:1;white-space:pre;">.</div>
<div style="left:651.23px;top:388px;width:71.12px;height:16.2px;background:#afd2b1;border-radius:4px;"></div>
<div style="left:656.03px;top:388.2px;font-size:15px;color:#000;line-height:1;white-space:pre;">Visible</div>
<svg style="left:707.34px;top:394.8px;" width="6" height="4" viewBox="0 0 6 4"><path d="M0 0 H6 L3 4Z" fill="#388e3c"/></svg>
<div style="left:732.04px;top:388.2px;font-size:15px;color:#fff;line-height:1;white-space:pre;">to</div>
<svg style="left:755.85px;top:387.3px;" width="9" height="16" viewBox="0 0 9 16"><path d="M9 0 C9 10 0.5 -8 0.5 7.5 S9 5 9 15 Z" fill="#43a047"/><path d="M9 0 C9 10 0.5 -8 0.5 7.5 S9 5 9 15" fill="none" stroke="rgba(255,255,255,.32)" stroke-width="1"/></svg>
<div style="left:764.35px;top:383.3px;width:65.05px;height:26.7px;background:#43a047;box-shadow:inset 0 1px 0 rgba(255,255,255,.3),inset 1px 0 0 rgba(255,255,255,.3)"></div>
<div style="left:769.85px;top:388px;width:53.05px;height:16.2px;background:#b4d9b5;border-radius:4px;"></div>
<div style="left:774.65px;top:388.2px;font-size:15px;color:#000;line-height:1;white-space:pre;">true</div>
<svg style="left:807.9px;top:394.8px;" width="6" height="4" viewBox="0 0 6 4"><path d="M0 0 H6 L3 4Z" fill="#43a047"/></svg>
<svg style="left:556.5px;top:418.3px;" width="9" height="16" viewBox="0 0 9 16"><path d="M9 0 C9 10 0.5 -8 0.5 7.5 S9 5 9 15 Z" fill="#43a047"/><path d="M9 0 C9 10 0.5 -8 0.5 7.5 S9 5 9 15" fill="none" stroke="rgba(255,255,255,.32)" stroke-width="1"/></svg>
<div style="left:565px;top:413.3px;width:307.04px;height:38px;background:#43a047;box-shadow:inset 0 1px 0 rgba(255,255,255,.3),inset 1px 0 0 rgba(255,255,255,.3)"></div>
<svg style="left:573.5px;top:424.3px;" width="9" height="16" viewBox="0 0 9 16"><path d="M9 0 C9 10 0.5 -8 0.5 7.5 S9 5 9 15 Z" fill="#8bc34a"/><path d="M9 0 C9 10 0.5 -8 0.5 7.5 S9 5 9 15" fill="none" stroke="rgba(255,255,255,.32)" stroke-width="1"/></svg>
<div style="left:582px;top:419.3px;width:161.33px;height:27.4px;background:#8bc34a;box-shadow:inset 0 1px 0 rgba(255,255,255,.3),inset 1px 0 0 rgba(255,255,255,.3)"></div>
<div style="left:588px;top:424.7px;width:62.22px;height:16.2px;background:#d1e7b7;border-radius:4px;"></div>
<div style="left:592.8px;top:424.9px;font-size:15px;color:#000;line-height:1;white-space:pre;">Des2</div>
<svg style="left:635.22px;top:431.5px;" width="6" height="4" viewBox="0 0 6 4"><path d="M0 0 H6 L3 4Z" fill="#8bc34a"/></svg>
<div style="left:655.52px;top:424.9px;font-size:15px;color:#fff;line-height:1;white-space:pre;">.</div>
<div style="left:665.22px;top:424.7px;width:71.12px;height:16.2px;background:#d1e7b7;border-radius:4px;"></div>
<div style="left:670.02px;top:424.9px;font-size:15px;color:#000;line-height:1;white-space:pre;">Visible</div>
<svg style="left:721.33px;top:431.5px;" width="6" height="4" viewBox="0 0 6 4"><path d="M0 0 H6 L3 4Z" fill="#8bc34a"/></svg>
<div style="left:747.93px;top:424px;width:35.96px;height:16.2px;background:#b4d9b5;border-radius:4px;"></div>
<div style="left:752.73px;top:424.2px;font-size:15px;color:#000;line-height:1;white-space:pre;">=</div>
<svg style="left:768.89px;top:430.8px;" width="6" height="4" viewBox="0 0 6 4"><path d="M0 0 H6 L3 4Z" fill="#43a047"/></svg>
<svg style="left:787.69px;top:424.3px;" width="9" height="16" viewBox="0 0 9 16"><path d="M9 0 C9 10 0.5 -8 0.5 7.5 S9 5 9 15 Z" fill="#43a047"/><path d="M9 0 C9 10 0.5 -8 0.5 7.5 S9 5 9 15" fill="none" stroke="rgba(255,255,255,.32)" stroke-width="1"/></svg>
<div style="left:796.19px;top:419.3px;width:65.65px;height:28px;background:#43a047;box-shadow: inset 0 0 0 1px rgba(255,255,255,.22)"></div>
<div style="left:801.39px;top:425.2px;width:53.05px;height:16.2px;background:#b4d9b5;border-radius:4px;"></div>
<div style="left:806.19px;top:425.4px;font-size:15px;color:#000;line-height:1;white-space:pre;">true</div>
<svg style="left:839.44px;top:432px;" width="6" height="4" viewBox="0 0 6 4"><path d="M0 0 H6 L3 4Z" fill="#43a047"/></svg>
<div style="left:533.25px;top:452px;width:9px;height:9px;background:#ffab00;"></div>
<div style="left:532.55px;top:637.3px;width:11px;height:11.3px;background:#fff;border-bottom-left-radius:10px"></div>
<div style="left:533.75px;top:452px;width:51.5px;height:195.3px;background:#ffab00;border-top-left-radius:8px;border-bottom-left-radius:8px;box-shadow:inset 1px 1px 0 rgba(255,255,255,.35)"></div>
<div style="left:532.75px;top:458px;width:1px;height:183.3px;background:rgba(120,70,0,.22);"></div>
<div style="left:584.75px;top:452px;width:31.5px;height:39.3px;background:#ffab00;"></div>
<div style="left:533.75px;top:634.9px;width:82.25px;height:12.4px;background:#ffab00;border-bottom-left-radius:8px"></div>
<div style="left:584.75px;top:452px;width:31.5px;height:6px;background:#ffab00;"></div>
<svg style="left:544px;top:457px;" width="16.8" height="16.8" viewBox="0 0 16.8 16.8"><rect x="0.5" y="0.5" width="15.8" height="15.8" rx="3.5" fill="#5e35b1" stroke="rgba(255,255,255,.55)" stroke-width="1"/><path d="M7.20 3.03 L9.60 3.03 L10.03 4.75 L10.75 5.16 L12.45 4.68 L13.65 6.76 L12.38 7.99 L12.38 8.81 L13.65 10.04 L12.45 12.12 L10.75 11.64 L10.03 12.05 L9.60 13.77 L7.20 13.77 L6.77 12.05 L6.05 11.64 L4.35 12.12 L3.15 10.04 L4.42 8.81 L4.42 7.99 L3.15 6.76 L4.35 4.68 L6.05 5.16 L6.77 4.75Z" fill="#ffe3a0"/><circle cx="8.4" cy="8.4" r="1.9" fill="#5e35b1"/></svg>
<div style="left:571.9px;top:458.3px;font-size:15px;color:#fff;line-height:1;white-space:pre;">if</div>
<div style="left:544.4px;top:494.2px;font-size:15px;color:#fff;line-height:1;white-space:pre;">then</div>
<svg style="left:607.75px;top:457.5px;" width="9" height="16" viewBox="0 0 9 16"><path d="M9 0 C9 10 0.5 -8 0.5 7.5 S9 5 9 15 Z" fill="#43a047"/><path d="M9 0 C9 10 0.5 -8 0.5 7.5 S9 5 9 15" fill="none" stroke="rgba(255,255,255,.32)" stroke-width="1"/></svg>
<div style="left:616.25px;top:452.5px;width:324.44px;height:37px;background:#43a047;box-shadow:inset 0 1px 0 rgba(255,255,255,.3),inset 1px 0 0 rgba(255,255,255,.3)"></div>
<svg style="left:624.75px;top:463.5px;" width="9" height="16" viewBox="0 0 9 16"><path d="M9 0 C9 10 0.5 -8 0.5 7.5 S9 5 9 15 Z" fill="#8bc34a"/><path d="M9 0 C9 10 0.5 -8 0.5 7.5 S9 5 9 15" fill="none" stroke="rgba(255,255,255,.32)" stroke-width="1"/></svg>
<div style="left:633.25px;top:458.5px;width:196.65px;height:26.4px;background:#8bc34a;box-shadow:inset 0 1px 0 rgba(255,255,255,.3),inset 1px 0 0 rgba(255,255,255,.3)"></div>
<div style="left:639.25px;top:463.4px;width:131.45px;height:16.2px;background:#d1e7b7;border-radius:4px;"></div>
<div style="left:644.05px;top:463.6px;font-size:15px;color:#000;line-height:1;white-space:pre;">e2_white_pawn</div>
<svg style="left:755.7px;top:470.2px;" width="6" height="4" viewBox="0 0 6 4"><path d="M0 0 H6 L3 4Z" fill="#8bc34a"/></svg>
<div style="left:776px;top:463.6px;font-size:15px;color:#fff;line-height:1;white-space:pre;">.</div>
<div style="left:785.7px;top:463.4px;width:37.2px;height:16.2px;background:#d1e7b7;border-radius:4px;"></div>
<div style="left:790.5px;top:463.6px;font-size:15px;color:#000;line-height:1;white-space:pre;">Y</div>
<svg style="left:807.9px;top:470.2px;" width="6" height="4" viewBox="0 0 6 4"><path d="M0 0 H6 L3 4Z" fill="#8bc34a"/></svg>
<div style="left:834.5px;top:463.2px;width:35.96px;height:16.2px;background:#b4d9b5;border-radius:4px;"></div>
<div style="left:839.3px;top:463.4px;font-size:15px;color:#000;line-height:1;white-space:pre;">=</div>
<svg style="left:855.46px;top:470px;" width="6" height="4" viewBox="0 0 6 4"><path d="M0 0 H6 L3 4Z" fill="#43a047"/></svg>
<svg style="left:874.26px;top:463.5px;" width="9" height="16" viewBox="0 0 9 16"><path d="M9 0 C9 10 0.5 -8 0.5 7.5 S9 5 9 15 Z" fill="#3949ab"/><path d="M9 0 C9 10 0.5 -8 0.5 7.5 S9 5 9 15" fill="none" stroke="rgba(255,255,255,.32)" stroke-width="1"/></svg>
<div style="left:882.76px;top:458.5px;width:47.73px;height:26px;background:#3949ab;box-shadow:inset 0 1px 0 rgba(255,255,255,.3),inset 1px 0 0 rgba(255,255,255,.3)"></div>
<div style="left:888.06px;top:463.35px;width:35.53px;height:16.3px;background:#b0b6dd;border-radius:4px;"></div>
<div style="left:893.16px;top:463.55px;font-size:15px;color:#000;line-height:1;white-space:pre;">267</div>
<div style="left:584.5px;top:490.6px;width:9px;height:9px;background:#ffab00;"></div>
<div style="left:585px;top:490.6px;width:258.33px;height:26.4px;background:#388e3c;border-top-left-radius:7px;box-shadow:inset 0 1px 0 rgba(255,255,255,.3)"></div>
<div style="left:595px;top:495.5px;font-size:15px;color:#fff;line-height:1;white-space:pre;">set</div>
<div style="left:624.61px;top:495.3px;width:90.59px;height:16.2px;background:#afd2b1;border-radius:4px;"></div>
<div style="left:629.41px;top:495.5px;font-size:15px;color:#000;line-height:1;white-space:pre;">e2_green</div>
<svg style="left:700.2px;top:502.1px;" width="6" height="4" viewBox="0 0 6 4"><path d="M0 0 H6 L3 4Z" fill="#388e3c"/></svg>
<div style="left:720.5px;top:495.5px;font-size:15px;color:#fff;line-height:1;white-space:pre;">.</div>
<div style="left:730.2px;top:495.3px;width:71.12px;height:16.2px;background:#afd2b1;border-radius:4px;"></div>
<div style="left:735px;top:495.5px;font-size:15px;color:#000;line-height:1;white-space:pre;">Visible</div>
<svg style="left:786.32px;top:502.1px;" width="6" height="4" viewBox="0 0 6 4"><path d="M0 0 H6 L3 4Z" fill="#388e3c"/></svg>
<div style="left:811.02px;top:495.5px;font-size:15px;color:#fff;line-height:1;white-space:pre;">to</div>
<svg style="left:834.83px;top:494.6px;" width="9" height="16" viewBox="0 0 9 16"><path d="M9 0 C9 10 0.5 -8 0.5 7.5 S9 5 9 15 Z" fill="#43a047"/><path d="M9 0 C9 10 0.5 -8 0.5 7.5 S9 5 9 15" fill="none" stroke="rgba(255,255,255,.32)" stroke-width="1"/></svg>
<div style="left:843.33px;top:490.6px;width:65.05px;height:26.4px;background:#43a047;box-shadow:inset 0 1px 0 rgba(255,255,255,.3),inset 1px 0 0 rgba(255,255,255,.3)"></div>
<div style="left:848.83px;top:495.3px;width:53.05px;height:16.2px;background:#b4d9b5;border-radius:4px;"></div>
<div style="left:853.63px;top:495.5px;font-size:15px;color:#000;line-height:1;white-space:pre;">true</div>
<svg style="left:886.87px;top:502.1px;" width="6" height="4" viewBox="0 0 6 4"><path d="M0 0 H6 L3 4Z" fill="#43a047"/></svg>
<div style="left:584.5px;top:516.9px;width:9px;height:9px;background:#388e3c;"></div>
<div style="left:585px;top:516.9px;width:258.33px;height:27px;background:#388e3c;border-top-left-radius:7px;box-shadow:inset 0 1px 0 rgba(255,255,255,.3)"></div>
<div style="left:595px;top:521.8px;font-size:15px;color:#fff;line-height:1;white-space:pre;">set</div>
<div style="left:624.61px;top:521.6px;width:90.59px;height:16.2px;background:#afd2b1;border-radius:4px;"></div>
<div style="left:629.41px;top:521.8px;font-size:15px;color:#000;line-height:1;white-space:pre;">e4_green</div>
<svg style="left:700.2px;top:528.4px;" width="6" height="4" viewBox="0 0 6 4"><path d="M0 0 H6 L3 4Z" fill="#388e3c"/></svg>
<div style="left:720.5px;top:521.8px;font-size:15px;color:#fff;line-height:1;white-space:pre;">.</div>
<div style="left:730.2px;top:521.6px;width:71.12px;height:16.2px;background:#afd2b1;border-radius:4px;"></div>
<div style="left:735px;top:521.8px;font-size:15px;color:#000;line-height:1;white-space:pre;">Visible</div>
<svg style="left:786.32px;top:528.4px;" width="6" height="4" viewBox="0 0 6 4"><path d="M0 0 H6 L3 4Z" fill="#388e3c"/></svg>
<div style="left:811.02px;top:521.8px;font-size:15px;color:#fff;line-height:1;white-space:pre;">to</div>
<svg style="left:834.83px;top:520.9px;" width="9" height="16" viewBox="0 0 9 16"><path d="M9 0 C9 10 0.5 -8 0.5 7.5 S9 5 9 15 Z" fill="#43a047"/><path d="M9 0 C9 10 0.5 -8 0.5 7.5 S9 5 9 15" fill="none" stroke="rgba(255,255,255,.32)" stroke-width="1"/></svg>
<div style="left:843.33px;top:516.9px;width:65.05px;height:27px;background:#43a047;box-shadow:inset 0 1px 0 rgba(255,255,255,.3),inset 1px 0 0 rgba(255,255,255,.3)"></div>
<div style="left:848.83px;top:521.6px;width:53.05px;height:16.2px;background:#b4d9b5;border-radius:4px;"></div>
<div style="left:853.63px;top:521.8px;font-size:15px;color:#000;line-height:1;white-space:pre;">true</div>
<svg style="left:886.87px;top:528.4px;" width="6" height="4" viewBox="0 0 6 4"><path d="M0 0 H6 L3 4Z" fill="#43a047"/></svg>
<div style="left:584.6px;top:543.8px;width:9px;height:9px;background:#388e3c;"></div>
<div style="left:583.9px;top:624.9px;width:11px;height:11.3px;background:#fff;border-bottom-left-radius:10px"></div>
<div style="left:585.1px;top:543.8px;width:260.5px;height:91.1px;background:#5e35b1;border-top-left-radius:7px;border-bottom-left-radius:8px;box-shadow:inset 0 1px 0 rgba(255,255,255,.3)"></div>
<div style="left:595.6px;top:548.75px;font-size:15px;color:#fff;line-height:1;white-space:pre;">call</div>
<div style="left:627.51px;top:548.55px;width:131.45px;height:16.2px;background:#bfaee0;border-radius:4px;"></div>
<div style="left:632.31px;top:548.75px;font-size:15px;color:#000;line-height:1;white-space:pre;">e2_white_pawn</div>
<svg style="left:743.95px;top:555.35px;" width="6" height="4" viewBox="0 0 6 4"><path d="M0 0 H6 L3 4Z" fill="#5e35b1"/></svg>
<div style="left:764.95px;top:548.75px;font-size:15px;color:#fff;line-height:1;white-space:pre;">.Move To</div>
<div style="left:818.2px;top:574.9px;font-size:15px;color:#fff;line-height:1;white-space:pre;font-weight:bold;">x</div>
<div style="left:818.6px;top:602px;font-size:15px;color:#fff;line-height:1;white-space:pre;font-weight:bold;">y</div>
<svg style="left:837.6px;top:574.7px;" width="9" height="16" viewBox="0 0 9 16"><path d="M9 0 C9 10 0.5 -8 0.5 7.5 S9 5 9 15 Z" fill="#8bc34a"/><path d="M9 0 C9 10 0.5 -8 0.5 7.5 S9 5 9 15" fill="none" stroke="rgba(255,255,255,.32)" stroke-width="1"/></svg>
<div style="left:846.1px;top:569.7px;width:195.05px;height:25.8px;background:#8bc34a;box-shadow:inset 0 1px 0 rgba(255,255,255,.3),inset 1px 0 0 rgba(255,255,255,.3)"></div>
<div style="left:851.3px;top:574.3px;width:131.45px;height:16.2px;background:#d1e7b7;border-radius:4px;"></div>
<div style="left:856.1px;top:574.5px;font-size:15px;color:#000;line-height:1;white-space:pre;">e2_white_pawn</div>
<svg style="left:967.75px;top:581.1px;" width="6" height="4" viewBox="0 0 6 4"><path d="M0 0 H6 L3 4Z" fill="#8bc34a"/></svg>
<div style="left:988.05px;top:574.5px;font-size:15px;color:#fff;line-height:1;white-space:pre;">.</div>
<div style="left:997.75px;top:574.3px;width:37.2px;height:16.2px;background:#d1e7b7;border-radius:4px;"></div>
<div style="left:1002.55px;top:574.5px;font-size:15px;color:#000;line-height:1;white-space:pre;">X</div>
<svg style="left:1019.95px;top:581.1px;" width="6" height="4" viewBox="0 0 6 4"><path d="M0 0 H6 L3 4Z" fill="#8bc34a"/></svg>
<svg style="left:837.5px;top:601.8px;" width="9" height="16" viewBox="0 0 9 16"><path d="M9 0 C9 10 0.5 -8 0.5 7.5 S9 5 9 15 Z" fill="#3949ab"/><path d="M9 0 C9 10 0.5 -8 0.5 7.5 S9 5 9 15" fill="none" stroke="rgba(255,255,255,.32)" stroke-width="1"/></svg>
<div style="left:846px;top:595.8px;width:295.8px;height:38.8px;background:#3949ab;box-shadow:inset 0 1px 0 rgba(255,255,255,.3)"></div>
<svg style="left:854.1px;top:607.8px;" width="9" height="16" viewBox="0 0 9 16"><path d="M9 0 C9 10 0.5 -8 0.5 7.5 S9 5 9 15 Z" fill="#8bc34a"/><path d="M9 0 C9 10 0.5 -8 0.5 7.5 S9 5 9 15" fill="none" stroke="rgba(255,255,255,.32)" stroke-width="1"/></svg>
<div style="left:862.6px;top:602.8px;width:196.65px;height:27px;background:#8bc34a;box-shadow:inset 0 1px 0 rgba(255,255,255,.3),inset 1px 0 0 rgba(255,255,255,.3)"></div>
<div style="left:868.6px;top:608px;width:131.45px;height:16.2px;background:#d1e7b7;border-radius:4px;"></div>
<div style="left:873.4px;top:608.2px;font-size:15px;color:#000;line-height:1;white-space:pre;">e2_white_pawn</div>
<svg style="left:985.05px;top:614.8px;" width="6" height="4" viewBox="0 0 6 4"><path d="M0 0 H6 L3 4Z" fill="#8bc34a"/></svg>
<div style="left:1005.35px;top:608.2px;font-size:15px;color:#fff;line-height:1;white-space:pre;">.</div>
<div style="left:1015.05px;top:608px;width:37.2px;height:16.2px;background:#d1e7b7;border-radius:4px;"></div>
<div style="left:1019.85px;top:608.2px;font-size:15px;color:#000;line-height:1;white-space:pre;">Y</div>
<svg style="left:1037.25px;top:614.8px;" width="6" height="4" viewBox="0 0 6 4"><path d="M0 0 H6 L3 4Z" fill="#8bc34a"/></svg>
<div style="left:1069.4px;top:608.8px;font-size:15px;color:#fff;line-height:1;white-space:pre;">-</div>
<svg style="left:1083.5px;top:607.8px;" width="9" height="16" viewBox="0 0 9 16"><path d="M9 0 C9 10 0.5 -8 0.5 7.5 S9 5 9 15 Z" fill="#3949ab"/><path d="M9 0 C9 10 0.5 -8 0.5 7.5 S9 5 9 15" fill="none" stroke="rgba(255,255,255,.32)" stroke-width="1"/></svg>
<div style="left:1092px;top:602.8px;width:39.38px;height:27.5px;background:#3949ab;box-shadow: inset 0 0 0 1px rgba(255,255,255,.22)"></div>
<div style="left:1097.3px;top:608.4px;width:27.18px;height:16.3px;background:#b0b6dd;border-radius:4px;"></div>
<div style="left:1102.4px;top:608.6px;font-size:15px;color:#000;line-height:1;white-space:pre;">92</div>
<svg style="left:556.5px;top:656.25px;" width="9" height="16" viewBox="0 0 9 16"><path d="M9 0 C9 10 0.5 -8 0.5 7.5 S9 5 9 15 Z" fill="#43a047"/><path d="M9 0 C9 10 0.5 -8 0.5 7.5 S9 5 9 15" fill="none" stroke="rgba(255,255,255,.32)" stroke-width="1"/></svg>
<div style="left:565px;top:651.25px;width:307.04px;height:37.5px;background:#43a047;box-shadow:inset 0 1px 0 rgba(255,255,255,.3),inset 1px 0 0 rgba(255,255,255,.3)"></div>
<svg style="left:573.5px;top:662.25px;" width="9" height="16" viewBox="0 0 9 16"><path d="M9 0 C9 10 0.5 -8 0.5 7.5 S9 5 9 15 Z" fill="#8bc34a"/><path d="M9 0 C9 10 0.5 -8 0.5 7.5 S9 5 9 15" fill="none" stroke="rgba(255,255,255,.32)" stroke-width="1"/></svg>
<div style="left:582px;top:657.25px;width:161.33px;height:26.9px;background:#8bc34a;box-shadow:inset 0 1px 0 rgba(255,255,255,.3),inset 1px 0 0 rgba(255,255,255,.3)"></div>
<div style="left:588px;top:662.4px;width:62.22px;height:16.2px;background:#d1e7b7;border-radius:4px;"></div>
<div style="left:592.8px;top:662.6px;font-size:15px;color:#000;line-height:1;white-space:pre;">Des3</div>
<svg style="left:635.22px;top:669.2px;" width="6" height="4" viewBox="0 0 6 4"><path d="M0 0 H6 L3 4Z" fill="#8bc34a"/></svg>
<div style="left:655.52px;top:662.6px;font-size:15px;color:#fff;line-height:1;white-space:pre;">.</div>
<div style="left:665.22px;top:662.4px;width:71.12px;height:16.2px;background:#d1e7b7;border-radius:4px;"></div>
<div style="left:670.02px;top:662.6px;font-size:15px;color:#000;line-height:1;white-space:pre;">Visible</div>
<svg style="left:721.33px;top:669.2px;" width="6" height="4" viewBox="0 0 6 4"><path d="M0 0 H6 L3 4Z" fill="#8bc34a"/></svg>
<div style="left:747.93px;top:661.95px;width:35.96px;height:16.2px;background:#b4d9b5;border-radius:4px;"></div>
<div style="left:752.73px;top:662.15px;font-size:15px;color:#000;line-height:1;white-space:pre;">=</div>
<svg style="left:768.89px;top:668.75px;" width="6" height="4" viewBox="0 0 6 4"><path d="M0 0 H6 L3 4Z" fill="#43a047"/></svg>
<svg style="left:787.69px;top:662.25px;" width="9" height="16" viewBox="0 0 9 16"><path d="M9 0 C9 10 0.5 -8 0.5 7.5 S9 5 9 15 Z" fill="#43a047"/><path d="M9 0 C9 10 0.5 -8 0.5 7.5 S9 5 9 15" fill="none" stroke="rgba(255,255,255,.32)" stroke-width="1"/></svg>
<div style="left:796.19px;top:657.25px;width:65.65px;height:27.5px;background:#43a047;box-shadow: inset 0 0 0 1px rgba(255,255,255,.22)"></div>
<div style="left:801.39px;top:662.9px;width:53.05px;height:16.2px;background:#b4d9b5;border-radius:4px;"></div>
<div style="left:806.19px;top:663.1px;font-size:15px;color:#000;line-height:1;white-space:pre;">true</div>
<svg style="left:839.44px;top:669.7px;" width="6" height="4" viewBox="0 0 6 4"><path d="M0 0 H6 L3 4Z" fill="#43a047"/></svg>
<div style="left:533.9px;top:690px;width:9px;height:9px;background:#ffab00;"></div>
<div style="left:534.4px;top:690px;width:229.95px;height:25.7px;background:#388e3c;border-top-left-radius:7px;box-shadow:inset 0 1px 0 rgba(255,255,255,.3)"></div>
<div style="left:544.4px;top:694.9px;font-size:15px;color:#fff;line-height:1;white-space:pre;">set</div>
<div style="left:574.01px;top:694.7px;width:62.22px;height:16.2px;background:#afd2b1;border-radius:4px;"></div>
<div style="left:578.81px;top:694.9px;font-size:15px;color:#000;line-height:1;white-space:pre;">Des3</div>
<svg style="left:621.23px;top:701.5px;" width="6" height="4" viewBox="0 0 6 4"><path d="M0 0 H6 L3 4Z" fill="#388e3c"/></svg>
<div style="left:641.53px;top:694.9px;font-size:15px;color:#fff;line-height:1;white-space:pre;">.</div>
<div style="left:651.23px;top:694.7px;width:71.12px;height:16.2px;background:#afd2b1;border-radius:4px;"></div>
<div style="left:656.03px;top:694.9px;font-size:15px;color:#000;line-height:1;white-space:pre;">Visible</div>
<svg style="left:707.34px;top:701.5px;" width="6" height="4" viewBox="0 0 6 4"><path d="M0 0 H6 L3 4Z" fill="#388e3c"/></svg>
<div style="left:732.04px;top:694.9px;font-size:15px;color:#fff;line-height:1;white-space:pre;">to</div>
<svg style="left:755.85px;top:694px;" width="9" height="16" viewBox="0 0 9 16"><path d="M9 0 C9 10 0.5 -8 0.5 7.5 S9 5 9 15 Z" fill="#43a047"/><path d="M9 0 C9 10 0.5 -8 0.5 7.5 S9 5 9 15" fill="none" stroke="rgba(255,255,255,.32)" stroke-width="1"/></svg>
<div style="left:764.35px;top:690px;width:70.88px;height:25.7px;background:#43a047;box-shadow:inset 0 1px 0 rgba(255,255,255,.3),inset 1px 0 0 rgba(255,255,255,.3)"></div>
<div style="left:769.85px;top:694.7px;width:58.88px;height:16.2px;background:#b4d9b5;border-radius:4px;"></div>
<div style="left:774.65px;top:694.9px;font-size:15px;color:#000;line-height:1;white-space:pre;">false</div>
<svg style="left:813.74px;top:701.5px;" width="6" height="4" viewBox="0 0 6 4"><path d="M0 0 H6 L3 4Z" fill="#43a047"/></svg>
<div style="left:533.9px;top:715.6px;width:9px;height:9px;background:#388e3c;"></div>
<div style="left:533.2px;top:733.1px;width:11px;height:11.3px;background:#fff;border-bottom-left-radius:10px"></div>
<div style="left:534.4px;top:715.6px;width:229.95px;height:27.5px;background:#388e3c;border-bottom-left-radius:8px;border-top-left-radius:7px;box-shadow:inset 0 1px 0 rgba(255,255,255,.3)"></div>
<div style="left:544.4px;top:720.5px;font-size:15px;color:#fff;line-height:1;white-space:pre;">set</div>
<div style="left:574.01px;top:720.3px;width:62.22px;height:16.2px;background:#afd2b1;border-radius:4px;"></div>
<div style="left:578.81px;top:720.5px;font-size:15px;color:#000;line-height:1;white-space:pre;">Des4</div>
<svg style="left:621.23px;top:727.1px;" width="6" height="4" viewBox="0 0 6 4"><path d="M0 0 H6 L3 4Z" fill="#388e3c"/></svg>
<div style="left:641.53px;top:720.5px;font-size:15px;color:#fff;line-height:1;white-space:pre;">.</div>
<div style="left:651.23px;top:720.3px;width:71.12px;height:16.2px;background:#afd2b1;border-radius:4px;"></div>
<div style="left:656.03px;top:720.5px;font-size:15px;color:#000;line-height:1;white-space:pre;">Visible</div>
<svg style="left:707.34px;top:727.1px;" width="6" height="4" viewBox="0 0 6 4"><path d="M0 0 H6 L3 4Z" fill="#388e3c"/></svg>
<div style="left:732.04px;top:720.5px;font-size:15px;color:#fff;line-height:1;white-space:pre;">to</div>
<svg style="left:755.85px;top:719.6px;" width="9" height="16" viewBox="0 0 9 16"><path d="M9 0 C9 10 0.5 -8 0.5 7.5 S9 5 9 15 Z" fill="#43a047"/><path d="M9 0 C9 10 0.5 -8 0.5 7.5 S9 5 9 15" fill="none" stroke="rgba(255,255,255,.32)" stroke-width="1"/></svg>
<div style="left:764.35px;top:715.6px;width:65.05px;height:27.5px;background:#43a047;box-shadow:inset 0 1px 0 rgba(255,255,255,.3),inset 1px 0 0 rgba(255,255,255,.3)"></div>
<div style="left:769.85px;top:720.3px;width:53.05px;height:16.2px;background:#b4d9b5;border-radius:4px;"></div>
<div style="left:774.65px;top:720.5px;font-size:15px;color:#000;line-height:1;white-space:pre;">true</div>
<svg style="left:807.9px;top:727.1px;" width="6" height="4" viewBox="0 0 6 4"><path d="M0 0 H6 L3 4Z" fill="#43a047"/></svg>
<svg style="left:556.5px;top:751.9px;" width="9" height="16" viewBox="0 0 9 16"><path d="M9 0 C9 10 0.5 -8 0.5 7.5 S9 5 9 15 Z" fill="#43a047"/><path d="M9 0 C9 10 0.5 -8 0.5 7.5 S9 5 9 15" fill="none" stroke="rgba(255,255,255,.32)" stroke-width="1"/></svg>
<div style="left:565px;top:746.9px;width:307.04px;height:36.9px;background:#43a047;box-shadow:inset 0 1px 0 rgba(255,255,255,.3),inset 1px 0 0 rgba(255,255,255,.3)"></div>
<svg style="left:573.5px;top:757.9px;" width="9" height="16" viewBox="0 0 9 16"><path d="M9 0 C9 10 0.5 -8 0.5 7.5 S9 5 9 15 Z" fill="#8bc34a"/><path d="M9 0 C9 10 0.5 -8 0.5 7.5 S9 5 9 15" fill="none" stroke="rgba(255,255,255,.32)" stroke-width="1"/></svg>
<div style="left:582px;top:752.9px;width:161.33px;height:26.3px;background:#8bc34a;box-shadow:inset 0 1px 0 rgba(255,255,255,.3),inset 1px 0 0 rgba(255,255,255,.3)"></div>
<div style="left:588px;top:757.75px;width:62.22px;height:16.2px;background:#d1e7b7;border-radius:4px;"></div>
<div style="left:592.8px;top:757.95px;font-size:15px;color:#000;line-height:1;white-space:pre;">Des4</div>
<svg style="left:635.22px;top:764.55px;" width="6" height="4" viewBox="0 0 6 4"><path d="M0 0 H6 L3 4Z" fill="#8bc34a"/></svg>
<div style="left:655.52px;top:757.95px;font-size:15px;color:#fff;line-height:1;white-space:pre;">.</div>
<div style="left:665.22px;top:757.75px;width:71.12px;height:16.2px;background:#d1e7b7;border-radius:4px;"></div>
<div style="left:670.02px;top:757.95px;font-size:15px;color:#000;line-height:1;white-space:pre;">Visible</div>
<svg style="left:721.33px;top:764.55px;" width="6" height="4" viewBox="0 0 6 4"><path d="M0 0 H6 L3 4Z" fill="#8bc34a"/></svg>
<div style="left:747.93px;top:757.6px;width:35.96px;height:16.2px;background:#b4d9b5;border-radius:4px;"></div>
<div style="left:752.73px;top:757.8px;font-size:15px;color:#000;line-height:1;white-space:pre;">=</div>
<svg style="left:768.89px;top:764.4px;" width="6" height="4" viewBox="0 0 6 4"><path d="M0 0 H6 L3 4Z" fill="#43a047"/></svg>
<svg style="left:787.69px;top:757.9px;" width="9" height="16" viewBox="0 0 9 16"><path d="M9 0 C9 10 0.5 -8 0.5 7.5 S9 5 9 15 Z" fill="#43a047"/><path d="M9 0 C9 10 0.5 -8 0.5 7.5 S9 5 9 15" fill="none" stroke="rgba(255,255,255,.32)" stroke-width="1"/></svg>
<div style="left:796.19px;top:752.9px;width:65.65px;height:26.9px;background:#43a047;box-shadow: inset 0 0 0 1px rgba(255,255,255,.22)"></div>
<div style="left:801.39px;top:758.25px;width:53.05px;height:16.2px;background:#b4d9b5;border-radius:4px;"></div>
<div style="left:806.19px;top:758.45px;font-size:15px;color:#000;line-height:1;white-space:pre;">true</div>
<svg style="left:839.44px;top:765.05px;" width="6" height="4" viewBox="0 0 6 4"><path d="M0 0 H6 L3 4Z" fill="#43a047"/></svg>
<svg style="left:497.2px;top:317.8px;" width="15.6" height="4.6" viewBox="0 0 15.6 4.6"><path d="M0 0 H15.6 L9.6 4.4 H6 Z" fill="#ffa726"/></svg>
<svg style="left:497.2px;top:819.2px;" width="15.6" height="4.6" viewBox="0 0 15.6 4.6"><path d="M0 0 H15.6 L9.6 4.4 H6 Z" fill="#ffab00"/></svg>
<svg style="left:549.1px;top:357.3px;" width="15.6" height="4.6" viewBox="0 0 15.6 4.6"><path d="M0 0 H15.6 L9.6 4.4 H6 Z" fill="#ffab00"/></svg>
<div style="left:534.4px;top:410px;width:30.5px;height:1.3px;background:rgba(255,255,255,.85);"></div>
<svg style="left:549.1px;top:409.8px;" width="15.6" height="4.6" viewBox="0 0 15.6 4.6"><path d="M0 0 H15.6 L9.6 4.4 H6 Z" fill="#388e3c"/></svg>
<svg style="left:548.45px;top:451.8px;" width="15.6" height="4.6" viewBox="0 0 15.6 4.6"><path d="M0 0 H15.6 L9.6 4.4 H6 Z" fill="#ffab00"/></svg>
<svg style="left:599.7px;top:490.4px;" width="15.6" height="4.6" viewBox="0 0 15.6 4.6"><path d="M0 0 H15.6 L9.6 4.4 H6 Z" fill="#ffab00"/></svg>
<div style="left:585px;top:634.9px;width:30.5px;height:1.3px;background:rgba(255,255,255,.85);"></div>
<svg style="left:599.7px;top:634.7px;" width="15.6" height="4.6" viewBox="0 0 15.6 4.6"><path d="M0 0 H15.6 L9.6 4.4 H6 Z" fill="#5e35b1"/></svg>
<svg style="left:549.1px;top:689.8px;" width="15.6" height="4.6" viewBox="0 0 15.6 4.6"><path d="M0 0 H15.6 L9.6 4.4 H6 Z" fill="#ffab00"/></svg>
<div style="left:534.4px;top:743.1px;width:30.5px;height:1.3px;background:rgba(255,255,255,.85);"></div>
<svg style="left:549.1px;top:742.9px;" width="15.6" height="4.6" viewBox="0 0 15.6 4.6"><path d="M0 0 H15.6 L9.6 4.4 H6 Z" fill="#388e3c"/></svg>
<svg style="left:534px;top:783.75px;" width="8" height="8" viewBox="0 0 8 8"><path d="M0 0 H8 A8 8 0 0 0 0 8 Z" fill="#ffab00"/></svg>
<svg style="left:534px;top:800.5px;" width="8" height="8" viewBox="0 0 8 8"><path d="M0 8 H8 A8 8 0 0 1 0 0 Z" fill="#ffab00"/></svg>
<div style="left:534px;top:808.2px;width:30.5px;height:1.3px;background:rgba(255,255,255,.85);"></div>
<div style="left:1167.5px;top:292.25px;width:218.25px;height:26px;background:#ffa726;border-top-left-radius:8px"></div>
<div style="left:1167.5px;top:317.75px;width:39.1px;height:440.75px;background:#ffa726;"></div>
<div style="left:1167.5px;top:758px;width:218.25px;height:11.6px;background:#ffa726;border-bottom-left-radius:8px"></div>
<div style="left:1177.5px;top:297.35px;font-size:15px;color:#fff;line-height:1;white-space:pre;">when</div>
<div style="left:1223.11px;top:297.15px;width:108.93px;height:16.2px;background:#ffdca8;border-radius:4px;"></div>
<div style="left:1227.91px;top:297.35px;font-size:15px;color:#000;line-height:1;white-space:pre;">back_button</div>
<svg style="left:1317.04px;top:303.95px;" width="6" height="4" viewBox="0 0 6 4"><path d="M0 0 H6 L3 4Z" fill="#ffa726"/></svg>
<div style="left:1337.04px;top:297.35px;font-size:15px;color:#fff;line-height:1;white-space:pre;">.Click</div>
<div style="left:1177.5px;top:322.75px;font-size:15px;color:#fff;line-height:1;white-space:pre;">do</div>
<div style="left:1205.1px;top:318px;width:9px;height:9px;background:#ffa726;"></div>
<div style="left:1204.4px;top:746.25px;width:11px;height:11.3px;background:#fff;border-bottom-left-radius:10px"></div>
<div style="left:1205.6px;top:318px;width:51.5px;height:438.25px;background:#ffab00;border-top-left-radius:8px;border-bottom-left-radius:8px;box-shadow:inset 1px 1px 0 rgba(255,255,255,.35)"></div>
<div style="left:1204.6px;top:324px;width:1px;height:426.25px;background:rgba(120,70,0,.22);"></div>
<div style="left:1256.6px;top:318px;width:31.5px;height:39.6px;background:#ffab00;"></div>
<div style="left:1256.6px;top:555.2px;width:31.5px;height:40.6px;background:#ffab00;"></div>
<div style="left:1256.6px;top:647.5px;width:31.5px;height:43.3px;background:#ffab00;"></div>
<div style="left:1205.6px;top:743.25px;width:82.25px;height:13px;background:#ffab00;border-bottom-left-radius:8px"></div>
<div style="left:1256.6px;top:318px;width:31.5px;height:6px;background:#ffab00;"></div>
<svg style="left:1215.9px;top:323.8px;" width="16.8" height="16.8" viewBox="0 0 16.8 16.8"><rect x="0.5" y="0.5" width="15.8" height="15.8" rx="3.5" fill="#5e35b1" stroke="rgba(255,255,255,.55)" stroke-width="1"/><path d="M7.20 3.03 L9.60 3.03 L10.03 4.75 L10.75 5.16 L12.45 4.68 L13.65 6.76 L12.38 7.99 L12.38 8.81 L13.65 10.04 L12.45 12.12 L10.75 11.64 L10.03 12.05 L9.60 13.77 L7.20 13.77 L6.77 12.05 L6.05 11.64 L4.35 12.12 L3.15 10.04 L4.42 8.81 L4.42 7.99 L3.15 6.76 L4.35 4.68 L6.05 5.16 L6.77 4.75Z" fill="#ffe3a0"/><circle cx="8.4" cy="8.4" r="1.9" fill="#5e35b1"/></svg>
<div style="left:1244.1px;top:324.3px;font-size:15px;color:#fff;line-height:1;white-space:pre;">if</div>
<div style="left:1216.25px;top:361.05px;font-size:15px;color:#fff;line-height:1;white-space:pre;">then</div>
<div style="left:1216.25px;top:561.05px;font-size:15px;color:#fff;line-height:1;white-space:pre;">else if</div>
<div style="left:1216.25px;top:599.2px;font-size:15px;color:#fff;line-height:1;white-space:pre;">then</div>
<div style="left:1216.25px;top:656.5px;font-size:15px;color:#fff;line-height:1;white-space:pre;">else if</div>
<div style="left:1216.25px;top:694.3px;font-size:15px;color:#fff;line-height:1;white-space:pre;">then</div>
<svg style="left:1279.6px;top:323.3px;" width="9" height="16" viewBox="0 0 9 16"><path d="M9 0 C9 10 0.5 -8 0.5 7.5 S9 5 9 15 Z" fill="#43a047"/><path d="M9 0 C9 10 0.5 -8 0.5 7.5 S9 5 9 15" fill="none" stroke="rgba(255,255,255,.32)" stroke-width="1"/></svg>
<div style="left:1288.1px;top:318.3px;width:307.04px;height:37.5px;background:#43a047;box-shadow:inset 0 1px 0 rgba(255,255,255,.3),inset 1px 0 0 rgba(255,255,255,.3)"></div>
<svg style="left:1296.6px;top:329.3px;" width="9" height="16" viewBox="0 0 9 16"><path d="M9 0 C9 10 0.5 -8 0.5 7.5 S9 5 9 15 Z" fill="#8bc34a"/><path d="M9 0 C9 10 0.5 -8 0.5 7.5 S9 5 9 15" fill="none" stroke="rgba(255,255,255,.32)" stroke-width="1"/></svg>
<div style="left:1305.1px;top:324.3px;width:161.33px;height:26.9px;background:#8bc34a;box-shadow:inset 0 1px 0 rgba(255,255,255,.3),inset 1px 0 0 rgba(255,255,255,.3)"></div>
<div style="left:1311.1px;top:329.45px;width:62.22px;height:16.2px;background:#d1e7b7;border-radius:4px;"></div>
<div style="left:1315.9px;top:329.65px;font-size:15px;color:#000;line-height:1;white-space:pre;">Des2</div>
<svg style="left:1358.32px;top:336.25px;" width="6" height="4" viewBox="0 0 6 4"><path d="M0 0 H6 L3 4Z" fill="#8bc34a"/></svg>
<div style="left:1378.62px;top:329.65px;font-size:15px;color:#fff;line-height:1;white-space:pre;">.</div>
<div style="left:1388.32px;top:329.45px;width:71.12px;height:16.2px;background:#d1e7b7;border-radius:4px;"></div>
<div style="left:1393.12px;top:329.65px;font-size:15px;color:#000;line-height:1;white-space:pre;">Visible</div>
<svg style="left:1444.43px;top:336.25px;" width="6" height="4" viewBox="0 0 6 4"><path d="M0 0 H6 L3 4Z" fill="#8bc34a"/></svg>
<div style="left:1471.03px;top:329px;width:35.96px;height:16.2px;background:#b4d9b5;border-radius:4px;"></div>
<div style="left:1475.83px;top:329.2px;font-size:15px;color:#000;line-height:1;white-space:pre;">=</div>
<svg style="left:1491.99px;top:335.8px;" width="6" height="4" viewBox="0 0 6 4"><path d="M0 0 H6 L3 4Z" fill="#43a047"/></svg>
<svg style="left:1510.79px;top:329.3px;" width="9" height="16" viewBox="0 0 9 16"><path d="M9 0 C9 10 0.5 -8 0.5 7.5 S9 5 9 15 Z" fill="#43a047"/><path d="M9 0 C9 10 0.5 -8 0.5 7.5 S9 5 9 15" fill="none" stroke="rgba(255,255,255,.32)" stroke-width="1"/></svg>
<div style="left:1519.29px;top:324.3px;width:65.65px;height:27.5px;background:#43a047;box-shadow: inset 0 0 0 1px rgba(255,255,255,.22)"></div>
<div style="left:1524.49px;top:329.95px;width:53.05px;height:16.2px;background:#b4d9b5;border-radius:4px;"></div>
<div style="left:1529.29px;top:330.15px;font-size:15px;color:#000;line-height:1;white-space:pre;">true</div>
<svg style="left:1562.54px;top:336.75px;" width="6" height="4" viewBox="0 0 6 4"><path d="M0 0 H6 L3 4Z" fill="#43a047"/></svg>
<div style="left:1256.4px;top:356.9px;width:9px;height:9px;background:#ffab00;"></div>
<div style="left:1255.7px;top:542.5px;width:11px;height:11.3px;background:#fff;border-bottom-left-radius:10px"></div>
<div style="left:1256.9px;top:356.9px;width:51.5px;height:195.6px;background:#ffab00;border-top-left-radius:8px;border-bottom-left-radius:8px;box-shadow:inset 1px 1px 0 rgba(255,255,255,.35)"></div>
<div style="left:1255.9px;top:362.9px;width:1px;height:183.6px;background:rgba(120,70,0,.22);"></div>
<div style="left:1307.9px;top:356.9px;width:31.5px;height:39.2px;background:#ffab00;"></div>
<div style="left:1256.9px;top:538.75px;width:82.25px;height:13.75px;background:#ffab00;border-bottom-left-radius:8px"></div>
<div style="left:1307.9px;top:356.9px;width:31.5px;height:6px;background:#ffab00;"></div>
<svg style="left:1267.1px;top:362.5px;" width="16.8" height="16.8" viewBox="0 0 16.8 16.8"><rect x="0.5" y="0.5" width="15.8" height="15.8" rx="3.5" fill="#5e35b1" stroke="rgba(255,255,255,.55)" stroke-width="1"/><path d="M7.20 3.03 L9.60 3.03 L10.03 4.75 L10.75 5.16 L12.45 4.68 L13.65 6.76 L12.38 7.99 L12.38 8.81 L13.65 10.04 L12.45 12.12 L10.75 11.64 L10.03 12.05 L9.60 13.77 L7.20 13.77 L6.77 12.05 L6.05 11.64 L4.35 12.12 L3.15 10.04 L4.42 8.81 L4.42 7.99 L3.15 6.76 L4.35 4.68 L6.05 5.16 L6.77 4.75Z" fill="#ffe3a0"/><circle cx="8.4" cy="8.4" r="1.9" fill="#5e35b1"/></svg>
<div style="left:1295.6px;top:363.1px;font-size:15px;color:#fff;line-height:1;white-space:pre;">if</div>
<div style="left:1267.5px;top:398.55px;font-size:15px;color:#fff;line-height:1;white-space:pre;">then</div>
<svg style="left:1330.9px;top:362.5px;" width="9" height="16" viewBox="0 0 9 16"><path d="M9 0 C9 10 0.5 -8 0.5 7.5 S9 5 9 15 Z" fill="#43a047"/><path d="M9 0 C9 10 0.5 -8 0.5 7.5 S9 5 9 15" fill="none" stroke="rgba(255,255,255,.32)" stroke-width="1"/></svg>
<div style="left:1339.4px;top:357.5px;width:324.44px;height:36.9px;background:#43a047;box-shadow:inset 0 1px 0 rgba(255,255,255,.3),inset 1px 0 0 rgba(255,255,255,.3)"></div>
<svg style="left:1347.9px;top:368.5px;" width="9" height="16" viewBox="0 0 9 16"><path d="M9 0 C9 10 0.5 -8 0.5 7.5 S9 5 9 15 Z" fill="#8bc34a"/><path d="M9 0 C9 10 0.5 -8 0.5 7.5 S9 5 9 15" fill="none" stroke="rgba(255,255,255,.32)" stroke-width="1"/></svg>
<div style="left:1356.4px;top:363.5px;width:196.65px;height:26.3px;background:#8bc34a;box-shadow:inset 0 1px 0 rgba(255,255,255,.3),inset 1px 0 0 rgba(255,255,255,.3)"></div>
<div style="left:1362.4px;top:368.35px;width:131.45px;height:16.2px;background:#d1e7b7;border-radius:4px;"></div>
<div style="left:1367.2px;top:368.55px;font-size:15px;color:#000;line-height:1;white-space:pre;">e2_white_pawn</div>
<svg style="left:1478.85px;top:375.15px;" width="6" height="4" viewBox="0 0 6 4"><path d="M0 0 H6 L3 4Z" fill="#8bc34a"/></svg>
<div style="left:1499.15px;top:368.55px;font-size:15px;color:#fff;line-height:1;white-space:pre;">.</div>
<div style="left:1508.85px;top:368.35px;width:37.2px;height:16.2px;background:#d1e7b7;border-radius:4px;"></div>
<div style="left:1513.65px;top:368.55px;font-size:15px;color:#000;line-height:1;white-space:pre;">Y</div>
<svg style="left:1531.05px;top:375.15px;" width="6" height="4" viewBox="0 0 6 4"><path d="M0 0 H6 L3 4Z" fill="#8bc34a"/></svg>
<div style="left:1557.65px;top:368.2px;width:35.96px;height:16.2px;background:#b4d9b5;border-radius:4px;"></div>
<div style="left:1562.45px;top:368.4px;font-size:15px;color:#000;line-height:1;white-space:pre;">=</div>
<svg style="left:1578.61px;top:375px;" width="6" height="4" viewBox="0 0 6 4"><path d="M0 0 H6 L3 4Z" fill="#43a047"/></svg>
<svg style="left:1597.41px;top:368.5px;" width="9" height="16" viewBox="0 0 9 16"><path d="M9 0 C9 10 0.5 -8 0.5 7.5 S9 5 9 15 Z" fill="#3949ab"/><path d="M9 0 C9 10 0.5 -8 0.5 7.5 S9 5 9 15" fill="none" stroke="rgba(255,255,255,.32)" stroke-width="1"/></svg>
<div style="left:1605.91px;top:363.5px;width:47.73px;height:25.9px;background:#3949ab;box-shadow:inset 0 1px 0 rgba(255,255,255,.3),inset 1px 0 0 rgba(255,255,255,.3)"></div>
<div style="left:1611.21px;top:368.3px;width:35.53px;height:16.3px;background:#b0b6dd;border-radius:4px;"></div>
<div style="left:1616.31px;top:368.5px;font-size:15px;color:#000;line-height:1;white-space:pre;">175</div>
<div style="left:1307.9px;top:395.4px;width:9px;height:9px;background:#ffab00;"></div>
<div style="left:1308.4px;top:395.4px;width:258.33px;height:27.1px;background:#388e3c;border-top-left-radius:7px;box-shadow:inset 0 1px 0 rgba(255,255,255,.3)"></div>
<div style="left:1318.4px;top:400.3px;font-size:15px;color:#fff;line-height:1;white-space:pre;">set</div>
<div style="left:1348.01px;top:400.1px;width:90.59px;height:16.2px;background:#afd2b1;border-radius:4px;"></div>
<div style="left:1352.81px;top:400.3px;font-size:15px;color:#000;line-height:1;white-space:pre;">e2_green</div>
<svg style="left:1423.6px;top:406.9px;" width="6" height="4" viewBox="0 0 6 4"><path d="M0 0 H6 L3 4Z" fill="#388e3c"/></svg>
<div style="left:1443.9px;top:400.3px;font-size:15px;color:#fff;line-height:1;white-space:pre;">.</div>
<div style="left:1453.6px;top:400.1px;width:71.12px;height:16.2px;background:#afd2b1;border-radius:4px;"></div>
<div style="left:1458.4px;top:400.3px;font-size:15px;color:#000;line-height:1;white-space:pre;">Visible</div>
<svg style="left:1509.72px;top:406.9px;" width="6" height="4" viewBox="0 0 6 4"><path d="M0 0 H6 L3 4Z" fill="#388e3c"/></svg>
<div style="left:1534.42px;top:400.3px;font-size:15px;color:#fff;line-height:1;white-space:pre;">to</div>
<svg style="left:1558.23px;top:399.4px;" width="9" height="16" viewBox="0 0 9 16"><path d="M9 0 C9 10 0.5 -8 0.5 7.5 S9 5 9 15 Z" fill="#43a047"/><path d="M9 0 C9 10 0.5 -8 0.5 7.5 S9 5 9 15" fill="none" stroke="rgba(255,255,255,.32)" stroke-width="1"/></svg>
<div style="left:1566.73px;top:395.4px;width:70.88px;height:27.1px;background:#43a047;box-shadow:inset 0 1px 0 rgba(255,255,255,.3),inset 1px 0 0 rgba(255,255,255,.3)"></div>
<div style="left:1572.23px;top:400.1px;width:58.88px;height:16.2px;background:#b4d9b5;border-radius:4px;"></div>
<div style="left:1577.03px;top:400.3px;font-size:15px;color:#000;line-height:1;white-space:pre;">false</div>
<svg style="left:1616.11px;top:406.9px;" width="6" height="4" viewBox="0 0 6 4"><path d="M0 0 H6 L3 4Z" fill="#43a047"/></svg>
<div style="left:1307.9px;top:422.5px;width:9px;height:9px;background:#388e3c;"></div>
<div style="left:1308.4px;top:422.5px;width:258.33px;height:26px;background:#388e3c;border-top-left-radius:7px;box-shadow:inset 0 1px 0 rgba(255,255,255,.3)"></div>
<div style="left:1318.4px;top:427.4px;font-size:15px;color:#fff;line-height:1;white-space:pre;">set</div>
<div style="left:1348.01px;top:427.2px;width:90.59px;height:16.2px;background:#afd2b1;border-radius:4px;"></div>
<div style="left:1352.81px;top:427.4px;font-size:15px;color:#000;line-height:1;white-space:pre;">e4_green</div>
<svg style="left:1423.6px;top:434px;" width="6" height="4" viewBox="0 0 6 4"><path d="M0 0 H6 L3 4Z" fill="#388e3c"/></svg>
<div style="left:1443.9px;top:427.4px;font-size:15px;color:#fff;line-height:1;white-space:pre;">.</div>
<div style="left:1453.6px;top:427.2px;width:71.12px;height:16.2px;background:#afd2b1;border-radius:4px;"></div>
<div style="left:1458.4px;top:427.4px;font-size:15px;color:#000;line-height:1;white-space:pre;">Visible</div>
<svg style="left:1509.72px;top:434px;" width="6" height="4" viewBox="0 0 6 4"><path d="M0 0 H6 L3 4Z" fill="#388e3c"/></svg>
<div style="left:1534.42px;top:427.4px;font-size:15px;color:#fff;line-height:1;white-space:pre;">to</div>
<svg style="left:1558.23px;top:426.5px;" width="9" height="16" viewBox="0 0 9 16"><path d="M9 0 C9 10 0.5 -8 0.5 7.5 S9 5 9 15 Z" fill="#43a047"/><path d="M9 0 C9 10 0.5 -8 0.5 7.5 S9 5 9 15" fill="none" stroke="rgba(255,255,255,.32)" stroke-width="1"/></svg>
<div style="left:1566.73px;top:422.5px;width:70.88px;height:26px;background:#43a047;box-shadow:inset 0 1px 0 rgba(255,255,255,.3),inset 1px 0 0 rgba(255,255,255,.3)"></div>
<div style="left:1572.23px;top:427.2px;width:58.88px;height:16.2px;background:#b4d9b5;border-radius:4px;"></div>
<div style="left:1577.03px;top:427.4px;font-size:15px;color:#000;line-height:1;white-space:pre;">false</div>
<svg style="left:1616.11px;top:434px;" width="6" height="4" viewBox="0 0 6 4"><path d="M0 0 H6 L3 4Z" fill="#43a047"/></svg>
<div style="left:1307.9px;top:448.5px;width:9px;height:9px;background:#388e3c;"></div>
<div style="left:1307.2px;top:528.75px;width:11px;height:11.3px;background:#fff;border-bottom-left-radius:10px"></div>
<div style="left:1308.4px;top:448.5px;width:260.1px;height:90.25px;background:#5e35b1;border-top-left-radius:7px;border-bottom-left-radius:8px;box-shadow:inset 0 1px 0 rgba(255,255,255,.3)"></div>
<div style="left:1318.9px;top:453.45px;font-size:15px;color:#fff;line-height:1;white-space:pre;">call</div>
<div style="left:1350.81px;top:453.25px;width:131.45px;height:16.2px;background:#bfaee0;border-radius:4px;"></div>
<div style="left:1355.61px;top:453.45px;font-size:15px;color:#000;line-height:1;white-space:pre;">e2_white_pawn</div>
<svg style="left:1467.25px;top:460.05px;" width="6" height="4" viewBox="0 0 6 4"><path d="M0 0 H6 L3 4Z" fill="#5e35b1"/></svg>
<div style="left:1488.25px;top:453.45px;font-size:15px;color:#fff;line-height:1;white-space:pre;">.Move To</div>
<div style="left:1541.1px;top:480.2px;font-size:15px;color:#fff;line-height:1;white-space:pre;font-weight:bold;">x</div>
<div style="left:1541.5px;top:506.7px;font-size:15px;color:#fff;line-height:1;white-space:pre;font-weight:bold;">y</div>
<svg style="left:1560.25px;top:480px;" width="9" height="16" viewBox="0 0 9 16"><path d="M9 0 C9 10 0.5 -8 0.5 7.5 S9 5 9 15 Z" fill="#8bc34a"/><path d="M9 0 C9 10 0.5 -8 0.5 7.5 S9 5 9 15" fill="none" stroke="rgba(255,255,255,.32)" stroke-width="1"/></svg>
<div style="left:1568.75px;top:475px;width:195.05px;height:25.5px;background:#8bc34a;box-shadow:inset 0 1px 0 rgba(255,255,255,.3),inset 1px 0 0 rgba(255,255,255,.3)"></div>
<div style="left:1573.95px;top:479.45px;width:131.45px;height:16.2px;background:#d1e7b7;border-radius:4px;"></div>
<div style="left:1578.75px;top:479.65px;font-size:15px;color:#000;line-height:1;white-space:pre;">e2_white_pawn</div>
<svg style="left:1690.4px;top:486.25px;" width="6" height="4" viewBox="0 0 6 4"><path d="M0 0 H6 L3 4Z" fill="#8bc34a"/></svg>
<div style="left:1710.7px;top:479.65px;font-size:15px;color:#fff;line-height:1;white-space:pre;">.</div>
<div style="left:1720.4px;top:479.45px;width:37.2px;height:16.2px;background:#d1e7b7;border-radius:4px;"></div>
<div style="left:1725.2px;top:479.65px;font-size:15px;color:#000;line-height:1;white-space:pre;">X</div>
<svg style="left:1742.6px;top:486.25px;" width="6" height="4" viewBox="0 0 6 4"><path d="M0 0 H6 L3 4Z" fill="#8bc34a"/></svg>
<svg style="left:1560.5px;top:506.5px;" width="9" height="16" viewBox="0 0 9 16"><path d="M9 0 C9 10 0.5 -8 0.5 7.5 S9 5 9 15 Z" fill="#3949ab"/><path d="M9 0 C9 10 0.5 -8 0.5 7.5 S9 5 9 15" fill="none" stroke="rgba(255,255,255,.32)" stroke-width="1"/></svg>
<div style="left:1569px;top:501px;width:327.3px;height:38.4px;background:#3949ab;box-shadow:inset 0 1px 0 rgba(255,255,255,.3)"></div>
<svg style="left:1579px;top:506.6px;" width="17" height="17" viewBox="0 0 17 17"><rect x="0.5" y="0.5" width="16" height="16" rx="3.5" fill="#1c1cf0" stroke="rgba(255,255,255,.55)" stroke-width="1"/><path d="M7.30 3.13 L9.70 3.13 L10.13 4.85 L10.85 5.26 L12.55 4.78 L13.75 6.86 L12.48 8.09 L12.48 8.91 L13.75 10.14 L12.55 12.22 L10.85 11.74 L10.13 12.15 L9.70 13.87 L7.30 13.87 L6.87 12.15 L6.15 11.74 L4.45 12.22 L3.25 10.14 L4.52 8.91 L4.52 8.09 L3.25 6.86 L4.45 4.78 L6.15 5.26 L6.87 4.85Z" fill="none" stroke="#e8e8ff" stroke-width="1.3" stroke-linejoin="round"/><circle cx="8.5" cy="8.5" r="1.6" fill="none" stroke="#e8e8ff" stroke-width="0.8"/></svg>
<svg style="left:1605.8px;top:512.5px;" width="9" height="16" viewBox="0 0 9 16"><path d="M9 0 C9 10 0.5 -8 0.5 7.5 S9 5 9 15 Z" fill="#8bc34a"/><path d="M9 0 C9 10 0.5 -8 0.5 7.5 S9 5 9 15" fill="none" stroke="rgba(255,255,255,.32)" stroke-width="1"/></svg>
<div style="left:1614.3px;top:507.5px;width:196.65px;height:27.1px;background:#8bc34a;box-shadow:inset 0 1px 0 rgba(255,255,255,.3),inset 1px 0 0 rgba(255,255,255,.3)"></div>
<div style="left:1620.3px;top:512.75px;width:131.45px;height:16.2px;background:#d1e7b7;border-radius:4px;"></div>
<div style="left:1625.1px;top:512.95px;font-size:15px;color:#000;line-height:1;white-space:pre;">e2_white_pawn</div>
<svg style="left:1736.75px;top:519.55px;" width="6" height="4" viewBox="0 0 6 4"><path d="M0 0 H6 L3 4Z" fill="#8bc34a"/></svg>
<div style="left:1757.05px;top:512.95px;font-size:15px;color:#fff;line-height:1;white-space:pre;">.</div>
<div style="left:1766.75px;top:512.75px;width:37.2px;height:16.2px;background:#d1e7b7;border-radius:4px;"></div>
<div style="left:1771.55px;top:512.95px;font-size:15px;color:#000;line-height:1;white-space:pre;">Y</div>
<svg style="left:1788.95px;top:519.55px;" width="6" height="4" viewBox="0 0 6 4"><path d="M0 0 H6 L3 4Z" fill="#8bc34a"/></svg>
<div style="left:1820.5px;top:513.3px;font-size:15px;color:#fff;line-height:1;white-space:pre;">+</div>
<svg style="left:1837.7px;top:512.5px;" width="9" height="16" viewBox="0 0 9 16"><path d="M9 0 C9 10 0.5 -8 0.5 7.5 S9 5 9 15 Z" fill="#3949ab"/><path d="M9 0 C9 10 0.5 -8 0.5 7.5 S9 5 9 15" fill="none" stroke="rgba(255,255,255,.32)" stroke-width="1"/></svg>
<div style="left:1846.2px;top:507.5px;width:39.38px;height:27.3px;background:#3949ab;box-shadow: inset 0 0 0 1px rgba(255,255,255,.22)"></div>
<div style="left:1851.5px;top:513px;width:27.18px;height:16.3px;background:#b0b6dd;border-radius:4px;"></div>
<div style="left:1856.6px;top:513.2px;font-size:15px;color:#000;line-height:1;white-space:pre;">92</div>
<svg style="left:1279.6px;top:561.9px;" width="9" height="16" viewBox="0 0 9 16"><path d="M9 0 C9 10 0.5 -8 0.5 7.5 S9 5 9 15 Z" fill="#43a047"/><path d="M9 0 C9 10 0.5 -8 0.5 7.5 S9 5 9 15" fill="none" stroke="rgba(255,255,255,.32)" stroke-width="1"/></svg>
<div style="left:1288.1px;top:556.9px;width:307.04px;height:36.2px;background:#43a047;box-shadow:inset 0 1px 0 rgba(255,255,255,.3),inset 1px 0 0 rgba(255,255,255,.3)"></div>
<svg style="left:1296.6px;top:567.9px;" width="9" height="16" viewBox="0 0 9 16"><path d="M9 0 C9 10 0.5 -8 0.5 7.5 S9 5 9 15 Z" fill="#8bc34a"/><path d="M9 0 C9 10 0.5 -8 0.5 7.5 S9 5 9 15" fill="none" stroke="rgba(255,255,255,.32)" stroke-width="1"/></svg>
<div style="left:1305.1px;top:562.9px;width:161.33px;height:25.6px;background:#8bc34a;box-shadow:inset 0 1px 0 rgba(255,255,255,.3),inset 1px 0 0 rgba(255,255,255,.3)"></div>
<div style="left:1311.1px;top:567.4px;width:62.22px;height:16.2px;background:#d1e7b7;border-radius:4px;"></div>
<div style="left:1315.9px;top:567.6px;font-size:15px;color:#000;line-height:1;white-space:pre;">Des3</div>
<svg style="left:1358.32px;top:574.2px;" width="6" height="4" viewBox="0 0 6 4"><path d="M0 0 H6 L3 4Z" fill="#8bc34a"/></svg>
<div style="left:1378.62px;top:567.6px;font-size:15px;color:#fff;line-height:1;white-space:pre;">.</div>
<div style="left:1388.32px;top:567.4px;width:71.12px;height:16.2px;background:#d1e7b7;border-radius:4px;"></div>
<div style="left:1393.12px;top:567.6px;font-size:15px;color:#000;line-height:1;white-space:pre;">Visible</div>
<svg style="left:1444.43px;top:574.2px;" width="6" height="4" viewBox="0 0 6 4"><path d="M0 0 H6 L3 4Z" fill="#8bc34a"/></svg>
<div style="left:1471.03px;top:567.6px;width:35.96px;height:16.2px;background:#b4d9b5;border-radius:4px;"></div>
<div style="left:1475.83px;top:567.8px;font-size:15px;color:#000;line-height:1;white-space:pre;">=</div>
<svg style="left:1491.99px;top:574.4px;" width="6" height="4" viewBox="0 0 6 4"><path d="M0 0 H6 L3 4Z" fill="#43a047"/></svg>
<svg style="left:1510.79px;top:567.9px;" width="9" height="16" viewBox="0 0 9 16"><path d="M9 0 C9 10 0.5 -8 0.5 7.5 S9 5 9 15 Z" fill="#43a047"/><path d="M9 0 C9 10 0.5 -8 0.5 7.5 S9 5 9 15" fill="none" stroke="rgba(255,255,255,.32)" stroke-width="1"/></svg>
<div style="left:1519.29px;top:562.9px;width:65.65px;height:26.2px;background:#43a047;box-shadow: inset 0 0 0 1px rgba(255,255,255,.22)"></div>
<div style="left:1524.49px;top:567.9px;width:53.05px;height:16.2px;background:#b4d9b5;border-radius:4px;"></div>
<div style="left:1529.29px;top:568.1px;font-size:15px;color:#000;line-height:1;white-space:pre;">true</div>
<svg style="left:1562.54px;top:574.7px;" width="6" height="4" viewBox="0 0 6 4"><path d="M0 0 H6 L3 4Z" fill="#43a047"/></svg>
<div style="left:1256.6px;top:595px;width:9px;height:9px;background:#ffab00;"></div>
<div style="left:1257.1px;top:595px;width:229.95px;height:25.6px;background:#388e3c;border-top-left-radius:7px;box-shadow:inset 0 1px 0 rgba(255,255,255,.3)"></div>
<div style="left:1267.1px;top:599.9px;font-size:15px;color:#fff;line-height:1;white-space:pre;">set</div>
<div style="left:1296.71px;top:599.7px;width:62.22px;height:16.2px;background:#afd2b1;border-radius:4px;"></div>
<div style="left:1301.51px;top:599.9px;font-size:15px;color:#000;line-height:1;white-space:pre;">Des3</div>
<svg style="left:1343.93px;top:606.5px;" width="6" height="4" viewBox="0 0 6 4"><path d="M0 0 H6 L3 4Z" fill="#388e3c"/></svg>
<div style="left:1364.23px;top:599.9px;font-size:15px;color:#fff;line-height:1;white-space:pre;">.</div>
<div style="left:1373.93px;top:599.7px;width:71.12px;height:16.2px;background:#afd2b1;border-radius:4px;"></div>
<div style="left:1378.73px;top:599.9px;font-size:15px;color:#000;line-height:1;white-space:pre;">Visible</div>
<svg style="left:1430.04px;top:606.5px;" width="6" height="4" viewBox="0 0 6 4"><path d="M0 0 H6 L3 4Z" fill="#388e3c"/></svg>
<div style="left:1454.74px;top:599.9px;font-size:15px;color:#fff;line-height:1;white-space:pre;">to</div>
<svg style="left:1478.55px;top:599px;" width="9" height="16" viewBox="0 0 9 16"><path d="M9 0 C9 10 0.5 -8 0.5 7.5 S9 5 9 15 Z" fill="#43a047"/><path d="M9 0 C9 10 0.5 -8 0.5 7.5 S9 5 9 15" fill="none" stroke="rgba(255,255,255,.32)" stroke-width="1"/></svg>
<div style="left:1487.05px;top:595px;width:70.88px;height:25.6px;background:#43a047;box-shadow:inset 0 1px 0 rgba(255,255,255,.3),inset 1px 0 0 rgba(255,255,255,.3)"></div>
<div style="left:1492.55px;top:599.7px;width:58.88px;height:16.2px;background:#b4d9b5;border-radius:4px;"></div>
<div style="left:1497.35px;top:599.9px;font-size:15px;color:#000;line-height:1;white-space:pre;">false</div>
<svg style="left:1536.44px;top:606.5px;" width="6" height="4" viewBox="0 0 6 4"><path d="M0 0 H6 L3 4Z" fill="#43a047"/></svg>
<div style="left:1256.6px;top:620.6px;width:9px;height:9px;background:#388e3c;"></div>
<div style="left:1255.9px;top:637.5px;width:11px;height:11.3px;background:#fff;border-bottom-left-radius:10px"></div>
<div style="left:1257.1px;top:620.6px;width:229.95px;height:26.9px;background:#388e3c;border-bottom-left-radius:8px;border-top-left-radius:7px;box-shadow:inset 0 1px 0 rgba(255,255,255,.3)"></div>
<div style="left:1267.1px;top:625.5px;font-size:15px;color:#fff;line-height:1;white-space:pre;">set</div>
<div style="left:1296.71px;top:625.3px;width:62.22px;height:16.2px;background:#afd2b1;border-radius:4px;"></div>
<div style="left:1301.51px;top:625.5px;font-size:15px;color:#000;line-height:1;white-space:pre;">Des2</div>
<svg style="left:1343.93px;top:632.1px;" width="6" height="4" viewBox="0 0 6 4"><path d="M0 0 H6 L3 4Z" fill="#388e3c"/></svg>
<div style="left:1364.23px;top:625.5px;font-size:15px;color:#fff;line-height:1;white-space:pre;">.</div>
<div style="left:1373.93px;top:625.3px;width:71.12px;height:16.2px;background:#afd2b1;border-radius:4px;"></div>
<div style="left:1378.73px;top:625.5px;font-size:15px;color:#000;line-height:1;white-space:pre;">Visible</div>
<svg style="left:1430.04px;top:632.1px;" width="6" height="4" viewBox="0 0 6 4"><path d="M0 0 H6 L3 4Z" fill="#388e3c"/></svg>
<div style="left:1454.74px;top:625.5px;font-size:15px;color:#fff;line-height:1;white-space:pre;">to</div>
<svg style="left:1478.55px;top:624.6px;" width="9" height="16" viewBox="0 0 9 16"><path d="M9 0 C9 10 0.5 -8 0.5 7.5 S9 5 9 15 Z" fill="#43a047"/><path d="M9 0 C9 10 0.5 -8 0.5 7.5 S9 5 9 15" fill="none" stroke="rgba(255,255,255,.32)" stroke-width="1"/></svg>
<div style="left:1487.05px;top:620.6px;width:65.05px;height:26.9px;background:#43a047;box-shadow:inset 0 1px 0 rgba(255,255,255,.3),inset 1px 0 0 rgba(255,255,255,.3)"></div>
<div style="left:1492.55px;top:625.3px;width:53.05px;height:16.2px;background:#b4d9b5;border-radius:4px;"></div>
<div style="left:1497.35px;top:625.5px;font-size:15px;color:#000;line-height:1;white-space:pre;">true</div>
<svg style="left:1530.6px;top:632.1px;" width="6" height="4" viewBox="0 0 6 4"><path d="M0 0 H6 L3 4Z" fill="#43a047"/></svg>
<svg style="left:1279.6px;top:656.9px;" width="9" height="16" viewBox="0 0 9 16"><path d="M9 0 C9 10 0.5 -8 0.5 7.5 S9 5 9 15 Z" fill="#43a047"/><path d="M9 0 C9 10 0.5 -8 0.5 7.5 S9 5 9 15" fill="none" stroke="rgba(255,255,255,.32)" stroke-width="1"/></svg>
<div style="left:1288.1px;top:651.9px;width:307.04px;height:36.85px;background:#43a047;box-shadow:inset 0 1px 0 rgba(255,255,255,.3),inset 1px 0 0 rgba(255,255,255,.3)"></div>
<svg style="left:1296.6px;top:662.9px;" width="9" height="16" viewBox="0 0 9 16"><path d="M9 0 C9 10 0.5 -8 0.5 7.5 S9 5 9 15 Z" fill="#8bc34a"/><path d="M9 0 C9 10 0.5 -8 0.5 7.5 S9 5 9 15" fill="none" stroke="rgba(255,255,255,.32)" stroke-width="1"/></svg>
<div style="left:1305.1px;top:657.9px;width:161.33px;height:26.25px;background:#8bc34a;box-shadow:inset 0 1px 0 rgba(255,255,255,.3),inset 1px 0 0 rgba(255,255,255,.3)"></div>
<div style="left:1311.1px;top:662.72px;width:62.22px;height:16.2px;background:#d1e7b7;border-radius:4px;"></div>
<div style="left:1315.9px;top:662.93px;font-size:15px;color:#000;line-height:1;white-space:pre;">Des4</div>
<svg style="left:1358.32px;top:669.52px;" width="6" height="4" viewBox="0 0 6 4"><path d="M0 0 H6 L3 4Z" fill="#8bc34a"/></svg>
<div style="left:1378.62px;top:662.93px;font-size:15px;color:#fff;line-height:1;white-space:pre;">.</div>
<div style="left:1388.32px;top:662.72px;width:71.12px;height:16.2px;background:#d1e7b7;border-radius:4px;"></div>
<div style="left:1393.12px;top:662.93px;font-size:15px;color:#000;line-height:1;white-space:pre;">Visible</div>
<svg style="left:1444.43px;top:669.52px;" width="6" height="4" viewBox="0 0 6 4"><path d="M0 0 H6 L3 4Z" fill="#8bc34a"/></svg>
<div style="left:1471.03px;top:662.6px;width:35.96px;height:16.2px;background:#b4d9b5;border-radius:4px;"></div>
<div style="left:1475.83px;top:662.8px;font-size:15px;color:#000;line-height:1;white-space:pre;">=</div>
<svg style="left:1491.99px;top:669.4px;" width="6" height="4" viewBox="0 0 6 4"><path d="M0 0 H6 L3 4Z" fill="#43a047"/></svg>
<svg style="left:1510.79px;top:662.9px;" width="9" height="16" viewBox="0 0 9 16"><path d="M9 0 C9 10 0.5 -8 0.5 7.5 S9 5 9 15 Z" fill="#43a047"/><path d="M9 0 C9 10 0.5 -8 0.5 7.5 S9 5 9 15" fill="none" stroke="rgba(255,255,255,.32)" stroke-width="1"/></svg>
<div style="left:1519.29px;top:657.9px;width:65.65px;height:26.85px;background:#43a047;box-shadow: inset 0 0 0 1px rgba(255,255,255,.22)"></div>
<div style="left:1524.49px;top:663.23px;width:53.05px;height:16.2px;background:#b4d9b5;border-radius:4px;"></div>
<div style="left:1529.29px;top:663.43px;font-size:15px;color:#000;line-height:1;white-space:pre;">true</div>
<svg style="left:1562.54px;top:670.02px;" width="6" height="4" viewBox="0 0 6 4"><path d="M0 0 H6 L3 4Z" fill="#43a047"/></svg>
<div style="left:1256.6px;top:690px;width:9px;height:9px;background:#ffab00;"></div>
<div style="left:1257.1px;top:690px;width:229.95px;height:26.25px;background:#388e3c;border-top-left-radius:7px;box-shadow:inset 0 1px 0 rgba(255,255,255,.3)"></div>
<div style="left:1267.1px;top:694.9px;font-size:15px;color:#fff;line-height:1;white-space:pre;">set</div>
<div style="left:1296.71px;top:694.7px;width:62.22px;height:16.2px;background:#afd2b1;border-radius:4px;"></div>
<div style="left:1301.51px;top:694.9px;font-size:15px;color:#000;line-height:1;white-space:pre;">Des3</div>
<svg style="left:1343.93px;top:701.5px;" width="6" height="4" viewBox="0 0 6 4"><path d="M0 0 H6 L3 4Z" fill="#388e3c"/></svg>
<div style="left:1364.23px;top:694.9px;font-size:15px;color:#fff;line-height:1;white-space:pre;">.</div>
<div style="left:1373.93px;top:694.7px;width:71.12px;height:16.2px;background:#afd2b1;border-radius:4px;"></div>
<div style="left:1378.73px;top:694.9px;font-size:15px;color:#000;line-height:1;white-space:pre;">Visible</div>
<svg style="left:1430.04px;top:701.5px;" width="6" height="4" viewBox="0 0 6 4"><path d="M0 0 H6 L3 4Z" fill="#388e3c"/></svg>
<div style="left:1454.74px;top:694.9px;font-size:15px;color:#fff;line-height:1;white-space:pre;">to</div>
<svg style="left:1478.55px;top:694px;" width="9" height="16" viewBox="0 0 9 16"><path d="M9 0 C9 10 0.5 -8 0.5 7.5 S9 5 9 15 Z" fill="#43a047"/><path d="M9 0 C9 10 0.5 -8 0.5 7.5 S9 5 9 15" fill="none" stroke="rgba(255,255,255,.32)" stroke-width="1"/></svg>
<div style="left:1487.05px;top:690px;width:65.05px;height:26.25px;background:#43a047;box-shadow:inset 0 1px 0 rgba(255,255,255,.3),inset 1px 0 0 rgba(255,255,255,.3)"></div>
<div style="left:1492.55px;top:694.7px;width:53.05px;height:16.2px;background:#b4d9b5;border-radius:4px;"></div>
<div style="left:1497.35px;top:694.9px;font-size:15px;color:#000;line-height:1;white-space:pre;">true</div>
<svg style="left:1530.6px;top:701.5px;" width="6" height="4" viewBox="0 0 6 4"><path d="M0 0 H6 L3 4Z" fill="#43a047"/></svg>
<div style="left:1256.6px;top:716.25px;width:9px;height:9px;background:#388e3c;"></div>
<div style="left:1255.9px;top:733.1px;width:11px;height:11.3px;background:#fff;border-bottom-left-radius:10px"></div>
<div style="left:1257.1px;top:716.25px;width:229.95px;height:26.85px;background:#388e3c;border-bottom-left-radius:8px;border-top-left-radius:7px;box-shadow:inset 0 1px 0 rgba(255,255,255,.3)"></div>
<div style="left:1267.1px;top:721.15px;font-size:15px;color:#fff;line-height:1;white-space:pre;">set</div>
<div style="left:1296.71px;top:720.95px;width:62.22px;height:16.2px;background:#afd2b1;border-radius:4px;"></div>
<div style="left:1301.51px;top:721.15px;font-size:15px;color:#000;line-height:1;white-space:pre;">Des4</div>
<svg style="left:1343.93px;top:727.75px;" width="6" height="4" viewBox="0 0 6 4"><path d="M0 0 H6 L3 4Z" fill="#388e3c"/></svg>
<div style="left:1364.23px;top:721.15px;font-size:15px;color:#fff;line-height:1;white-space:pre;">.</div>
<div style="left:1373.93px;top:720.95px;width:71.12px;height:16.2px;background:#afd2b1;border-radius:4px;"></div>
<div style="left:1378.73px;top:721.15px;font-size:15px;color:#000;line-height:1;white-space:pre;">Visible</div>
<svg style="left:1430.04px;top:727.75px;" width="6" height="4" viewBox="0 0 6 4"><path d="M0 0 H6 L3 4Z" fill="#388e3c"/></svg>
<div style="left:1454.74px;top:721.15px;font-size:15px;color:#fff;line-height:1;white-space:pre;">to</div>
<svg style="left:1478.55px;top:720.25px;" width="9" height="16" viewBox="0 0 9 16"><path d="M9 0 C9 10 0.5 -8 0.5 7.5 S9 5 9 15 Z" fill="#43a047"/><path d="M9 0 C9 10 0.5 -8 0.5 7.5 S9 5 9 15" fill="none" stroke="rgba(255,255,255,.32)" stroke-width="1"/></svg>
<div style="left:1487.05px;top:716.25px;width:70.88px;height:26.85px;background:#43a047;box-shadow:inset 0 1px 0 rgba(255,255,255,.3),inset 1px 0 0 rgba(255,255,255,.3)"></div>
<div style="left:1492.55px;top:720.95px;width:58.88px;height:16.2px;background:#b4d9b5;border-radius:4px;"></div>
<div style="left:1497.35px;top:721.15px;font-size:15px;color:#000;line-height:1;white-space:pre;">false</div>
<svg style="left:1536.44px;top:727.75px;" width="6" height="4" viewBox="0 0 6 4"><path d="M0 0 H6 L3 4Z" fill="#43a047"/></svg>
<svg style="left:1220.3px;top:317.8px;" width="15.6" height="4.6" viewBox="0 0 15.6 4.6"><path d="M0 0 H15.6 L9.6 4.4 H6 Z" fill="#ffa726"/></svg>
<svg style="left:1220.3px;top:756.05px;" width="15.6" height="4.6" viewBox="0 0 15.6 4.6"><path d="M0 0 H15.6 L9.6 4.4 H6 Z" fill="#ffab00"/></svg>
<svg style="left:1271.6px;top:356.7px;" width="15.6" height="4.6" viewBox="0 0 15.6 4.6"><path d="M0 0 H15.6 L9.6 4.4 H6 Z" fill="#ffab00"/></svg>
<svg style="left:1323.1px;top:395.2px;" width="15.6" height="4.6" viewBox="0 0 15.6 4.6"><path d="M0 0 H15.6 L9.6 4.4 H6 Z" fill="#ffab00"/></svg>
<div style="left:1308.4px;top:538.75px;width:30.5px;height:1.3px;background:rgba(255,255,255,.85);"></div>
<svg style="left:1323.1px;top:538.55px;" width="15.6" height="4.6" viewBox="0 0 15.6 4.6"><path d="M0 0 H15.6 L9.6 4.4 H6 Z" fill="#5e35b1"/></svg>
<svg style="left:1271.8px;top:594.8px;" width="15.6" height="4.6" viewBox="0 0 15.6 4.6"><path d="M0 0 H15.6 L9.6 4.4 H6 Z" fill="#ffab00"/></svg>
<div style="left:1257.1px;top:647.5px;width:30.5px;height:1.3px;background:rgba(255,255,255,.85);"></div>
<svg style="left:1271.8px;top:647.3px;" width="15.6" height="4.6" viewBox="0 0 15.6 4.6"><path d="M0 0 H15.6 L9.6 4.4 H6 Z" fill="#388e3c"/></svg>
<svg style="left:1271.8px;top:689.8px;" width="15.6" height="4.6" viewBox="0 0 15.6 4.6"><path d="M0 0 H15.6 L9.6 4.4 H6 Z" fill="#ffab00"/></svg>
<div style="left:1257.1px;top:743.1px;width:30.5px;height:1.3px;background:rgba(255,255,255,.85);"></div>
<svg style="left:1271.8px;top:742.9px;" width="15.6" height="4.6" viewBox="0 0 15.6 4.6"><path d="M0 0 H15.6 L9.6 4.4 H6 Z" fill="#388e3c"/></svg>
<svg style="left:1780px;top:250px" width="140" height="150" viewBox="0 0 1008 1080"><path d="M372 140 Q380 55 445 55 Q515 60 515 140" stroke="#06221a" stroke-width="26" fill="none"/><path d="M62 262 L112 242 L98 208 L200 158 L228 192 L288 188 L300 462 L150 466 Z" fill="#d4622a" stroke="#06221a" stroke-width="20" stroke-linejoin="round"/><path d="M300 165 L350 122 L440 132 L492 118 L525 150 L522 468 L305 468 Z" fill="#46a5d8" stroke="#06221a" stroke-width="20" stroke-linejoin="round"/><path d="M535 240 L578 162 L655 190 L700 212 L800 228 L690 492 L535 472 Z" fill="#7d5290" stroke="#06221a" stroke-width="20" stroke-linejoin="round"/><path d="M770 262 Q850 450 840 640 Q838 690 770 692 L750 600 Q760 420 720 330 Z" fill="#06221a"/><path d="M145 470 Q420 470 700 490 Q745 520 748 700 Q745 745 690 760 Q480 800 230 750 Q90 700 78 620 Q80 520 145 470 Z" fill="#4fb9ae" stroke="#06221a" stroke-width="20" stroke-linejoin="round"/><path d="M150 485 Q70 560 105 640 Q160 700 300 690 Q480 670 650 510" stroke="#06221a" stroke-width="14" fill="none"/><path d="M195 725 Q330 735 470 690 Q590 640 690 530" stroke="#06221a" stroke-width="14" fill="none"/><path d="M470 672 L575 680 Q595 640 590 590" stroke="#06221a" stroke-width="12" fill="none"/><path d="M690 500 L700 740" stroke="#06221a" stroke-width="14" fill="none"/></svg>
<svg style="left:1843px;top:753px;" width="36" height="36" viewBox="0 0 36 36"><circle cx="18" cy="18.4" r="13.5" stroke="#1e1e1e" stroke-width="2.4" fill="#fff"/><circle cx="18" cy="18.4" r="5.2" fill="#1e1e1e"/><path d="M18 -1 V6 M18 31 V38 M-1 18.4 H5.5 M30.5 18.4 H37" stroke="#1e1e1e" stroke-width="2.2"/></svg>
<svg style="left:1839px;top:805px;" width="42" height="42" viewBox="0 0 42 42"><circle cx="21" cy="21" r="18.6" stroke="#1e1e1e" stroke-width="2.4" fill="#fff"/><path d="M21 10 V32 M10 21 H32" stroke="#1e1e1e" stroke-width="2.4"/></svg>
<svg style="left:1839px;top:848px;" width="42" height="42" viewBox="0 0 42 42"><circle cx="21" cy="21" r="18.6" stroke="#1e1e1e" stroke-width="2.4" fill="#fff"/><path d="M10 21 H32" stroke="#1e1e1e" stroke-width="2.4"/></svg>
<svg style="left:1822px;top:920px;" width="56" height="72" viewBox="0 0 56 72"><path d="M2 6 H18 L22 2.5 H33 L37 6 H54 V13.5 H2Z" fill="#1e1e1e"/><path d="M5.5 17.5 H50.5 V65 Q50.5 69.5 46 69.5 H10 Q5.5 69.5 5.5 65Z" fill="#1e1e1e"/></svg>
<svg style="left:420px;top:899px;" width="30" height="66" viewBox="0 0 30 66"><path d="M2 15 L13 3 L24 15Z" fill="#e6e6e6" stroke="#222" stroke-width="1.3"/><path d="M2 50 L13 62 L24 50Z" fill="#e6e6e6" stroke="#222" stroke-width="1.3"/></svg>
<svg style="left:504px;top:899px;" width="30" height="66" viewBox="0 0 30 66"><path d="M2 15 L13 3 L24 15Z" fill="#e6e6e6" stroke="#222" stroke-width="1.3"/><path d="M2 50 L13 62 L24 50Z" fill="#e6e6e6" stroke="#222" stroke-width="1.3"/></svg>
<svg style="left:421px;top:920px;" width="23" height="21" viewBox="0 0 23 21"><path d="M11.5 1.5 L22 19.5 H1Z" fill="#f3f18a" stroke="#aaa" stroke-width="1"/><path d="M11.5 7 V14 M11.5 16 V17.5" stroke="#888" stroke-width="1.3"/></svg>
<div style="left:448px;top:927.3px;font-size:15px;color:#222;line-height:1;white-space:pre;">5</div>
<svg style="left:503px;top:920px;" width="22" height="22" viewBox="0 0 22 22"><circle cx="11" cy="11" r="10" fill="#e84a4a" stroke="#999" stroke-width="1"/><path d="M6.5 6.5 L15.5 15.5 M15.5 6.5 L6.5 15.5" stroke="#fff" stroke-width="2.6"/></svg>
<div style="left:528.5px;top:927.3px;font-size:15px;color:#222;line-height:1;white-space:pre;">0</div>
<div style="left:403px;top:965px;width:151.5px;height:25.5px;border:1.5px solid #222;background:#eee;box-sizing:border-box"></div>
<div style="left:421px;top:970.53px;font-size:16.5px;color:#222;line-height:1;white-space:pre;transform:scaleX(1.0006);transform-origin:0 0;">Show Warnings</div>
<div style="left:916px;top:1018px;width:436px;height:12px;background:#c8c8c8;border-radius:6px;"></div>
<div style="left:1907.5px;top:441.5px;width:11px;height:328px;background:#c8c8c8;border-radius:5.5px;"></div>
<div style="left:0px;top:1040px;width:1920px;height:40px;background:linear-gradient(90deg,#203038 0%,#1f2e3a 40%,#1c2a40 75%,#1b2842 100%);"></div>
<svg style="left:15px;top:1051px;" width="18" height="18" viewBox="0 0 18 18"><path d="M0 2.5 L7.5 1.4 V8.4 H0Z M8.6 1.2 L17.5 0 V8.4 H8.6Z M0 9.5 H7.5 V16.6 L0 15.5Z M8.6 9.5 H17.5 V18 L8.6 16.8Z" fill="#fff"/></svg>
<div style="left:48px;top:1040px;width:288px;height:40px;background:#f0f0f0;"></div>
<svg style="left:60px;top:1051px;" width="17" height="18" viewBox="0 0 17 18"><circle cx="10.5" cy="6.5" r="5.3" stroke="#222" stroke-width="1.4" fill="none"/><path d="M6.8 10.3 L1 16.5" stroke="#222" stroke-width="1.6"/></svg>
<div style="left:88.5px;top:1053px;font-size:15px;color:#333;line-height:1;white-space:pre;transform:scaleX(0.9580);transform-origin:0 0;">Type here to search</div>
<svg style="left:258px;top:1042px;" width="28" height="27" viewBox="0 0 28 27"><path d="M14 2 L9 10 M14 2 L19 10 M5 14 L2 20 Q1 23 5 23 H11 M23 14 L26 20 Q27 23 23 23 H17" stroke="#1e9e3e" stroke-width="3.4" fill="none" stroke-linecap="round"/><path d="M11 23 L8 20 M17 23 L20 20 M19 10 L20 6 M9 10 L5 9" stroke="#1e9e3e" stroke-width="2.6" stroke-linecap="round"/></svg>
<svg style="left:270px;top:1066px;" width="66" height="14" viewBox="0 0 66 14"><ellipse cx="33" cy="19" rx="31" ry="19" fill="#3a8fdc"/><path d="M18 6 Q30 -2 50 5 Q42 9 36 7 Q30 12 25 14 Q22 9 18 6Z" fill="#7fd8a8"/><path d="M48 5 Q58 8 64 14 L50 14 Q46 9 48 5Z" fill="#86e0b0"/></svg>
<svg style="left:351px;top:1051px;" width="18" height="16" viewBox="0 0 18 16"><rect x="1" y="3.5" width="12" height="9" stroke="#fff" stroke-width="1.4" fill="none"/><path d="M1 1 H13 M1 15 H13 M16 1 V2.5 M16 5 V15" stroke="#fff" stroke-width="1.4"/></svg>
<svg style="left:399px;top:1047px;" width="25" height="25" viewBox="0 0 25 25"><defs><linearGradient id="eg" x1="0" y1="0" x2="1" y2="1"><stop offset="0" stop-color="#38b7f0"/><stop offset=".5" stop-color="#1e88d8"/><stop offset="1" stop-color="#0c59a4"/></linearGradient></defs><circle cx="12.5" cy="12.5" r="12" fill="url(#eg)"/><path d="M24 13 Q24 6 17 4.5 Q9 3 5 9 Q10 6 15 9 Q18 11 15 14 L23 14Z" fill="#5fd45a"/><ellipse cx="14" cy="15" rx="5" ry="3.5" fill="#0f4c8a"/></svg>
<svg style="left:448px;top:1050px;" width="23" height="19" viewBox="0 0 23 19"><path d="M1 1.5 H8 L10 3.5 H22 V18 H1Z" fill="#f6c648"/><rect x="1" y="5" width="21" height="13" fill="#ffd75e"/><path d="M6 18 V12 H17 V18 H14 V15 H9 V18Z" fill="#3a96dd"/></svg>
<svg style="left:496px;top:1048px;" width="24" height="24" viewBox="0 0 24 24"><rect x="1" y="6" width="22" height="17" rx="2" fill="#f3f3f3"/><path d="M7 8 V3.5 Q7 1.5 9 1.5 H15 Q17 1.5 17 3.5 V8" stroke="#29a3e0" stroke-width="2" fill="none"/><rect x="7" y="10" width="4.5" height="4.5" fill="#f25022"/><rect x="12.5" y="10" width="4.5" height="4.5" fill="#7fba00"/><rect x="7" y="15.5" width="4.5" height="4.5" fill="#00a4ef"/><rect x="12.5" y="15.5" width="4.5" height="4.5" fill="#ffb900"/></svg>
<svg style="left:545px;top:1048px;" width="25" height="23" viewBox="0 0 25 23"><path d="M1 9 L12.5 1 L24 9 V22 H1Z" fill="#0f6cbd"/><path d="M1 9 L12.5 16 L24 9 V22 H1Z" fill="#28a8ea"/><path d="M1 9 L12.5 17 L24 9" stroke="#fff" stroke-width="0" fill="none"/><path d="M5 8 L12.5 13 L20 8 L12.5 5Z" fill="#fff"/></svg>
<svg style="left:594px;top:1047px;" width="26" height="26" viewBox="0 0 26 26"><circle cx="13" cy="13" r="12" fill="#db4437"/><path d="M13 13 L2.6080000000000005 7.0 A12 12 0 0 0 13 25 Z" fill="#0f9d58"/><path d="M13 13 L13 25 A12 12 0 0 0 23.392 7.0 Z" fill="#ffcd40"/><circle cx="13" cy="13" r="5.5200000000000005" fill="#fff"/><circle cx="13" cy="13" r="4.32" fill="#4285f4"/></svg>
<div style="left:631.5px;top:1040px;width:48.5px;height:40px;background:#3b4a55;"></div>
<div style="left:631.5px;top:1077px;width:48.5px;height:3px;background:#76b9ed;"></div>
<svg style="left:643px;top:1047px;" width="30" height="30" viewBox="0 0 30 30"><circle cx="13" cy="13" r="12" fill="#db4437"/><path d="M13 13 L2.6080000000000005 7.0 A12 12 0 0 0 13 25 Z" fill="#0f9d58"/><path d="M13 13 L13 25 A12 12 0 0 0 23.392 7.0 Z" fill="#ffcd40"/><circle cx="13" cy="13" r="5.5200000000000005" fill="#fff"/><circle cx="13" cy="13" r="4.32" fill="#4285f4"/><circle cx="19.5" cy="19.5" r="7.5" fill="#dfe6ea"/><circle cx="19.5" cy="17.5" r="3" fill="#7a4a30"/><path d="M14 25 Q19.5 19 25 25Z" fill="#6a8fa0"/></svg>
<svg style="left:1586px;top:1047px;" width="28" height="24" viewBox="0 0 28 24"><path d="M9 1 A7 7 0 1 0 16 9 A5.5 5.5 0 0 1 9 1Z" fill="#f7b32b"/><path d="M3 22 Q0 22 0 18.5 Q0 15 3.5 15 Q4.5 11 9 11 Q13 11 14.5 14 Q15.5 13.5 17 13.5 Q21 13.5 21.5 17 Q25 17.2 25 19.6 Q25 22 22 22Z" fill="#a9cdf0"/></svg>
<div style="left:1620px;top:1052.3px;font-size:15px;color:#fff;line-height:1;white-space:pre;transform:scaleX(0.8846);transform-origin:0 0;">27°C  Haze</div>
<svg style="left:1712px;top:1053px;" width="14" height="9" viewBox="0 0 14 9"><path d="M1 8 L7 2 L13 8" stroke="#fff" stroke-width="1.2" fill="none"/></svg>
<svg style="left:1736px;top:1050px;" width="14" height="18" viewBox="0 0 14 18"><rect x="1.5" y="5" width="8" height="8" rx="2" stroke="#fff" stroke-width="1.1" fill="none"/><path d="M9.5 8 L12.5 6 V12 L9.5 10" stroke="#fff" stroke-width="1.1" fill="none"/><path d="M3 2 Q6.5 0 10 2 M3 16 Q6.5 18 10 16" stroke="#fff" stroke-width="1" fill="none"/></svg>
<svg style="left:1758px;top:1051px;" width="18" height="16" viewBox="0 0 18 16"><rect x="4" y="2" width="13" height="9" stroke="#fff" stroke-width="1.1" fill="none"/><path d="M10.5 11 V14 M6 14.5 H15 M1 1 V6 H4" stroke="#fff" stroke-width="1.1" fill="none"/></svg>
<svg style="left:1782px;top:1050px;" width="18" height="17" viewBox="0 0 18 17"><path d="M1 6 H4 L8 2 V15 L4 11 H1Z" stroke="#fff" stroke-width="1.1" fill="none"/><path d="M10.5 6 Q12 8.5 10.5 11 M12.5 4 Q15 8.5 12.5 13" stroke="#fff" stroke-width="1.1" fill="none"/><path d="M14.5 2 Q18 8.5 14.5 15" stroke="#888" stroke-width="1.1" fill="none"/></svg>
<div style="left:1811.5px;top:1045.42px;font-size:12.5px;color:#fff;line-height:1;white-space:pre;transform:scaleX(0.8878);transform-origin:0 0;">10:07 PM</div>
<div style="left:1809px;top:1062.82px;font-size:12.5px;color:#fff;line-height:1;white-space:pre;transform:scaleX(0.9261);transform-origin:0 0;">3/18/2023</div>
<svg style="left:1878px;top:1051px;" width="18" height="17" viewBox="0 0 18 17"><path d="M1 1 H17 V12 H11 L9 15 L7 12 H1Z" stroke="#fff" stroke-width="1.2" fill="none"/></svg>
<div style="left:1915px;top:1040px;width:1px;height:40px;background:#5a6470;"></div>
</body></html>
